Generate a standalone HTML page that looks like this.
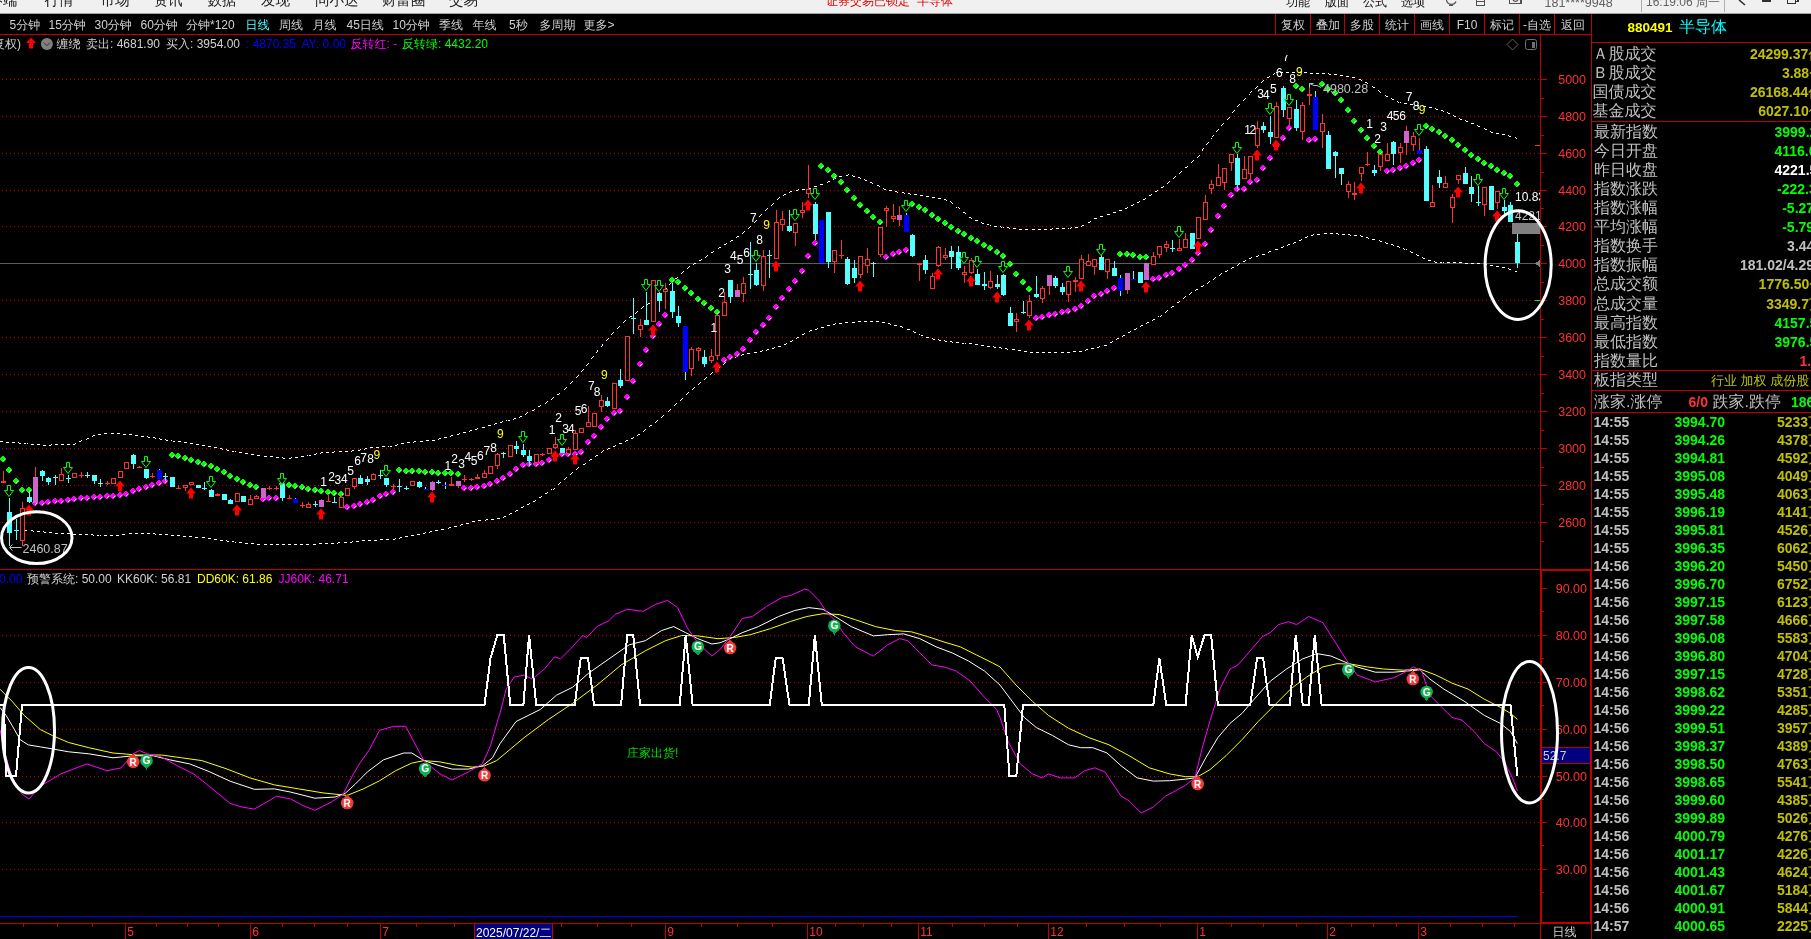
<!DOCTYPE html>
<html lang="zh"><head><meta charset="utf-8"><title>880491 半导体</title><style>
html,body{margin:0;padding:0;background:#000;}
#root{position:relative;width:1811px;height:939px;overflow:hidden;background:#000;font-family:"Liberation Sans","WenQuanYi Zen Hei","Noto Sans CJK SC",sans-serif;}
#topbar{position:absolute;left:0;top:0;width:1811px;height:13px;background:#f0f0f0;border-bottom:1px solid #a0a0a0;box-sizing:content-box}
#txt{position:absolute;left:0;top:0;width:1811px;height:939px;will-change:transform;transform:translateZ(0)}
.t{position:absolute;white-space:nowrap;line-height:1;color:#c0c0c0;}
.m14{font-size:14.5px;color:#202020;line-height:18px}
.m12{font-size:12px;color:#101010;line-height:14px}
.m12r{font-size:12px;color:#e00000;line-height:14px}
.p12{font-size:12px;line-height:14px;color:#d0d0d0;margin-top:1px}
.ax{font-size:12.5px;line-height:14px;color:#ff3232;text-align:right;margin-top:1px}
.ax2{font-size:12px;line-height:14px;color:#ff3232}
.num{font-size:12px;line-height:14px;color:#ffffff;text-align:center}
.lab{font-size:16px;line-height:18px;color:#c0c0c0;font-weight:300}
.hd{font-size:13.5px;line-height:14px;font-weight:bold;color:#ffff00}
.val{font-size:14px;line-height:14px;font-weight:bold}
.t13{font-size:13px;line-height:14px;color:#c0c000;font-weight:bold}
.y{color:#c0c000}.g{color:#00ff00}.w{color:#ffffff}.s{color:#c0c0c0}.r{color:#ff3232}
</style></head>
<body><div id="root">
<svg width="1811" height="939" viewBox="0 0 1811 939" shape-rendering="crispEdges" style="position:absolute;left:0;top:0"><rect x="0" y="0" width="1811" height="13" fill="#f0f0f0"/><rect x="0" y="13" width="1811" height="1" fill="#a0a0a0"/>
<rect x="1641" y="0" width="1" height="12" fill="#b0b0b0"/><rect x="1724" y="0" width="1" height="12" fill="#b0b0b0"/>
<path d="M1446.5,0 a5,5 0 0 0 9.5,1.5 M1449,5.5 h4" fill="none" stroke="#505050" stroke-width="1.2" shape-rendering="geometricPrecision"/>
<path d="M1476.5,0 V5.5 H1484.5 V0 M1476.5,1.5 H1484.5" fill="none" stroke="#505050" stroke-width="1.2"/>
<path d="M1509.5,0 V3.5 H1521 V0" fill="none" stroke="#505050" stroke-width="1.2"/><path d="M1513,0 a3,3 0 0 0 5,0" fill="none" stroke="#505050" stroke-width="1.2" shape-rendering="geometricPrecision"/>
<path d="M1739,0 L1745,5" fill="none" stroke="#303030" stroke-width="1.6" shape-rendering="geometricPrecision"/>
<rect x="1762" y="0" width="9" height="2" fill="#303030"/>
<path d="M1787.5,0 V3.5 H1795.5 V0 M1795.5,1.5 H1798 V0" fill="none" stroke="#303030" stroke-width="1.4"/>
<line x1="2" y1="79.5" x2="1540" y2="79.5" stroke="#c00000" stroke-width="1" stroke-dasharray="1 3"/>
<line x1="2" y1="116.5" x2="1540" y2="116.5" stroke="#c00000" stroke-width="1" stroke-dasharray="1 3"/>
<line x1="2" y1="153.5" x2="1540" y2="153.5" stroke="#c00000" stroke-width="1" stroke-dasharray="1 3"/>
<line x1="2" y1="190.5" x2="1540" y2="190.5" stroke="#c00000" stroke-width="1" stroke-dasharray="1 3"/>
<line x1="2" y1="226.5" x2="1540" y2="226.5" stroke="#c00000" stroke-width="1" stroke-dasharray="1 3"/>
<line x1="2" y1="300.5" x2="1540" y2="300.5" stroke="#c00000" stroke-width="1" stroke-dasharray="1 3"/>
<line x1="2" y1="337.5" x2="1540" y2="337.5" stroke="#c00000" stroke-width="1" stroke-dasharray="1 3"/>
<line x1="2" y1="374.5" x2="1540" y2="374.5" stroke="#c00000" stroke-width="1" stroke-dasharray="1 3"/>
<line x1="2" y1="411.5" x2="1540" y2="411.5" stroke="#c00000" stroke-width="1" stroke-dasharray="1 3"/>
<line x1="2" y1="448.5" x2="1540" y2="448.5" stroke="#c00000" stroke-width="1" stroke-dasharray="1 3"/>
<line x1="2" y1="485.5" x2="1540" y2="485.5" stroke="#c00000" stroke-width="1" stroke-dasharray="1 3"/>
<line x1="2" y1="522.5" x2="1540" y2="522.5" stroke="#c00000" stroke-width="1" stroke-dasharray="1 3"/>
<rect x="0" y="263" width="1540" height="1" fill="#5c5c5c"/>
<line x1="2" y1="635.5" x2="1540" y2="635.5" stroke="#c00000" stroke-width="1" stroke-dasharray="1 3"/>
<line x1="2" y1="682.5" x2="1540" y2="682.5" stroke="#c00000" stroke-width="1" stroke-dasharray="1 3"/>
<line x1="2" y1="729.5" x2="1540" y2="729.5" stroke="#c00000" stroke-width="1" stroke-dasharray="1 3"/>
<line x1="2" y1="776.5" x2="1540" y2="776.5" stroke="#c00000" stroke-width="1" stroke-dasharray="1 3"/>
<line x1="2" y1="822.5" x2="1540" y2="822.5" stroke="#c00000" stroke-width="1" stroke-dasharray="1 3"/>
<line x1="2" y1="869.5" x2="1540" y2="869.5" stroke="#c00000" stroke-width="1" stroke-dasharray="1 3"/>
<rect x="0" y="34" width="1592" height="1" fill="#c00000"/>
<rect x="1275" y="14" width="1" height="20" fill="#c00000"/>
<rect x="1310" y="14" width="1" height="20" fill="#c00000"/>
<rect x="1344" y="14" width="1" height="20" fill="#c00000"/>
<rect x="1379" y="14" width="1" height="20" fill="#c00000"/>
<rect x="1414" y="14" width="1" height="20" fill="#c00000"/>
<rect x="1449" y="14" width="1" height="20" fill="#c00000"/>
<rect x="1484" y="14" width="1" height="20" fill="#c00000"/>
<rect x="1519" y="14" width="1" height="20" fill="#c00000"/>
<rect x="1554" y="14" width="1" height="20" fill="#c00000"/>
<rect x="1591" y="14" width="1" height="925" fill="#c00000"/>
<rect x="1540" y="35" width="1" height="534" fill="#c00000"/>
<rect x="0" y="569" width="1592" height="1" fill="#c00000"/>
<rect x="0" y="923" width="1592" height="1" fill="#c00000"/>
<rect x="1540" y="569" width="1" height="370" fill="#c00000"/>
<rect x="1540" y="569" width="2" height="355" fill="#c00000"/>
<rect x="1590" y="569" width="2" height="355" fill="#c00000"/>
<rect x="1540" y="569" width="52" height="2" fill="#c00000"/>
<rect x="1540" y="922" width="52" height="2" fill="#c00000"/>
<rect x="1592" y="42" width="219" height="1" fill="#c00000"/>
<rect x="1592" y="121" width="219" height="1" fill="#c00000"/>
<rect x="1592" y="370" width="219" height="1" fill="#c00000"/>
<rect x="1592" y="390" width="219" height="1" fill="#c00000"/>
<rect x="1592" y="412" width="219" height="1" fill="#c00000"/>
<rect x="0" y="916" width="1518" height="1" fill="#0000ff"/>
<rect x="1541" y="79" width="6" height="1" fill="#c00000"/>
<rect x="1541" y="98" width="3" height="1" fill="#c00000"/>
<rect x="1541" y="116" width="6" height="1" fill="#c00000"/>
<rect x="1541" y="135" width="3" height="1" fill="#c00000"/>
<rect x="1541" y="153" width="6" height="1" fill="#c00000"/>
<rect x="1541" y="172" width="3" height="1" fill="#c00000"/>
<rect x="1541" y="190" width="6" height="1" fill="#c00000"/>
<rect x="1541" y="208" width="3" height="1" fill="#c00000"/>
<rect x="1541" y="226" width="6" height="1" fill="#c00000"/>
<rect x="1541" y="245" width="3" height="1" fill="#c00000"/>
<rect x="1541" y="263" width="6" height="1" fill="#c00000"/>
<rect x="1541" y="282" width="3" height="1" fill="#c00000"/>
<rect x="1541" y="300" width="6" height="1" fill="#c00000"/>
<rect x="1541" y="319" width="3" height="1" fill="#c00000"/>
<rect x="1541" y="337" width="6" height="1" fill="#c00000"/>
<rect x="1541" y="356" width="3" height="1" fill="#c00000"/>
<rect x="1541" y="374" width="6" height="1" fill="#c00000"/>
<rect x="1541" y="393" width="3" height="1" fill="#c00000"/>
<rect x="1541" y="411" width="6" height="1" fill="#c00000"/>
<rect x="1541" y="430" width="3" height="1" fill="#c00000"/>
<rect x="1541" y="448" width="6" height="1" fill="#c00000"/>
<rect x="1541" y="467" width="3" height="1" fill="#c00000"/>
<rect x="1541" y="485" width="6" height="1" fill="#c00000"/>
<rect x="1541" y="504" width="3" height="1" fill="#c00000"/>
<rect x="1541" y="522" width="6" height="1" fill="#c00000"/>
<rect x="1541" y="541" width="3" height="1" fill="#c00000"/>
<rect x="1535" y="145" width="5" height="1" fill="#ff3232"/>
<rect x="1535" y="300" width="5" height="1" fill="#00ff00"/>
<rect x="1542" y="588" width="5" height="1" fill="#c00000"/>
<rect x="1542" y="611" width="2" height="1" fill="#c00000"/>
<rect x="1542" y="635" width="5" height="1" fill="#c00000"/>
<rect x="1542" y="658" width="2" height="1" fill="#c00000"/>
<rect x="1542" y="682" width="5" height="1" fill="#c00000"/>
<rect x="1542" y="705" width="2" height="1" fill="#c00000"/>
<rect x="1542" y="729" width="5" height="1" fill="#c00000"/>
<rect x="1542" y="752" width="2" height="1" fill="#c00000"/>
<rect x="1542" y="776" width="5" height="1" fill="#c00000"/>
<rect x="1542" y="799" width="2" height="1" fill="#c00000"/>
<rect x="1542" y="822" width="5" height="1" fill="#c00000"/>
<rect x="1542" y="845" width="2" height="1" fill="#c00000"/>
<rect x="1542" y="869" width="5" height="1" fill="#c00000"/>
<rect x="1542" y="892" width="2" height="1" fill="#c00000"/>
<rect x="125" y="924" width="1" height="15" fill="#c00000"/>
<rect x="250" y="924" width="1" height="15" fill="#c00000"/>
<rect x="380" y="924" width="1" height="15" fill="#c00000"/>
<rect x="665" y="924" width="1" height="15" fill="#c00000"/>
<rect x="807" y="924" width="1" height="15" fill="#c00000"/>
<rect x="918" y="924" width="1" height="15" fill="#c00000"/>
<rect x="1048" y="924" width="1" height="15" fill="#c00000"/>
<rect x="1197" y="924" width="1" height="15" fill="#c00000"/>
<rect x="1327" y="924" width="1" height="15" fill="#c00000"/>
<rect x="1418" y="924" width="1" height="15" fill="#c00000"/>
<rect x="23" y="924" width="1" height="3" fill="#c00000"/>
<rect x="57" y="924" width="1" height="3" fill="#c00000"/>
<rect x="92" y="924" width="1" height="3" fill="#c00000"/>
<rect x="156" y="924" width="1" height="3" fill="#c00000"/>
<rect x="187" y="924" width="1" height="3" fill="#c00000"/>
<rect x="218" y="924" width="1" height="3" fill="#c00000"/>
<rect x="282" y="924" width="1" height="3" fill="#c00000"/>
<rect x="314" y="924" width="1" height="3" fill="#c00000"/>
<rect x="347" y="924" width="1" height="3" fill="#c00000"/>
<rect x="416" y="924" width="1" height="3" fill="#c00000"/>
<rect x="454" y="924" width="1" height="3" fill="#c00000"/>
<rect x="561" y="924" width="1" height="3" fill="#c00000"/>
<rect x="597" y="924" width="1" height="3" fill="#c00000"/>
<rect x="631" y="924" width="1" height="3" fill="#c00000"/>
<rect x="701" y="924" width="1" height="3" fill="#c00000"/>
<rect x="737" y="924" width="1" height="3" fill="#c00000"/>
<rect x="772" y="924" width="1" height="3" fill="#c00000"/>
<rect x="835" y="924" width="1" height="3" fill="#c00000"/>
<rect x="863" y="924" width="1" height="3" fill="#c00000"/>
<rect x="891" y="924" width="1" height="3" fill="#c00000"/>
<rect x="952" y="924" width="1" height="3" fill="#c00000"/>
<rect x="984" y="924" width="1" height="3" fill="#c00000"/>
<rect x="1017" y="924" width="1" height="3" fill="#c00000"/>
<rect x="1086" y="924" width="1" height="3" fill="#c00000"/>
<rect x="1124" y="924" width="1" height="3" fill="#c00000"/>
<rect x="1160" y="924" width="1" height="3" fill="#c00000"/>
<rect x="1231" y="924" width="1" height="3" fill="#c00000"/>
<rect x="1263" y="924" width="1" height="3" fill="#c00000"/>
<rect x="1296" y="924" width="1" height="3" fill="#c00000"/>
<rect x="1351" y="924" width="1" height="3" fill="#c00000"/>
<rect x="1373" y="924" width="1" height="3" fill="#c00000"/>
<rect x="1396" y="924" width="1" height="3" fill="#c00000"/>
<rect x="1450" y="924" width="1" height="3" fill="#c00000"/>
<rect x="1482" y="924" width="1" height="3" fill="#c00000"/>
<rect x="1514" y="924" width="1" height="3" fill="#c00000"/>
<path d="M1276,72h1v1h-1zM1280,72h3v1h-3zM1286,72h3v1h-3zM1292,72h3v1h-3zM1298,72h3v1h-3zM1304,72h3v1h-3zM1274,73h1v1h-1zM1310,73h3v1h-3zM1316,73h3v1h-3zM1322,73h3v1h-3zM1328,73h1v1h-1zM1273,74h1v1h-1zM1329,74h2v1h-2zM1334,74h3v1h-3zM1340,75h3v1h-3zM1269,76h1v1h-1zM1346,76h3v1h-3zM1267,77h2v1h-2zM1352,77h3v1h-3zM1359,79h2v1h-2zM1263,80h1v1h-1zM1361,80h1v1h-1zM1262,81h1v1h-1zM1261,82h1v1h-1zM1365,82h2v1h-2zM1367,83h1v1h-1zM1257,86h1v1h-1zM1372,86h1v1h-1zM1256,87h1v1h-1zM1373,87h2v1h-2zM1255,88h1v1h-1zM1378,90h1v1h-1zM1251,91h1v1h-1zM1379,91h1v1h-1zM1250,92h1v1h-1zM1380,92h1v1h-1zM1249,94h1v1h-1zM1385,95h1v1h-1zM1386,96h2v1h-2zM1245,98h1v1h-1zM1391,98h1v1h-1zM1244,99h1v1h-1zM1392,99h2v1h-2zM1243,100h1v1h-1zM1397,101h1v1h-1zM1398,102h1v1h-1zM1400,102h1v1h-1zM1404,103h3v1h-3zM1239,104h1v1h-1zM1410,104h3v1h-3zM1238,105h1v1h-1zM1416,105h3v1h-3zM1237,106h1v1h-1zM1423,106h3v1h-3zM1429,107h3v1h-3zM1435,108h1v1h-1zM1436,109h2v1h-2zM1234,110h1v1h-1zM1441,110h2v1h-2zM1233,111h1v1h-1zM1443,111h1v1h-1zM1232,112h1v1h-1zM1447,112h1v1h-1zM1448,113h2v1h-2zM1453,115h1v1h-1zM1454,116h2v1h-2zM1229,117h1v1h-1zM1228,118h1v1h-1zM1459,118h1v1h-1zM1227,119h1v1h-1zM1460,119h2v1h-2zM1465,120h1v1h-1zM1466,121h2v1h-2zM1223,123h1v1h-1zM1471,123h3v1h-3zM1222,124h1v1h-1zM1221,125h1v1h-1zM1477,125h1v1h-1zM1478,126h2v1h-2zM1484,128h1v1h-1zM1218,129h1v1h-1zM1485,129h2v1h-2zM1217,130h1v1h-1zM1216,131h1v1h-1zM1490,131h1v1h-1zM1491,132h2v1h-2zM1496,133h3v1h-3zM1502,134h3v1h-3zM1213,135h1v1h-1zM1508,135h1v1h-1zM1212,136h1v1h-1zM1509,136h2v1h-2zM1515,137h1v1h-1zM1211,138h1v1h-1zM1516,138h1v1h-1zM1208,142h1v1h-1zM1207,143h1v1h-1zM1206,144h1v1h-1zM1203,148h1v1h-1zM1202,149h1v1h-1zM1202,150h1v1h-1zM1199,155h1v1h-1zM1198,156h1v1h-1zM1197,157h1v1h-1zM1193,160h1v1h-1zM1192,161h1v1h-1zM1191,162h1v1h-1zM1187,166h1v1h-1zM1185,167h2v1h-2zM1181,171h1v1h-1zM1180,172h1v1h-1zM1179,173h1v1h-1zM848,174h1v1h-1zM846,175h2v1h-2zM852,175h1v1h-1zM839,176h3v1h-3zM853,176h2v1h-2zM1175,176h1v1h-1zM858,177h2v1h-2zM1174,177h1v1h-1zM834,178h2v1h-2zM860,178h1v1h-1zM1173,178h1v1h-1zM833,179h1v1h-1zM864,179h1v1h-1zM865,180h2v1h-2zM828,181h2v1h-2zM1169,181h1v1h-1zM827,182h1v1h-1zM870,182h2v1h-2zM1168,182h1v1h-1zM872,183h1v1h-1zM1167,183h1v1h-1zM820,184h3v1h-3zM877,185h2v1h-2zM814,186h3v1h-3zM879,186h1v1h-1zM1163,186h1v1h-1zM1161,187h2v1h-2zM808,188h3v1h-3zM883,188h1v1h-1zM798,189h1v1h-1zM802,189h3v1h-3zM884,189h2v1h-2zM796,190h2v1h-2zM889,190h3v1h-3zM1157,190h1v1h-1zM790,191h2v1h-2zM895,191h2v1h-2zM1155,191h2v1h-2zM789,192h1v1h-1zM897,192h1v1h-1zM902,192h2v1h-2zM904,193h1v1h-1zM908,193h2v1h-2zM784,194h2v1h-2zM910,194h1v1h-1zM914,194h3v1h-3zM1151,194h1v1h-1zM783,195h1v1h-1zM920,195h3v1h-3zM1149,195h2v1h-2zM926,196h3v1h-3zM779,197h1v1h-1zM932,197h3v1h-3zM778,198h1v1h-1zM938,198h3v1h-3zM1145,198h1v1h-1zM777,199h1v1h-1zM944,199h2v1h-2zM1143,199h2v1h-2zM946,200h1v1h-1zM950,201h1v1h-1zM1139,201h1v1h-1zM951,202h1v1h-1zM1137,202h2v1h-2zM773,203h1v1h-1zM952,203h1v1h-1zM772,204h1v1h-1zM1133,204h1v1h-1zM771,205h1v1h-1zM1131,205h2v1h-2zM956,207h1v1h-1zM958,207h1v1h-1zM1127,207h1v1h-1zM767,208h1v1h-1zM959,208h1v1h-1zM1125,208h2v1h-2zM766,209h1v1h-1zM765,210h1v1h-1zM1119,210h3v1h-3zM963,212h2v1h-2zM1113,212h3v1h-3zM965,213h1v1h-1zM761,214h1v1h-1zM1107,214h3v1h-3zM760,215h1v1h-1zM759,216h1v1h-1zM1100,216h3v1h-3zM969,217h2v1h-2zM971,218h1v1h-1zM1094,218h3v1h-3zM756,220h1v1h-1zM975,220h3v1h-3zM755,221h1v1h-1zM1090,221h1v1h-1zM754,222h1v1h-1zM981,222h1v1h-1zM1088,222h2v1h-2zM982,223h2v1h-2zM987,224h2v1h-2zM990,225h1v1h-1zM1082,225h2v1h-2zM750,226h1v1h-1zM994,226h3v1h-3zM1000,226h1v1h-1zM1081,226h1v1h-1zM749,227h1v1h-1zM1001,227h1v1h-1zM1003,227h1v1h-1zM1007,227h2v1h-2zM1071,227h1v1h-1zM1075,227h3v1h-3zM748,228h1v1h-1zM1009,228h1v1h-1zM1013,228h3v1h-3zM1052,228h1v1h-1zM1056,228h3v1h-3zM1062,228h3v1h-3zM1068,228h1v1h-1zM1070,228h1v1h-1zM1019,229h3v1h-3zM1025,229h3v1h-3zM1032,229h3v1h-3zM1038,229h3v1h-3zM1044,229h3v1h-3zM1050,229h2v1h-2zM744,231h1v1h-1zM743,232h1v1h-1zM742,233h1v1h-1zM737,236h2v1h-2zM736,237h1v1h-1zM731,240h2v1h-2zM730,241h1v1h-1zM726,243h1v1h-1zM724,244h2v1h-2zM719,247h2v1h-2zM718,248h1v1h-1zM713,251h1v1h-1zM711,252h2v1h-2zM707,255h1v1h-1zM706,256h1v1h-1zM705,257h1v1h-1zM701,259h1v1h-1zM699,260h2v1h-2zM694,263h2v1h-2zM693,264h1v1h-1zM689,266h1v1h-1zM688,267h1v1h-1zM687,268h1v1h-1zM683,271h1v1h-1zM682,272h1v1h-1zM681,273h1v1h-1zM677,277h1v1h-1zM675,278h2v1h-2zM671,282h1v1h-1zM670,283h1v1h-1zM669,284h1v1h-1zM666,288h1v1h-1zM665,289h1v1h-1zM664,290h1v1h-1zM661,295h1v1h-1zM659,296h2v1h-2zM655,299h1v1h-1zM653,300h2v1h-2zM648,303h2v1h-2zM647,304h1v1h-1zM643,306h1v1h-1zM642,307h1v1h-1zM641,308h1v1h-1zM637,311h1v1h-1zM636,312h1v1h-1zM635,313h1v1h-1zM630,316h2v1h-2zM629,317h1v1h-1zM625,320h1v1h-1zM624,321h1v1h-1zM623,322h1v1h-1zM619,326h1v1h-1zM618,327h1v1h-1zM617,328h1v1h-1zM613,332h1v1h-1zM612,333h1v1h-1zM611,334h1v1h-1zM608,338h1v1h-1zM607,339h1v1h-1zM606,340h1v1h-1zM602,344h1v1h-1zM602,345h1v1h-1zM601,346h1v1h-1zM597,350h1v1h-1zM597,351h1v1h-1zM596,352h1v1h-1zM593,356h1v1h-1zM592,357h1v1h-1zM591,358h1v1h-1zM588,363h1v1h-1zM587,364h1v1h-1zM586,365h1v1h-1zM583,369h1v1h-1zM582,370h1v1h-1zM581,371h1v1h-1zM578,375h1v1h-1zM577,376h1v1h-1zM576,377h1v1h-1zM572,381h1v1h-1zM571,382h1v1h-1zM570,383h1v1h-1zM566,387h1v1h-1zM565,388h1v1h-1zM564,389h1v1h-1zM559,393h1v1h-1zM557,394h2v1h-2zM553,397h1v1h-1zM552,398h1v1h-1zM551,399h1v1h-1zM547,401h1v1h-1zM546,402h1v1h-1zM545,403h1v1h-1zM540,405h1v1h-1zM538,406h2v1h-2zM534,409h1v1h-1zM532,410h2v1h-2zM527,412h1v1h-1zM526,413h1v1h-1zM525,414h1v1h-1zM520,416h2v1h-2zM519,417h1v1h-1zM514,418h2v1h-2zM513,419h1v1h-1zM506,420h1v1h-1zM508,420h2v1h-2zM502,421h1v1h-1zM500,422h2v1h-2zM495,423h2v1h-2zM494,424h1v1h-1zM488,425h3v1h-3zM482,427h3v1h-3zM477,428h1v1h-1zM475,429h2v1h-2zM470,430h2v1h-2zM469,431h1v1h-1zM463,432h3v1h-3zM104,433h3v1h-3zM111,433h3v1h-3zM117,433h3v1h-3zM459,433h1v1h-1zM98,434h3v1h-3zM123,434h3v1h-3zM129,434h3v1h-3zM457,434h2v1h-2zM93,435h2v1h-2zM135,435h3v1h-3zM451,435h2v1h-2zM92,436h1v1h-1zM141,436h3v1h-3zM147,436h1v1h-1zM450,436h1v1h-1zM148,437h2v1h-2zM153,437h2v1h-2zM444,437h3v1h-3zM87,438h2v1h-2zM155,438h1v1h-1zM159,438h1v1h-1zM439,438h2v1h-2zM86,439h1v1h-1zM160,439h2v1h-2zM165,439h1v1h-1zM438,439h1v1h-1zM81,440h1v1h-1zM166,440h2v1h-2zM171,440h1v1h-1zM426,440h3v1h-3zM432,440h3v1h-3zM0,441h3v1h-3zM79,441h2v1h-2zM173,441h2v1h-2zM178,441h3v1h-3zM414,441h2v1h-2zM420,441h3v1h-3zM6,442h3v1h-3zM12,442h3v1h-3zM18,442h1v1h-1zM184,442h3v1h-3zM407,442h3v1h-3zM413,442h1v1h-1zM19,443h2v1h-2zM24,443h2v1h-2zM27,443h1v1h-1zM75,443h1v1h-1zM190,443h3v1h-3zM401,443h3v1h-3zM31,444h3v1h-3zM37,444h3v1h-3zM51,444h1v1h-1zM55,444h3v1h-3zM61,444h3v1h-3zM67,444h3v1h-3zM73,444h2v1h-2zM196,444h3v1h-3zM397,444h1v1h-1zM43,445h3v1h-3zM49,445h2v1h-2zM202,445h3v1h-3zM395,445h2v1h-2zM208,446h3v1h-3zM382,446h3v1h-3zM388,446h1v1h-1zM390,446h2v1h-2zM214,447h3v1h-3zM370,447h3v1h-3zM376,447h3v1h-3zM220,448h2v1h-2zM365,448h2v1h-2zM222,449h1v1h-1zM226,449h1v1h-1zM360,449h1v1h-1zM364,449h1v1h-1zM227,450h2v1h-2zM352,450h2v1h-2zM358,450h2v1h-2zM232,451h2v1h-2zM235,451h1v1h-1zM334,451h1v1h-1zM339,451h3v1h-3zM345,451h3v1h-3zM351,451h1v1h-1zM239,452h3v1h-3zM321,452h2v1h-2zM326,452h3v1h-3zM332,452h2v1h-2zM245,453h3v1h-3zM316,453h1v1h-1zM320,453h1v1h-1zM251,454h3v1h-3zM314,454h2v1h-2zM257,455h3v1h-3zM307,455h1v1h-1zM309,455h2v1h-2zM264,456h3v1h-3zM270,456h3v1h-3zM301,456h3v1h-3zM276,457h3v1h-3zM282,457h1v1h-1zM291,457h1v1h-1zM295,457h3v1h-3zM283,458h2v1h-2zM289,458h2v1h-2z" fill="#fff"/>
<path d="M1324,233h3v1h-3zM1330,233h3v1h-3zM1336,233h2v1h-2zM1313,234h1v1h-1zM1317,234h3v1h-3zM1338,234h1v1h-1zM1342,234h3v1h-3zM1348,234h2v1h-2zM1311,235h2v1h-2zM1350,235h1v1h-1zM1354,235h3v1h-3zM1360,235h1v1h-1zM1307,236h1v1h-1zM1361,236h2v1h-2zM1305,237h2v1h-2zM1366,237h2v1h-2zM1368,238h1v1h-1zM1301,239h1v1h-1zM1372,239h3v1h-3zM1299,240h2v1h-2zM1379,240h1v1h-1zM1380,241h2v1h-2zM1294,242h2v1h-2zM1385,242h1v1h-1zM1293,243h1v1h-1zM1386,243h2v1h-2zM1288,244h2v1h-2zM1391,244h2v1h-2zM1287,245h1v1h-1zM1393,245h1v1h-1zM1283,246h1v1h-1zM1397,246h2v1h-2zM1281,247h2v1h-2zM1399,247h1v1h-1zM1403,248h1v1h-1zM1275,249h3v1h-3zM1404,249h1v1h-1zM1406,249h1v1h-1zM1269,251h2v1h-2zM1410,251h1v1h-1zM1268,252h1v1h-1zM1411,252h2v1h-2zM1262,254h3v1h-3zM1416,254h1v1h-1zM1258,255h1v1h-1zM1417,255h2v1h-2zM1256,256h2v1h-2zM1251,257h1v1h-1zM1422,257h1v1h-1zM1249,258h2v1h-2zM1423,258h2v1h-2zM1245,260h1v1h-1zM1428,260h3v1h-3zM1243,261h2v1h-2zM1434,261h1v1h-1zM1435,262h2v1h-2zM1440,262h2v1h-2zM1443,262h1v1h-1zM1447,262h3v1h-3zM1453,262h3v1h-3zM1459,262h3v1h-3zM1239,263h1v1h-1zM1465,263h3v1h-3zM1471,263h3v1h-3zM1477,263h3v1h-3zM1484,263h1v1h-1zM1238,264h1v1h-1zM1485,264h2v1h-2zM1237,265h1v1h-1zM1490,265h3v1h-3zM1496,266h3v1h-3zM1232,267h2v1h-2zM1502,267h3v1h-3zM1231,268h1v1h-1zM1508,268h1v1h-1zM1509,269h2v1h-2zM1227,270h1v1h-1zM1225,271h2v1h-2zM1515,271h2v1h-2zM1221,273h1v1h-1zM1220,274h1v1h-1zM1219,275h1v1h-1zM1215,277h1v1h-1zM1214,278h1v1h-1zM1213,279h1v1h-1zM1209,281h1v1h-1zM1208,282h1v1h-1zM1207,283h1v1h-1zM1203,285h1v1h-1zM1201,286h2v1h-2zM1196,289h2v1h-2zM1195,290h1v1h-1zM1191,292h1v1h-1zM1190,293h1v1h-1zM1189,294h1v1h-1zM1185,296h1v1h-1zM1184,297h1v1h-1zM1183,298h1v1h-1zM1179,301h1v1h-1zM1177,302h2v1h-2zM1172,306h2v1h-2zM1171,307h1v1h-1zM1167,310h1v1h-1zM1166,311h1v1h-1zM1165,312h1v1h-1zM1161,315h1v1h-1zM1158,316h1v1h-1zM1160,316h1v1h-1zM1153,319h2v1h-2zM1152,320h1v1h-1zM858,321h3v1h-3zM864,321h3v1h-3zM870,321h3v1h-3zM876,321h3v1h-3zM845,322h3v1h-3zM852,322h3v1h-3zM882,322h3v1h-3zM1147,322h2v1h-2zM835,323h1v1h-1zM839,323h3v1h-3zM888,323h2v1h-2zM1146,323h1v1h-1zM833,324h2v1h-2zM890,324h1v1h-1zM827,325h3v1h-3zM894,325h3v1h-3zM1141,325h2v1h-2zM900,326h2v1h-2zM1140,326h1v1h-1zM821,327h3v1h-3zM902,327h1v1h-1zM817,328h1v1h-1zM1136,328h1v1h-1zM815,329h2v1h-2zM907,329h3v1h-3zM1134,329h2v1h-2zM810,330h2v1h-2zM809,331h1v1h-1zM913,331h1v1h-1zM1130,331h1v1h-1zM914,332h2v1h-2zM1128,332h2v1h-2zM804,333h1v1h-1zM802,334h2v1h-2zM919,334h1v1h-1zM921,335h2v1h-2zM1123,335h2v1h-2zM1122,336h1v1h-1zM797,337h2v1h-2zM926,337h3v1h-3zM796,338h1v1h-1zM932,338h1v1h-1zM1117,338h2v1h-2zM933,339h2v1h-2zM938,339h1v1h-1zM1116,339h1v1h-1zM792,340h1v1h-1zM939,340h2v1h-2zM944,340h1v1h-1zM790,341h2v1h-2zM945,341h2v1h-2zM950,341h2v1h-2zM1112,341h1v1h-1zM952,342h1v1h-1zM956,342h3v1h-3zM1110,342h2v1h-2zM786,343h1v1h-1zM962,343h2v1h-2zM965,343h1v1h-1zM969,343h3v1h-3zM784,344h2v1h-2zM975,344h3v1h-3zM981,345h3v1h-3zM1104,345h3v1h-3zM778,346h3v1h-3zM987,346h3v1h-3zM993,346h1v1h-1zM1099,346h1v1h-1zM774,347h1v1h-1zM994,347h2v1h-2zM999,347h2v1h-2zM1097,347h2v1h-2zM772,348h2v1h-2zM1001,348h1v1h-1zM1005,348h2v1h-2zM1091,348h3v1h-3zM767,349h2v1h-2zM1007,349h1v1h-1zM1012,349h3v1h-3zM1086,349h2v1h-2zM762,350h1v1h-1zM766,350h1v1h-1zM1018,350h3v1h-3zM1085,350h1v1h-1zM760,351h2v1h-2zM1024,351h3v1h-3zM1073,351h3v1h-3zM1079,351h3v1h-3zM754,352h3v1h-3zM1030,352h3v1h-3zM1036,352h3v1h-3zM1042,352h3v1h-3zM1048,352h3v1h-3zM1054,352h3v1h-3zM1061,352h3v1h-3zM1067,352h3v1h-3zM747,353h3v1h-3zM742,354h2v1h-2zM741,355h1v1h-1zM736,356h2v1h-2zM735,357h1v1h-1zM731,358h1v1h-1zM729,359h2v1h-2zM725,362h1v1h-1zM724,363h1v1h-1zM723,364h1v1h-1zM719,367h1v1h-1zM717,368h1v1h-1zM716,369h1v1h-1zM712,372h1v1h-1zM711,373h1v1h-1zM710,374h1v1h-1zM706,377h1v1h-1zM705,378h1v1h-1zM704,379h1v1h-1zM700,382h1v1h-1zM699,383h1v1h-1zM698,384h1v1h-1zM694,387h1v1h-1zM693,388h1v1h-1zM692,389h1v1h-1zM688,392h1v1h-1zM687,393h1v1h-1zM686,394h1v1h-1zM682,398h1v1h-1zM681,399h1v1h-1zM680,400h1v1h-1zM676,403h1v1h-1zM675,404h1v1h-1zM674,405h1v1h-1zM670,409h1v1h-1zM669,410h1v1h-1zM668,411h1v1h-1zM663,415h1v1h-1zM662,416h1v1h-1zM661,417h1v1h-1zM657,420h1v1h-1zM656,421h1v1h-1zM655,422h1v1h-1zM650,425h2v1h-2zM649,426h1v1h-1zM645,429h1v1h-1zM644,430h1v1h-1zM643,431h1v1h-1zM638,434h2v1h-2zM637,435h1v1h-1zM633,437h1v1h-1zM631,438h2v1h-2zM626,440h2v1h-2zM625,441h1v1h-1zM619,443h3v1h-3zM615,445h1v1h-1zM613,446h2v1h-2zM608,448h2v1h-2zM607,449h1v1h-1zM603,450h1v1h-1zM602,451h1v1h-1zM601,452h1v1h-1zM596,455h2v1h-2zM595,456h1v1h-1zM590,459h2v1h-2zM589,460h1v1h-1zM585,463h1v1h-1zM583,464h2v1h-2zM578,467h1v1h-1zM577,468h1v1h-1zM576,469h1v1h-1zM572,472h1v1h-1zM571,473h1v1h-1zM570,474h1v1h-1zM566,477h1v1h-1zM565,478h1v1h-1zM564,479h1v1h-1zM560,482h1v1h-1zM559,483h1v1h-1zM558,484h1v1h-1zM554,488h1v1h-1zM551,489h1v1h-1zM553,489h1v1h-1zM547,492h1v1h-1zM545,493h2v1h-2zM541,496h1v1h-1zM539,497h2v1h-2zM535,500h1v1h-1zM533,501h2v1h-2zM529,503h1v1h-1zM527,504h2v1h-2zM523,506h1v1h-1zM521,507h2v1h-2zM516,510h2v1h-2zM515,511h1v1h-1zM510,513h2v1h-2zM509,514h1v1h-1zM504,516h2v1h-2zM503,517h1v1h-1zM497,518h3v1h-3zM486,519h2v1h-2zM491,519h3v1h-3zM478,520h3v1h-3zM485,520h1v1h-1zM472,521h3v1h-3zM466,523h3v1h-3zM461,524h2v1h-2zM460,525h1v1h-1zM454,526h3v1h-3zM449,527h2v1h-2zM448,528h1v1h-1zM441,529h3v1h-3zM24,530h3v1h-3zM31,530h2v1h-2zM435,530h3v1h-3zM33,531h1v1h-1zM37,531h3v1h-3zM43,531h1v1h-1zM430,531h2v1h-2zM44,532h2v1h-2zM49,532h3v1h-3zM425,532h1v1h-1zM429,532h1v1h-1zM55,533h3v1h-3zM61,533h3v1h-3zM67,533h3v1h-3zM129,533h3v1h-3zM135,533h3v1h-3zM141,533h3v1h-3zM147,533h3v1h-3zM153,533h2v1h-2zM423,533h2v1h-2zM73,534h3v1h-3zM79,534h3v1h-3zM85,534h3v1h-3zM91,534h2v1h-2zM122,534h3v1h-3zM155,534h1v1h-1zM159,534h3v1h-3zM165,534h3v1h-3zM417,534h3v1h-3zM93,535h1v1h-1zM97,535h2v1h-2zM100,535h1v1h-1zM104,535h3v1h-3zM110,535h3v1h-3zM116,535h3v1h-3zM171,535h3v1h-3zM177,535h3v1h-3zM411,535h3v1h-3zM183,536h3v1h-3zM189,536h3v1h-3zM405,536h3v1h-3zM195,537h3v1h-3zM202,537h3v1h-3zM400,537h2v1h-2zM208,538h3v1h-3zM395,538h1v1h-1zM399,538h1v1h-1zM214,539h3v1h-3zM380,539h3v1h-3zM386,539h3v1h-3zM393,539h2v1h-2zM220,540h3v1h-3zM226,540h1v1h-1zM362,540h3v1h-3zM368,540h3v1h-3zM374,540h3v1h-3zM227,541h2v1h-2zM232,541h2v1h-2zM352,541h1v1h-1zM356,541h3v1h-3zM235,542h1v1h-1zM239,542h3v1h-3zM338,542h2v1h-2zM344,542h3v1h-3zM350,542h2v1h-2zM245,543h3v1h-3zM251,543h3v1h-3zM319,543h3v1h-3zM325,543h3v1h-3zM331,543h3v1h-3zM337,543h1v1h-1zM257,544h3v1h-3zM264,544h3v1h-3zM270,544h3v1h-3zM276,544h3v1h-3zM282,544h3v1h-3zM288,544h3v1h-3zM294,544h3v1h-3zM300,544h3v1h-3zM306,544h3v1h-3zM313,544h3v1h-3z" fill="#fff"/>
<path d="M2.0,456 h2 v1 h1 v1 h1 v2 h-1 v1 h-1 v1 h-2 v-1 h-1 v-1 h-1 v-2 h1 v-1 h1z" fill="#00ff00"/>
<rect x="4.0" y="459" width="1" height="1" fill="#fff"/><rect x="3.0" y="460" width="1" height="1" fill="#fff"/>
<path d="M8.0,467 h2 v1 h1 v1 h1 v2 h-1 v1 h-1 v1 h-2 v-1 h-1 v-1 h-1 v-2 h1 v-1 h1z" fill="#00ff00"/>
<rect x="10.0" y="470" width="1" height="1" fill="#fff"/><rect x="9.0" y="471" width="1" height="1" fill="#fff"/>
<path d="M15.0,478 h2 v1 h1 v1 h1 v2 h-1 v1 h-1 v1 h-2 v-1 h-1 v-1 h-1 v-2 h1 v-1 h1z" fill="#00ff00"/>
<rect x="17.0" y="481" width="1" height="1" fill="#fff"/><rect x="16.0" y="482" width="1" height="1" fill="#fff"/>
<path d="M21.0,487 h2 v1 h1 v1 h1 v2 h-1 v1 h-1 v1 h-2 v-1 h-1 v-1 h-1 v-2 h1 v-1 h1z" fill="#00ff00"/>
<rect x="23.0" y="490" width="1" height="1" fill="#fff"/><rect x="22.0" y="491" width="1" height="1" fill="#fff"/>
<path d="M28.0,487 h2 v1 h1 v1 h1 v2 h-1 v1 h-1 v1 h-2 v-1 h-1 v-1 h-1 v-2 h1 v-1 h1z" fill="#00ff00"/>
<rect x="30.0" y="490" width="1" height="1" fill="#fff"/><rect x="29.0" y="491" width="1" height="1" fill="#fff"/>
<path d="M171.0,452 h2 v1 h1 v1 h1 v2 h-1 v1 h-1 v1 h-2 v-1 h-1 v-1 h-1 v-2 h1 v-1 h1z" fill="#00ff00"/>
<rect x="173.0" y="455" width="1" height="1" fill="#fff"/><rect x="172.0" y="456" width="1" height="1" fill="#fff"/>
<path d="M177.0,453 h2 v1 h1 v1 h1 v2 h-1 v1 h-1 v1 h-2 v-1 h-1 v-1 h-1 v-2 h1 v-1 h1z" fill="#00ff00"/>
<rect x="179.0" y="456" width="1" height="1" fill="#fff"/><rect x="178.0" y="457" width="1" height="1" fill="#fff"/>
<path d="M184.0,455 h2 v1 h1 v1 h1 v2 h-1 v1 h-1 v1 h-2 v-1 h-1 v-1 h-1 v-2 h1 v-1 h1z" fill="#00ff00"/>
<rect x="186.0" y="458" width="1" height="1" fill="#fff"/><rect x="185.0" y="459" width="1" height="1" fill="#fff"/>
<path d="M190.0,457 h2 v1 h1 v1 h1 v2 h-1 v1 h-1 v1 h-2 v-1 h-1 v-1 h-1 v-2 h1 v-1 h1z" fill="#00ff00"/>
<rect x="192.0" y="460" width="1" height="1" fill="#fff"/><rect x="191.0" y="461" width="1" height="1" fill="#fff"/>
<path d="M197.0,459 h2 v1 h1 v1 h1 v2 h-1 v1 h-1 v1 h-2 v-1 h-1 v-1 h-1 v-2 h1 v-1 h1z" fill="#00ff00"/>
<rect x="199.0" y="462" width="1" height="1" fill="#fff"/><rect x="198.0" y="463" width="1" height="1" fill="#fff"/>
<path d="M203.0,461 h2 v1 h1 v1 h1 v2 h-1 v1 h-1 v1 h-2 v-1 h-1 v-1 h-1 v-2 h1 v-1 h1z" fill="#00ff00"/>
<rect x="205.0" y="464" width="1" height="1" fill="#fff"/><rect x="204.0" y="465" width="1" height="1" fill="#fff"/>
<path d="M210.0,463 h2 v1 h1 v1 h1 v2 h-1 v1 h-1 v1 h-2 v-1 h-1 v-1 h-1 v-2 h1 v-1 h1z" fill="#00ff00"/>
<rect x="212.0" y="466" width="1" height="1" fill="#fff"/><rect x="211.0" y="467" width="1" height="1" fill="#fff"/>
<path d="M216.0,466 h2 v1 h1 v1 h1 v2 h-1 v1 h-1 v1 h-2 v-1 h-1 v-1 h-1 v-2 h1 v-1 h1z" fill="#00ff00"/>
<rect x="218.0" y="469" width="1" height="1" fill="#fff"/><rect x="217.0" y="470" width="1" height="1" fill="#fff"/>
<path d="M223.0,469 h2 v1 h1 v1 h1 v2 h-1 v1 h-1 v1 h-2 v-1 h-1 v-1 h-1 v-2 h1 v-1 h1z" fill="#00ff00"/>
<rect x="225.0" y="472" width="1" height="1" fill="#fff"/><rect x="224.0" y="473" width="1" height="1" fill="#fff"/>
<path d="M229.0,473 h2 v1 h1 v1 h1 v2 h-1 v1 h-1 v1 h-2 v-1 h-1 v-1 h-1 v-2 h1 v-1 h1z" fill="#00ff00"/>
<rect x="231.0" y="476" width="1" height="1" fill="#fff"/><rect x="230.0" y="477" width="1" height="1" fill="#fff"/>
<path d="M236.0,476 h2 v1 h1 v1 h1 v2 h-1 v1 h-1 v1 h-2 v-1 h-1 v-1 h-1 v-2 h1 v-1 h1z" fill="#00ff00"/>
<rect x="238.0" y="479" width="1" height="1" fill="#fff"/><rect x="237.0" y="480" width="1" height="1" fill="#fff"/>
<path d="M242.0,479 h2 v1 h1 v1 h1 v2 h-1 v1 h-1 v1 h-2 v-1 h-1 v-1 h-1 v-2 h1 v-1 h1z" fill="#00ff00"/>
<rect x="244.0" y="482" width="1" height="1" fill="#fff"/><rect x="243.0" y="483" width="1" height="1" fill="#fff"/>
<path d="M249.0,482 h2 v1 h1 v1 h1 v2 h-1 v1 h-1 v1 h-2 v-1 h-1 v-1 h-1 v-2 h1 v-1 h1z" fill="#00ff00"/>
<rect x="251.0" y="485" width="1" height="1" fill="#fff"/><rect x="250.0" y="486" width="1" height="1" fill="#fff"/>
<path d="M255.0,484 h2 v1 h1 v1 h1 v2 h-1 v1 h-1 v1 h-2 v-1 h-1 v-1 h-1 v-2 h1 v-1 h1z" fill="#00ff00"/>
<rect x="257.0" y="487" width="1" height="1" fill="#fff"/><rect x="256.0" y="488" width="1" height="1" fill="#fff"/>
<path d="M281.0,481 h2 v1 h1 v1 h1 v2 h-1 v1 h-1 v1 h-2 v-1 h-1 v-1 h-1 v-2 h1 v-1 h1z" fill="#00ff00"/>
<rect x="283.0" y="484" width="1" height="1" fill="#fff"/><rect x="282.0" y="485" width="1" height="1" fill="#fff"/>
<path d="M288.0,482 h2 v1 h1 v1 h1 v2 h-1 v1 h-1 v1 h-2 v-1 h-1 v-1 h-1 v-2 h1 v-1 h1z" fill="#00ff00"/>
<rect x="290.0" y="485" width="1" height="1" fill="#fff"/><rect x="289.0" y="486" width="1" height="1" fill="#fff"/>
<path d="M294.0,483 h2 v1 h1 v1 h1 v2 h-1 v1 h-1 v1 h-2 v-1 h-1 v-1 h-1 v-2 h1 v-1 h1z" fill="#00ff00"/>
<rect x="296.0" y="486" width="1" height="1" fill="#fff"/><rect x="295.0" y="487" width="1" height="1" fill="#fff"/>
<path d="M301.0,484 h2 v1 h1 v1 h1 v2 h-1 v1 h-1 v1 h-2 v-1 h-1 v-1 h-1 v-2 h1 v-1 h1z" fill="#00ff00"/>
<rect x="303.0" y="487" width="1" height="1" fill="#fff"/><rect x="302.0" y="488" width="1" height="1" fill="#fff"/>
<path d="M307.0,486 h2 v1 h1 v1 h1 v2 h-1 v1 h-1 v1 h-2 v-1 h-1 v-1 h-1 v-2 h1 v-1 h1z" fill="#00ff00"/>
<rect x="309.0" y="489" width="1" height="1" fill="#fff"/><rect x="308.0" y="490" width="1" height="1" fill="#fff"/>
<path d="M314.0,487 h2 v1 h1 v1 h1 v2 h-1 v1 h-1 v1 h-2 v-1 h-1 v-1 h-1 v-2 h1 v-1 h1z" fill="#00ff00"/>
<rect x="316.0" y="490" width="1" height="1" fill="#fff"/><rect x="315.0" y="491" width="1" height="1" fill="#fff"/>
<path d="M320.0,488 h2 v1 h1 v1 h1 v2 h-1 v1 h-1 v1 h-2 v-1 h-1 v-1 h-1 v-2 h1 v-1 h1z" fill="#00ff00"/>
<rect x="322.0" y="491" width="1" height="1" fill="#fff"/><rect x="321.0" y="492" width="1" height="1" fill="#fff"/>
<path d="M327.0,489 h2 v1 h1 v1 h1 v2 h-1 v1 h-1 v1 h-2 v-1 h-1 v-1 h-1 v-2 h1 v-1 h1z" fill="#00ff00"/>
<rect x="329.0" y="492" width="1" height="1" fill="#fff"/><rect x="328.0" y="493" width="1" height="1" fill="#fff"/>
<path d="M333.0,490 h2 v1 h1 v1 h1 v2 h-1 v1 h-1 v1 h-2 v-1 h-1 v-1 h-1 v-2 h1 v-1 h1z" fill="#00ff00"/>
<rect x="335.0" y="493" width="1" height="1" fill="#fff"/><rect x="334.0" y="494" width="1" height="1" fill="#fff"/>
<path d="M340.0,491 h2 v1 h1 v1 h1 v2 h-1 v1 h-1 v1 h-2 v-1 h-1 v-1 h-1 v-2 h1 v-1 h1z" fill="#00ff00"/>
<rect x="342.0" y="494" width="1" height="1" fill="#fff"/><rect x="341.0" y="495" width="1" height="1" fill="#fff"/>
<path d="M398.0,467 h2 v1 h1 v1 h1 v2 h-1 v1 h-1 v1 h-2 v-1 h-1 v-1 h-1 v-2 h1 v-1 h1z" fill="#00ff00"/>
<rect x="400.0" y="470" width="1" height="1" fill="#fff"/><rect x="399.0" y="471" width="1" height="1" fill="#fff"/>
<path d="M405.0,468 h2 v1 h1 v1 h1 v2 h-1 v1 h-1 v1 h-2 v-1 h-1 v-1 h-1 v-2 h1 v-1 h1z" fill="#00ff00"/>
<rect x="407.0" y="471" width="1" height="1" fill="#fff"/><rect x="406.0" y="472" width="1" height="1" fill="#fff"/>
<path d="M411.0,468 h2 v1 h1 v1 h1 v2 h-1 v1 h-1 v1 h-2 v-1 h-1 v-1 h-1 v-2 h1 v-1 h1z" fill="#00ff00"/>
<rect x="413.0" y="471" width="1" height="1" fill="#fff"/><rect x="412.0" y="472" width="1" height="1" fill="#fff"/>
<path d="M418.0,468 h2 v1 h1 v1 h1 v2 h-1 v1 h-1 v1 h-2 v-1 h-1 v-1 h-1 v-2 h1 v-1 h1z" fill="#00ff00"/>
<rect x="420.0" y="471" width="1" height="1" fill="#fff"/><rect x="419.0" y="472" width="1" height="1" fill="#fff"/>
<path d="M424.0,469 h2 v1 h1 v1 h1 v2 h-1 v1 h-1 v1 h-2 v-1 h-1 v-1 h-1 v-2 h1 v-1 h1z" fill="#00ff00"/>
<rect x="426.0" y="472" width="1" height="1" fill="#fff"/><rect x="425.0" y="473" width="1" height="1" fill="#fff"/>
<path d="M431.0,469 h2 v1 h1 v1 h1 v2 h-1 v1 h-1 v1 h-2 v-1 h-1 v-1 h-1 v-2 h1 v-1 h1z" fill="#00ff00"/>
<rect x="433.0" y="472" width="1" height="1" fill="#fff"/><rect x="432.0" y="473" width="1" height="1" fill="#fff"/>
<path d="M437.0,470 h2 v1 h1 v1 h1 v2 h-1 v1 h-1 v1 h-2 v-1 h-1 v-1 h-1 v-2 h1 v-1 h1z" fill="#00ff00"/>
<rect x="439.0" y="473" width="1" height="1" fill="#fff"/><rect x="438.0" y="474" width="1" height="1" fill="#fff"/>
<path d="M444.0,470 h2 v1 h1 v1 h1 v2 h-1 v1 h-1 v1 h-2 v-1 h-1 v-1 h-1 v-2 h1 v-1 h1z" fill="#00ff00"/>
<rect x="446.0" y="473" width="1" height="1" fill="#fff"/><rect x="445.0" y="474" width="1" height="1" fill="#fff"/>
<path d="M450.0,470 h2 v1 h1 v1 h1 v2 h-1 v1 h-1 v1 h-2 v-1 h-1 v-1 h-1 v-2 h1 v-1 h1z" fill="#00ff00"/>
<rect x="452.0" y="473" width="1" height="1" fill="#fff"/><rect x="451.0" y="474" width="1" height="1" fill="#fff"/>
<path d="M457.0,471 h2 v1 h1 v1 h1 v2 h-1 v1 h-1 v1 h-2 v-1 h-1 v-1 h-1 v-2 h1 v-1 h1z" fill="#00ff00"/>
<rect x="459.0" y="474" width="1" height="1" fill="#fff"/><rect x="458.0" y="475" width="1" height="1" fill="#fff"/>
<path d="M671.0,277 h2 v1 h1 v1 h1 v2 h-1 v1 h-1 v1 h-2 v-1 h-1 v-1 h-1 v-2 h1 v-1 h1z" fill="#00ff00"/>
<rect x="673.0" y="280" width="1" height="1" fill="#fff"/><rect x="672.0" y="281" width="1" height="1" fill="#fff"/>
<path d="M677.0,279 h2 v1 h1 v1 h1 v2 h-1 v1 h-1 v1 h-2 v-1 h-1 v-1 h-1 v-2 h1 v-1 h1z" fill="#00ff00"/>
<rect x="679.0" y="282" width="1" height="1" fill="#fff"/><rect x="678.0" y="283" width="1" height="1" fill="#fff"/>
<path d="M684.0,285 h2 v1 h1 v1 h1 v2 h-1 v1 h-1 v1 h-2 v-1 h-1 v-1 h-1 v-2 h1 v-1 h1z" fill="#00ff00"/>
<rect x="686.0" y="288" width="1" height="1" fill="#fff"/><rect x="685.0" y="289" width="1" height="1" fill="#fff"/>
<path d="M690.0,290 h2 v1 h1 v1 h1 v2 h-1 v1 h-1 v1 h-2 v-1 h-1 v-1 h-1 v-2 h1 v-1 h1z" fill="#00ff00"/>
<rect x="692.0" y="293" width="1" height="1" fill="#fff"/><rect x="691.0" y="294" width="1" height="1" fill="#fff"/>
<path d="M697.0,296 h2 v1 h1 v1 h1 v2 h-1 v1 h-1 v1 h-2 v-1 h-1 v-1 h-1 v-2 h1 v-1 h1z" fill="#00ff00"/>
<rect x="699.0" y="299" width="1" height="1" fill="#fff"/><rect x="698.0" y="300" width="1" height="1" fill="#fff"/>
<path d="M703.0,300 h2 v1 h1 v1 h1 v2 h-1 v1 h-1 v1 h-2 v-1 h-1 v-1 h-1 v-2 h1 v-1 h1z" fill="#00ff00"/>
<rect x="705.0" y="303" width="1" height="1" fill="#fff"/><rect x="704.0" y="304" width="1" height="1" fill="#fff"/>
<path d="M710.0,305 h2 v1 h1 v1 h1 v2 h-1 v1 h-1 v1 h-2 v-1 h-1 v-1 h-1 v-2 h1 v-1 h1z" fill="#00ff00"/>
<rect x="712.0" y="308" width="1" height="1" fill="#fff"/><rect x="711.0" y="309" width="1" height="1" fill="#fff"/>
<path d="M716.0,309 h2 v1 h1 v1 h1 v2 h-1 v1 h-1 v1 h-2 v-1 h-1 v-1 h-1 v-2 h1 v-1 h1z" fill="#00ff00"/>
<rect x="718.0" y="312" width="1" height="1" fill="#fff"/><rect x="717.0" y="313" width="1" height="1" fill="#fff"/>
<path d="M820.0,163 h2 v1 h1 v1 h1 v2 h-1 v1 h-1 v1 h-2 v-1 h-1 v-1 h-1 v-2 h1 v-1 h1z" fill="#00ff00"/>
<rect x="822.0" y="166" width="1" height="1" fill="#fff"/><rect x="821.0" y="167" width="1" height="1" fill="#fff"/>
<path d="M827.0,167 h2 v1 h1 v1 h1 v2 h-1 v1 h-1 v1 h-2 v-1 h-1 v-1 h-1 v-2 h1 v-1 h1z" fill="#00ff00"/>
<rect x="829.0" y="170" width="1" height="1" fill="#fff"/><rect x="828.0" y="171" width="1" height="1" fill="#fff"/>
<path d="M833.0,173 h2 v1 h1 v1 h1 v2 h-1 v1 h-1 v1 h-2 v-1 h-1 v-1 h-1 v-2 h1 v-1 h1z" fill="#00ff00"/>
<rect x="835.0" y="176" width="1" height="1" fill="#fff"/><rect x="834.0" y="177" width="1" height="1" fill="#fff"/>
<path d="M840.0,179 h2 v1 h1 v1 h1 v2 h-1 v1 h-1 v1 h-2 v-1 h-1 v-1 h-1 v-2 h1 v-1 h1z" fill="#00ff00"/>
<rect x="842.0" y="182" width="1" height="1" fill="#fff"/><rect x="841.0" y="183" width="1" height="1" fill="#fff"/>
<path d="M846.0,187 h2 v1 h1 v1 h1 v2 h-1 v1 h-1 v1 h-2 v-1 h-1 v-1 h-1 v-2 h1 v-1 h1z" fill="#00ff00"/>
<rect x="848.0" y="190" width="1" height="1" fill="#fff"/><rect x="847.0" y="191" width="1" height="1" fill="#fff"/>
<path d="M853.0,195 h2 v1 h1 v1 h1 v2 h-1 v1 h-1 v1 h-2 v-1 h-1 v-1 h-1 v-2 h1 v-1 h1z" fill="#00ff00"/>
<rect x="855.0" y="198" width="1" height="1" fill="#fff"/><rect x="854.0" y="199" width="1" height="1" fill="#fff"/>
<path d="M859.0,202 h2 v1 h1 v1 h1 v2 h-1 v1 h-1 v1 h-2 v-1 h-1 v-1 h-1 v-2 h1 v-1 h1z" fill="#00ff00"/>
<rect x="861.0" y="205" width="1" height="1" fill="#fff"/><rect x="860.0" y="206" width="1" height="1" fill="#fff"/>
<path d="M866.0,208 h2 v1 h1 v1 h1 v2 h-1 v1 h-1 v1 h-2 v-1 h-1 v-1 h-1 v-2 h1 v-1 h1z" fill="#00ff00"/>
<rect x="868.0" y="211" width="1" height="1" fill="#fff"/><rect x="867.0" y="212" width="1" height="1" fill="#fff"/>
<path d="M872.0,214 h2 v1 h1 v1 h1 v2 h-1 v1 h-1 v1 h-2 v-1 h-1 v-1 h-1 v-2 h1 v-1 h1z" fill="#00ff00"/>
<rect x="874.0" y="217" width="1" height="1" fill="#fff"/><rect x="873.0" y="218" width="1" height="1" fill="#fff"/>
<path d="M879.0,219 h2 v1 h1 v1 h1 v2 h-1 v1 h-1 v1 h-2 v-1 h-1 v-1 h-1 v-2 h1 v-1 h1z" fill="#00ff00"/>
<rect x="881.0" y="222" width="1" height="1" fill="#fff"/><rect x="880.0" y="223" width="1" height="1" fill="#fff"/>
<path d="M911.0,201 h2 v1 h1 v1 h1 v2 h-1 v1 h-1 v1 h-2 v-1 h-1 v-1 h-1 v-2 h1 v-1 h1z" fill="#00ff00"/>
<rect x="913.0" y="204" width="1" height="1" fill="#fff"/><rect x="912.0" y="205" width="1" height="1" fill="#fff"/>
<path d="M918.0,204 h2 v1 h1 v1 h1 v2 h-1 v1 h-1 v1 h-2 v-1 h-1 v-1 h-1 v-2 h1 v-1 h1z" fill="#00ff00"/>
<rect x="920.0" y="207" width="1" height="1" fill="#fff"/><rect x="919.0" y="208" width="1" height="1" fill="#fff"/>
<path d="M924.0,207 h2 v1 h1 v1 h1 v2 h-1 v1 h-1 v1 h-2 v-1 h-1 v-1 h-1 v-2 h1 v-1 h1z" fill="#00ff00"/>
<rect x="926.0" y="210" width="1" height="1" fill="#fff"/><rect x="925.0" y="211" width="1" height="1" fill="#fff"/>
<path d="M931.0,212 h2 v1 h1 v1 h1 v2 h-1 v1 h-1 v1 h-2 v-1 h-1 v-1 h-1 v-2 h1 v-1 h1z" fill="#00ff00"/>
<rect x="933.0" y="215" width="1" height="1" fill="#fff"/><rect x="932.0" y="216" width="1" height="1" fill="#fff"/>
<path d="M937.0,216 h2 v1 h1 v1 h1 v2 h-1 v1 h-1 v1 h-2 v-1 h-1 v-1 h-1 v-2 h1 v-1 h1z" fill="#00ff00"/>
<rect x="939.0" y="219" width="1" height="1" fill="#fff"/><rect x="938.0" y="220" width="1" height="1" fill="#fff"/>
<path d="M944.0,220 h2 v1 h1 v1 h1 v2 h-1 v1 h-1 v1 h-2 v-1 h-1 v-1 h-1 v-2 h1 v-1 h1z" fill="#00ff00"/>
<rect x="946.0" y="223" width="1" height="1" fill="#fff"/><rect x="945.0" y="224" width="1" height="1" fill="#fff"/>
<path d="M950.0,224 h2 v1 h1 v1 h1 v2 h-1 v1 h-1 v1 h-2 v-1 h-1 v-1 h-1 v-2 h1 v-1 h1z" fill="#00ff00"/>
<rect x="952.0" y="227" width="1" height="1" fill="#fff"/><rect x="951.0" y="228" width="1" height="1" fill="#fff"/>
<path d="M957.0,228 h2 v1 h1 v1 h1 v2 h-1 v1 h-1 v1 h-2 v-1 h-1 v-1 h-1 v-2 h1 v-1 h1z" fill="#00ff00"/>
<rect x="959.0" y="231" width="1" height="1" fill="#fff"/><rect x="958.0" y="232" width="1" height="1" fill="#fff"/>
<path d="M963.0,231 h2 v1 h1 v1 h1 v2 h-1 v1 h-1 v1 h-2 v-1 h-1 v-1 h-1 v-2 h1 v-1 h1z" fill="#00ff00"/>
<rect x="965.0" y="234" width="1" height="1" fill="#fff"/><rect x="964.0" y="235" width="1" height="1" fill="#fff"/>
<path d="M970.0,235 h2 v1 h1 v1 h1 v2 h-1 v1 h-1 v1 h-2 v-1 h-1 v-1 h-1 v-2 h1 v-1 h1z" fill="#00ff00"/>
<rect x="972.0" y="238" width="1" height="1" fill="#fff"/><rect x="971.0" y="239" width="1" height="1" fill="#fff"/>
<path d="M976.0,238 h2 v1 h1 v1 h1 v2 h-1 v1 h-1 v1 h-2 v-1 h-1 v-1 h-1 v-2 h1 v-1 h1z" fill="#00ff00"/>
<rect x="978.0" y="241" width="1" height="1" fill="#fff"/><rect x="977.0" y="242" width="1" height="1" fill="#fff"/>
<path d="M983.0,242 h2 v1 h1 v1 h1 v2 h-1 v1 h-1 v1 h-2 v-1 h-1 v-1 h-1 v-2 h1 v-1 h1z" fill="#00ff00"/>
<rect x="985.0" y="245" width="1" height="1" fill="#fff"/><rect x="984.0" y="246" width="1" height="1" fill="#fff"/>
<path d="M989.0,245 h2 v1 h1 v1 h1 v2 h-1 v1 h-1 v1 h-2 v-1 h-1 v-1 h-1 v-2 h1 v-1 h1z" fill="#00ff00"/>
<rect x="991.0" y="248" width="1" height="1" fill="#fff"/><rect x="990.0" y="249" width="1" height="1" fill="#fff"/>
<path d="M996.0,249 h2 v1 h1 v1 h1 v2 h-1 v1 h-1 v1 h-2 v-1 h-1 v-1 h-1 v-2 h1 v-1 h1z" fill="#00ff00"/>
<rect x="998.0" y="252" width="1" height="1" fill="#fff"/><rect x="997.0" y="253" width="1" height="1" fill="#fff"/>
<path d="M1002.0,253 h2 v1 h1 v1 h1 v2 h-1 v1 h-1 v1 h-2 v-1 h-1 v-1 h-1 v-2 h1 v-1 h1z" fill="#00ff00"/>
<rect x="1004.0" y="256" width="1" height="1" fill="#fff"/><rect x="1003.0" y="257" width="1" height="1" fill="#fff"/>
<path d="M1009.0,261 h2 v1 h1 v1 h1 v2 h-1 v1 h-1 v1 h-2 v-1 h-1 v-1 h-1 v-2 h1 v-1 h1z" fill="#00ff00"/>
<rect x="1011.0" y="264" width="1" height="1" fill="#fff"/><rect x="1010.0" y="265" width="1" height="1" fill="#fff"/>
<path d="M1015.0,271 h2 v1 h1 v1 h1 v2 h-1 v1 h-1 v1 h-2 v-1 h-1 v-1 h-1 v-2 h1 v-1 h1z" fill="#00ff00"/>
<rect x="1017.0" y="274" width="1" height="1" fill="#fff"/><rect x="1016.0" y="275" width="1" height="1" fill="#fff"/>
<path d="M1022.0,279 h2 v1 h1 v1 h1 v2 h-1 v1 h-1 v1 h-2 v-1 h-1 v-1 h-1 v-2 h1 v-1 h1z" fill="#00ff00"/>
<rect x="1024.0" y="282" width="1" height="1" fill="#fff"/><rect x="1023.0" y="283" width="1" height="1" fill="#fff"/>
<path d="M1028.0,286 h2 v1 h1 v1 h1 v2 h-1 v1 h-1 v1 h-2 v-1 h-1 v-1 h-1 v-2 h1 v-1 h1z" fill="#00ff00"/>
<rect x="1030.0" y="289" width="1" height="1" fill="#fff"/><rect x="1029.0" y="290" width="1" height="1" fill="#fff"/>
<path d="M1119.0,251 h2 v1 h1 v1 h1 v2 h-1 v1 h-1 v1 h-2 v-1 h-1 v-1 h-1 v-2 h1 v-1 h1z" fill="#00ff00"/>
<rect x="1121.0" y="254" width="1" height="1" fill="#fff"/><rect x="1120.0" y="255" width="1" height="1" fill="#fff"/>
<path d="M1126.0,251 h2 v1 h1 v1 h1 v2 h-1 v1 h-1 v1 h-2 v-1 h-1 v-1 h-1 v-2 h1 v-1 h1z" fill="#00ff00"/>
<rect x="1128.0" y="254" width="1" height="1" fill="#fff"/><rect x="1127.0" y="255" width="1" height="1" fill="#fff"/>
<path d="M1132.0,252 h2 v1 h1 v1 h1 v2 h-1 v1 h-1 v1 h-2 v-1 h-1 v-1 h-1 v-2 h1 v-1 h1z" fill="#00ff00"/>
<rect x="1134.0" y="255" width="1" height="1" fill="#fff"/><rect x="1133.0" y="256" width="1" height="1" fill="#fff"/>
<path d="M1139.0,254 h2 v1 h1 v1 h1 v2 h-1 v1 h-1 v1 h-2 v-1 h-1 v-1 h-1 v-2 h1 v-1 h1z" fill="#00ff00"/>
<rect x="1141.0" y="257" width="1" height="1" fill="#fff"/><rect x="1140.0" y="258" width="1" height="1" fill="#fff"/>
<path d="M1145.0,254 h2 v1 h1 v1 h1 v2 h-1 v1 h-1 v1 h-2 v-1 h-1 v-1 h-1 v-2 h1 v-1 h1z" fill="#00ff00"/>
<rect x="1147.0" y="257" width="1" height="1" fill="#fff"/><rect x="1146.0" y="258" width="1" height="1" fill="#fff"/>
<path d="M1295.0,83 h2 v1 h1 v1 h1 v2 h-1 v1 h-1 v1 h-2 v-1 h-1 v-1 h-1 v-2 h1 v-1 h1z" fill="#00ff00"/>
<rect x="1297.0" y="86" width="1" height="1" fill="#fff"/><rect x="1296.0" y="87" width="1" height="1" fill="#fff"/>
<path d="M1301.0,86 h2 v1 h1 v1 h1 v2 h-1 v1 h-1 v1 h-2 v-1 h-1 v-1 h-1 v-2 h1 v-1 h1z" fill="#00ff00"/>
<rect x="1303.0" y="89" width="1" height="1" fill="#fff"/><rect x="1302.0" y="90" width="1" height="1" fill="#fff"/>
<path d="M1321.0,81 h2 v1 h1 v1 h1 v2 h-1 v1 h-1 v1 h-2 v-1 h-1 v-1 h-1 v-2 h1 v-1 h1z" fill="#00ff00"/>
<rect x="1323.0" y="84" width="1" height="1" fill="#fff"/><rect x="1322.0" y="85" width="1" height="1" fill="#fff"/>
<path d="M1327.0,86 h2 v1 h1 v1 h1 v2 h-1 v1 h-1 v1 h-2 v-1 h-1 v-1 h-1 v-2 h1 v-1 h1z" fill="#00ff00"/>
<rect x="1329.0" y="89" width="1" height="1" fill="#fff"/><rect x="1328.0" y="90" width="1" height="1" fill="#fff"/>
<path d="M1334.0,90 h2 v1 h1 v1 h1 v2 h-1 v1 h-1 v1 h-2 v-1 h-1 v-1 h-1 v-2 h1 v-1 h1z" fill="#00ff00"/>
<rect x="1336.0" y="93" width="1" height="1" fill="#fff"/><rect x="1335.0" y="94" width="1" height="1" fill="#fff"/>
<path d="M1340.0,97 h2 v1 h1 v1 h1 v2 h-1 v1 h-1 v1 h-2 v-1 h-1 v-1 h-1 v-2 h1 v-1 h1z" fill="#00ff00"/>
<rect x="1342.0" y="100" width="1" height="1" fill="#fff"/><rect x="1341.0" y="101" width="1" height="1" fill="#fff"/>
<path d="M1347.0,107 h2 v1 h1 v1 h1 v2 h-1 v1 h-1 v1 h-2 v-1 h-1 v-1 h-1 v-2 h1 v-1 h1z" fill="#00ff00"/>
<rect x="1349.0" y="110" width="1" height="1" fill="#fff"/><rect x="1348.0" y="111" width="1" height="1" fill="#fff"/>
<path d="M1353.0,118 h2 v1 h1 v1 h1 v2 h-1 v1 h-1 v1 h-2 v-1 h-1 v-1 h-1 v-2 h1 v-1 h1z" fill="#00ff00"/>
<rect x="1355.0" y="121" width="1" height="1" fill="#fff"/><rect x="1354.0" y="122" width="1" height="1" fill="#fff"/>
<path d="M1360.0,127 h2 v1 h1 v1 h1 v2 h-1 v1 h-1 v1 h-2 v-1 h-1 v-1 h-1 v-2 h1 v-1 h1z" fill="#00ff00"/>
<rect x="1362.0" y="130" width="1" height="1" fill="#fff"/><rect x="1361.0" y="131" width="1" height="1" fill="#fff"/>
<path d="M1366.0,135 h2 v1 h1 v1 h1 v2 h-1 v1 h-1 v1 h-2 v-1 h-1 v-1 h-1 v-2 h1 v-1 h1z" fill="#00ff00"/>
<rect x="1368.0" y="138" width="1" height="1" fill="#fff"/><rect x="1367.0" y="139" width="1" height="1" fill="#fff"/>
<path d="M1373.0,143 h2 v1 h1 v1 h1 v2 h-1 v1 h-1 v1 h-2 v-1 h-1 v-1 h-1 v-2 h1 v-1 h1z" fill="#00ff00"/>
<rect x="1375.0" y="146" width="1" height="1" fill="#fff"/><rect x="1374.0" y="147" width="1" height="1" fill="#fff"/>
<path d="M1379.0,149 h2 v1 h1 v1 h1 v2 h-1 v1 h-1 v1 h-2 v-1 h-1 v-1 h-1 v-2 h1 v-1 h1z" fill="#00ff00"/>
<rect x="1381.0" y="152" width="1" height="1" fill="#fff"/><rect x="1380.0" y="153" width="1" height="1" fill="#fff"/>
<path d="M1425.0,123 h2 v1 h1 v1 h1 v2 h-1 v1 h-1 v1 h-2 v-1 h-1 v-1 h-1 v-2 h1 v-1 h1z" fill="#00ff00"/>
<rect x="1427.0" y="126" width="1" height="1" fill="#fff"/><rect x="1426.0" y="127" width="1" height="1" fill="#fff"/>
<path d="M1431.0,126 h2 v1 h1 v1 h1 v2 h-1 v1 h-1 v1 h-2 v-1 h-1 v-1 h-1 v-2 h1 v-1 h1z" fill="#00ff00"/>
<rect x="1433.0" y="129" width="1" height="1" fill="#fff"/><rect x="1432.0" y="130" width="1" height="1" fill="#fff"/>
<path d="M1438.0,129 h2 v1 h1 v1 h1 v2 h-1 v1 h-1 v1 h-2 v-1 h-1 v-1 h-1 v-2 h1 v-1 h1z" fill="#00ff00"/>
<rect x="1440.0" y="132" width="1" height="1" fill="#fff"/><rect x="1439.0" y="133" width="1" height="1" fill="#fff"/>
<path d="M1444.0,133 h2 v1 h1 v1 h1 v2 h-1 v1 h-1 v1 h-2 v-1 h-1 v-1 h-1 v-2 h1 v-1 h1z" fill="#00ff00"/>
<rect x="1446.0" y="136" width="1" height="1" fill="#fff"/><rect x="1445.0" y="137" width="1" height="1" fill="#fff"/>
<path d="M1451.0,137 h2 v1 h1 v1 h1 v2 h-1 v1 h-1 v1 h-2 v-1 h-1 v-1 h-1 v-2 h1 v-1 h1z" fill="#00ff00"/>
<rect x="1453.0" y="140" width="1" height="1" fill="#fff"/><rect x="1452.0" y="141" width="1" height="1" fill="#fff"/>
<path d="M1457.0,142 h2 v1 h1 v1 h1 v2 h-1 v1 h-1 v1 h-2 v-1 h-1 v-1 h-1 v-2 h1 v-1 h1z" fill="#00ff00"/>
<rect x="1459.0" y="145" width="1" height="1" fill="#fff"/><rect x="1458.0" y="146" width="1" height="1" fill="#fff"/>
<path d="M1464.0,147 h2 v1 h1 v1 h1 v2 h-1 v1 h-1 v1 h-2 v-1 h-1 v-1 h-1 v-2 h1 v-1 h1z" fill="#00ff00"/>
<rect x="1466.0" y="150" width="1" height="1" fill="#fff"/><rect x="1465.0" y="151" width="1" height="1" fill="#fff"/>
<path d="M1470.0,152 h2 v1 h1 v1 h1 v2 h-1 v1 h-1 v1 h-2 v-1 h-1 v-1 h-1 v-2 h1 v-1 h1z" fill="#00ff00"/>
<rect x="1472.0" y="155" width="1" height="1" fill="#fff"/><rect x="1471.0" y="156" width="1" height="1" fill="#fff"/>
<path d="M1477.0,156 h2 v1 h1 v1 h1 v2 h-1 v1 h-1 v1 h-2 v-1 h-1 v-1 h-1 v-2 h1 v-1 h1z" fill="#00ff00"/>
<rect x="1479.0" y="159" width="1" height="1" fill="#fff"/><rect x="1478.0" y="160" width="1" height="1" fill="#fff"/>
<path d="M1483.0,160 h2 v1 h1 v1 h1 v2 h-1 v1 h-1 v1 h-2 v-1 h-1 v-1 h-1 v-2 h1 v-1 h1z" fill="#00ff00"/>
<rect x="1485.0" y="163" width="1" height="1" fill="#fff"/><rect x="1484.0" y="164" width="1" height="1" fill="#fff"/>
<path d="M1490.0,163 h2 v1 h1 v1 h1 v2 h-1 v1 h-1 v1 h-2 v-1 h-1 v-1 h-1 v-2 h1 v-1 h1z" fill="#00ff00"/>
<rect x="1492.0" y="166" width="1" height="1" fill="#fff"/><rect x="1491.0" y="167" width="1" height="1" fill="#fff"/>
<path d="M1496.0,167 h2 v1 h1 v1 h1 v2 h-1 v1 h-1 v1 h-2 v-1 h-1 v-1 h-1 v-2 h1 v-1 h1z" fill="#00ff00"/>
<rect x="1498.0" y="170" width="1" height="1" fill="#fff"/><rect x="1497.0" y="171" width="1" height="1" fill="#fff"/>
<path d="M1503.0,170 h2 v1 h1 v1 h1 v2 h-1 v1 h-1 v1 h-2 v-1 h-1 v-1 h-1 v-2 h1 v-1 h1z" fill="#00ff00"/>
<rect x="1505.0" y="173" width="1" height="1" fill="#fff"/><rect x="1504.0" y="174" width="1" height="1" fill="#fff"/>
<path d="M1509.0,173 h2 v1 h1 v1 h1 v2 h-1 v1 h-1 v1 h-2 v-1 h-1 v-1 h-1 v-2 h1 v-1 h1z" fill="#00ff00"/>
<rect x="1511.0" y="176" width="1" height="1" fill="#fff"/><rect x="1510.0" y="177" width="1" height="1" fill="#fff"/>
<path d="M1516.0,181 h2 v1 h1 v1 h1 v2 h-1 v1 h-1 v1 h-2 v-1 h-1 v-1 h-1 v-2 h1 v-1 h1z" fill="#00ff00"/>
<rect x="1518.0" y="184" width="1" height="1" fill="#fff"/><rect x="1517.0" y="185" width="1" height="1" fill="#fff"/>
<path d="M34.0,500 h2 v1 h1 v1 h1 v2 h-1 v1 h-1 v1 h-2 v-1 h-1 v-1 h-1 v-2 h1 v-1 h1z" fill="#ff00ff"/>
<rect x="36.0" y="503" width="1" height="1" fill="#fff"/><rect x="35.0" y="504" width="1" height="1" fill="#fff"/>
<path d="M41.0,500 h2 v1 h1 v1 h1 v2 h-1 v1 h-1 v1 h-2 v-1 h-1 v-1 h-1 v-2 h1 v-1 h1z" fill="#ff00ff"/>
<rect x="43.0" y="503" width="1" height="1" fill="#fff"/><rect x="42.0" y="504" width="1" height="1" fill="#fff"/>
<path d="M47.0,499 h2 v1 h1 v1 h1 v2 h-1 v1 h-1 v1 h-2 v-1 h-1 v-1 h-1 v-2 h1 v-1 h1z" fill="#ff00ff"/>
<rect x="49.0" y="502" width="1" height="1" fill="#fff"/><rect x="48.0" y="503" width="1" height="1" fill="#fff"/>
<path d="M54.0,498 h2 v1 h1 v1 h1 v2 h-1 v1 h-1 v1 h-2 v-1 h-1 v-1 h-1 v-2 h1 v-1 h1z" fill="#ff00ff"/>
<rect x="56.0" y="501" width="1" height="1" fill="#fff"/><rect x="55.0" y="502" width="1" height="1" fill="#fff"/>
<path d="M60.0,498 h2 v1 h1 v1 h1 v2 h-1 v1 h-1 v1 h-2 v-1 h-1 v-1 h-1 v-2 h1 v-1 h1z" fill="#ff00ff"/>
<rect x="62.0" y="501" width="1" height="1" fill="#fff"/><rect x="61.0" y="502" width="1" height="1" fill="#fff"/>
<path d="M67.0,497 h2 v1 h1 v1 h1 v2 h-1 v1 h-1 v1 h-2 v-1 h-1 v-1 h-1 v-2 h1 v-1 h1z" fill="#ff00ff"/>
<rect x="69.0" y="500" width="1" height="1" fill="#fff"/><rect x="68.0" y="501" width="1" height="1" fill="#fff"/>
<path d="M73.0,496 h2 v1 h1 v1 h1 v2 h-1 v1 h-1 v1 h-2 v-1 h-1 v-1 h-1 v-2 h1 v-1 h1z" fill="#ff00ff"/>
<rect x="75.0" y="499" width="1" height="1" fill="#fff"/><rect x="74.0" y="500" width="1" height="1" fill="#fff"/>
<path d="M80.0,495 h2 v1 h1 v1 h1 v2 h-1 v1 h-1 v1 h-2 v-1 h-1 v-1 h-1 v-2 h1 v-1 h1z" fill="#ff00ff"/>
<rect x="82.0" y="498" width="1" height="1" fill="#fff"/><rect x="81.0" y="499" width="1" height="1" fill="#fff"/>
<path d="M86.0,495 h2 v1 h1 v1 h1 v2 h-1 v1 h-1 v1 h-2 v-1 h-1 v-1 h-1 v-2 h1 v-1 h1z" fill="#ff00ff"/>
<rect x="88.0" y="498" width="1" height="1" fill="#fff"/><rect x="87.0" y="499" width="1" height="1" fill="#fff"/>
<path d="M93.0,494 h2 v1 h1 v1 h1 v2 h-1 v1 h-1 v1 h-2 v-1 h-1 v-1 h-1 v-2 h1 v-1 h1z" fill="#ff00ff"/>
<rect x="95.0" y="497" width="1" height="1" fill="#fff"/><rect x="94.0" y="498" width="1" height="1" fill="#fff"/>
<path d="M99.0,494 h2 v1 h1 v1 h1 v2 h-1 v1 h-1 v1 h-2 v-1 h-1 v-1 h-1 v-2 h1 v-1 h1z" fill="#ff00ff"/>
<rect x="101.0" y="497" width="1" height="1" fill="#fff"/><rect x="100.0" y="498" width="1" height="1" fill="#fff"/>
<path d="M106.0,493 h2 v1 h1 v1 h1 v2 h-1 v1 h-1 v1 h-2 v-1 h-1 v-1 h-1 v-2 h1 v-1 h1z" fill="#ff00ff"/>
<rect x="108.0" y="496" width="1" height="1" fill="#fff"/><rect x="107.0" y="497" width="1" height="1" fill="#fff"/>
<path d="M112.0,493 h2 v1 h1 v1 h1 v2 h-1 v1 h-1 v1 h-2 v-1 h-1 v-1 h-1 v-2 h1 v-1 h1z" fill="#ff00ff"/>
<rect x="114.0" y="496" width="1" height="1" fill="#fff"/><rect x="113.0" y="497" width="1" height="1" fill="#fff"/>
<path d="M119.0,492 h2 v1 h1 v1 h1 v2 h-1 v1 h-1 v1 h-2 v-1 h-1 v-1 h-1 v-2 h1 v-1 h1z" fill="#ff00ff"/>
<rect x="121.0" y="495" width="1" height="1" fill="#fff"/><rect x="120.0" y="496" width="1" height="1" fill="#fff"/>
<path d="M125.0,491 h2 v1 h1 v1 h1 v2 h-1 v1 h-1 v1 h-2 v-1 h-1 v-1 h-1 v-2 h1 v-1 h1z" fill="#ff00ff"/>
<rect x="127.0" y="494" width="1" height="1" fill="#fff"/><rect x="126.0" y="495" width="1" height="1" fill="#fff"/>
<path d="M132.0,488 h2 v1 h1 v1 h1 v2 h-1 v1 h-1 v1 h-2 v-1 h-1 v-1 h-1 v-2 h1 v-1 h1z" fill="#ff00ff"/>
<rect x="134.0" y="491" width="1" height="1" fill="#fff"/><rect x="133.0" y="492" width="1" height="1" fill="#fff"/>
<path d="M138.0,486 h2 v1 h1 v1 h1 v2 h-1 v1 h-1 v1 h-2 v-1 h-1 v-1 h-1 v-2 h1 v-1 h1z" fill="#ff00ff"/>
<rect x="140.0" y="489" width="1" height="1" fill="#fff"/><rect x="139.0" y="490" width="1" height="1" fill="#fff"/>
<path d="M145.0,484 h2 v1 h1 v1 h1 v2 h-1 v1 h-1 v1 h-2 v-1 h-1 v-1 h-1 v-2 h1 v-1 h1z" fill="#ff00ff"/>
<rect x="147.0" y="487" width="1" height="1" fill="#fff"/><rect x="146.0" y="488" width="1" height="1" fill="#fff"/>
<path d="M151.0,482 h2 v1 h1 v1 h1 v2 h-1 v1 h-1 v1 h-2 v-1 h-1 v-1 h-1 v-2 h1 v-1 h1z" fill="#ff00ff"/>
<rect x="153.0" y="485" width="1" height="1" fill="#fff"/><rect x="152.0" y="486" width="1" height="1" fill="#fff"/>
<path d="M158.0,480 h2 v1 h1 v1 h1 v2 h-1 v1 h-1 v1 h-2 v-1 h-1 v-1 h-1 v-2 h1 v-1 h1z" fill="#ff00ff"/>
<rect x="160.0" y="483" width="1" height="1" fill="#fff"/><rect x="159.0" y="484" width="1" height="1" fill="#fff"/>
<path d="M164.0,478 h2 v1 h1 v1 h1 v2 h-1 v1 h-1 v1 h-2 v-1 h-1 v-1 h-1 v-2 h1 v-1 h1z" fill="#ff00ff"/>
<rect x="166.0" y="481" width="1" height="1" fill="#fff"/><rect x="165.0" y="482" width="1" height="1" fill="#fff"/>
<path d="M262.0,496 h2 v1 h1 v1 h1 v2 h-1 v1 h-1 v1 h-2 v-1 h-1 v-1 h-1 v-2 h1 v-1 h1z" fill="#ff00ff"/>
<rect x="264.0" y="499" width="1" height="1" fill="#fff"/><rect x="263.0" y="500" width="1" height="1" fill="#fff"/>
<path d="M268.0,495 h2 v1 h1 v1 h1 v2 h-1 v1 h-1 v1 h-2 v-1 h-1 v-1 h-1 v-2 h1 v-1 h1z" fill="#ff00ff"/>
<rect x="270.0" y="498" width="1" height="1" fill="#fff"/><rect x="269.0" y="499" width="1" height="1" fill="#fff"/>
<path d="M275.0,495 h2 v1 h1 v1 h1 v2 h-1 v1 h-1 v1 h-2 v-1 h-1 v-1 h-1 v-2 h1 v-1 h1z" fill="#ff00ff"/>
<rect x="277.0" y="498" width="1" height="1" fill="#fff"/><rect x="276.0" y="499" width="1" height="1" fill="#fff"/>
<path d="M346.0,504 h2 v1 h1 v1 h1 v2 h-1 v1 h-1 v1 h-2 v-1 h-1 v-1 h-1 v-2 h1 v-1 h1z" fill="#ff00ff"/>
<rect x="348.0" y="507" width="1" height="1" fill="#fff"/><rect x="347.0" y="508" width="1" height="1" fill="#fff"/>
<path d="M353.0,503 h2 v1 h1 v1 h1 v2 h-1 v1 h-1 v1 h-2 v-1 h-1 v-1 h-1 v-2 h1 v-1 h1z" fill="#ff00ff"/>
<rect x="355.0" y="506" width="1" height="1" fill="#fff"/><rect x="354.0" y="507" width="1" height="1" fill="#fff"/>
<path d="M359.0,501 h2 v1 h1 v1 h1 v2 h-1 v1 h-1 v1 h-2 v-1 h-1 v-1 h-1 v-2 h1 v-1 h1z" fill="#ff00ff"/>
<rect x="361.0" y="504" width="1" height="1" fill="#fff"/><rect x="360.0" y="505" width="1" height="1" fill="#fff"/>
<path d="M366.0,499 h2 v1 h1 v1 h1 v2 h-1 v1 h-1 v1 h-2 v-1 h-1 v-1 h-1 v-2 h1 v-1 h1z" fill="#ff00ff"/>
<rect x="368.0" y="502" width="1" height="1" fill="#fff"/><rect x="367.0" y="503" width="1" height="1" fill="#fff"/>
<path d="M372.0,497 h2 v1 h1 v1 h1 v2 h-1 v1 h-1 v1 h-2 v-1 h-1 v-1 h-1 v-2 h1 v-1 h1z" fill="#ff00ff"/>
<rect x="374.0" y="500" width="1" height="1" fill="#fff"/><rect x="373.0" y="501" width="1" height="1" fill="#fff"/>
<path d="M379.0,493 h2 v1 h1 v1 h1 v2 h-1 v1 h-1 v1 h-2 v-1 h-1 v-1 h-1 v-2 h1 v-1 h1z" fill="#ff00ff"/>
<rect x="381.0" y="496" width="1" height="1" fill="#fff"/><rect x="380.0" y="497" width="1" height="1" fill="#fff"/>
<path d="M385.0,491 h2 v1 h1 v1 h1 v2 h-1 v1 h-1 v1 h-2 v-1 h-1 v-1 h-1 v-2 h1 v-1 h1z" fill="#ff00ff"/>
<rect x="387.0" y="494" width="1" height="1" fill="#fff"/><rect x="386.0" y="495" width="1" height="1" fill="#fff"/>
<path d="M392.0,489 h2 v1 h1 v1 h1 v2 h-1 v1 h-1 v1 h-2 v-1 h-1 v-1 h-1 v-2 h1 v-1 h1z" fill="#ff00ff"/>
<rect x="394.0" y="492" width="1" height="1" fill="#fff"/><rect x="393.0" y="493" width="1" height="1" fill="#fff"/>
<path d="M463.0,485 h2 v1 h1 v1 h1 v2 h-1 v1 h-1 v1 h-2 v-1 h-1 v-1 h-1 v-2 h1 v-1 h1z" fill="#ff00ff"/>
<rect x="465.0" y="488" width="1" height="1" fill="#fff"/><rect x="464.0" y="489" width="1" height="1" fill="#fff"/>
<path d="M470.0,485 h2 v1 h1 v1 h1 v2 h-1 v1 h-1 v1 h-2 v-1 h-1 v-1 h-1 v-2 h1 v-1 h1z" fill="#ff00ff"/>
<rect x="472.0" y="488" width="1" height="1" fill="#fff"/><rect x="471.0" y="489" width="1" height="1" fill="#fff"/>
<path d="M476.0,484 h2 v1 h1 v1 h1 v2 h-1 v1 h-1 v1 h-2 v-1 h-1 v-1 h-1 v-2 h1 v-1 h1z" fill="#ff00ff"/>
<rect x="478.0" y="487" width="1" height="1" fill="#fff"/><rect x="477.0" y="488" width="1" height="1" fill="#fff"/>
<path d="M483.0,483 h2 v1 h1 v1 h1 v2 h-1 v1 h-1 v1 h-2 v-1 h-1 v-1 h-1 v-2 h1 v-1 h1z" fill="#ff00ff"/>
<rect x="485.0" y="486" width="1" height="1" fill="#fff"/><rect x="484.0" y="487" width="1" height="1" fill="#fff"/>
<path d="M489.0,481 h2 v1 h1 v1 h1 v2 h-1 v1 h-1 v1 h-2 v-1 h-1 v-1 h-1 v-2 h1 v-1 h1z" fill="#ff00ff"/>
<rect x="491.0" y="484" width="1" height="1" fill="#fff"/><rect x="490.0" y="485" width="1" height="1" fill="#fff"/>
<path d="M496.0,478 h2 v1 h1 v1 h1 v2 h-1 v1 h-1 v1 h-2 v-1 h-1 v-1 h-1 v-2 h1 v-1 h1z" fill="#ff00ff"/>
<rect x="498.0" y="481" width="1" height="1" fill="#fff"/><rect x="497.0" y="482" width="1" height="1" fill="#fff"/>
<path d="M502.0,475 h2 v1 h1 v1 h1 v2 h-1 v1 h-1 v1 h-2 v-1 h-1 v-1 h-1 v-2 h1 v-1 h1z" fill="#ff00ff"/>
<rect x="504.0" y="478" width="1" height="1" fill="#fff"/><rect x="503.0" y="479" width="1" height="1" fill="#fff"/>
<path d="M509.0,471 h2 v1 h1 v1 h1 v2 h-1 v1 h-1 v1 h-2 v-1 h-1 v-1 h-1 v-2 h1 v-1 h1z" fill="#ff00ff"/>
<rect x="511.0" y="474" width="1" height="1" fill="#fff"/><rect x="510.0" y="475" width="1" height="1" fill="#fff"/>
<path d="M515.0,466 h2 v1 h1 v1 h1 v2 h-1 v1 h-1 v1 h-2 v-1 h-1 v-1 h-1 v-2 h1 v-1 h1z" fill="#ff00ff"/>
<rect x="517.0" y="469" width="1" height="1" fill="#fff"/><rect x="516.0" y="470" width="1" height="1" fill="#fff"/>
<path d="M522.0,462 h2 v1 h1 v1 h1 v2 h-1 v1 h-1 v1 h-2 v-1 h-1 v-1 h-1 v-2 h1 v-1 h1z" fill="#ff00ff"/>
<rect x="524.0" y="465" width="1" height="1" fill="#fff"/><rect x="523.0" y="466" width="1" height="1" fill="#fff"/>
<path d="M528.0,461 h2 v1 h1 v1 h1 v2 h-1 v1 h-1 v1 h-2 v-1 h-1 v-1 h-1 v-2 h1 v-1 h1z" fill="#ff00ff"/>
<rect x="530.0" y="464" width="1" height="1" fill="#fff"/><rect x="529.0" y="465" width="1" height="1" fill="#fff"/>
<path d="M535.0,461 h2 v1 h1 v1 h1 v2 h-1 v1 h-1 v1 h-2 v-1 h-1 v-1 h-1 v-2 h1 v-1 h1z" fill="#ff00ff"/>
<rect x="537.0" y="464" width="1" height="1" fill="#fff"/><rect x="536.0" y="465" width="1" height="1" fill="#fff"/>
<path d="M541.0,460 h2 v1 h1 v1 h1 v2 h-1 v1 h-1 v1 h-2 v-1 h-1 v-1 h-1 v-2 h1 v-1 h1z" fill="#ff00ff"/>
<rect x="543.0" y="463" width="1" height="1" fill="#fff"/><rect x="542.0" y="464" width="1" height="1" fill="#fff"/>
<path d="M548.0,457 h2 v1 h1 v1 h1 v2 h-1 v1 h-1 v1 h-2 v-1 h-1 v-1 h-1 v-2 h1 v-1 h1z" fill="#ff00ff"/>
<rect x="550.0" y="460" width="1" height="1" fill="#fff"/><rect x="549.0" y="461" width="1" height="1" fill="#fff"/>
<path d="M554.0,453 h2 v1 h1 v1 h1 v2 h-1 v1 h-1 v1 h-2 v-1 h-1 v-1 h-1 v-2 h1 v-1 h1z" fill="#ff00ff"/>
<rect x="556.0" y="456" width="1" height="1" fill="#fff"/><rect x="555.0" y="457" width="1" height="1" fill="#fff"/>
<path d="M561.0,451 h2 v1 h1 v1 h1 v2 h-1 v1 h-1 v1 h-2 v-1 h-1 v-1 h-1 v-2 h1 v-1 h1z" fill="#ff00ff"/>
<rect x="563.0" y="454" width="1" height="1" fill="#fff"/><rect x="562.0" y="455" width="1" height="1" fill="#fff"/>
<path d="M567.0,451 h2 v1 h1 v1 h1 v2 h-1 v1 h-1 v1 h-2 v-1 h-1 v-1 h-1 v-2 h1 v-1 h1z" fill="#ff00ff"/>
<rect x="569.0" y="454" width="1" height="1" fill="#fff"/><rect x="568.0" y="455" width="1" height="1" fill="#fff"/>
<path d="M574.0,451 h2 v1 h1 v1 h1 v2 h-1 v1 h-1 v1 h-2 v-1 h-1 v-1 h-1 v-2 h1 v-1 h1z" fill="#ff00ff"/>
<rect x="576.0" y="454" width="1" height="1" fill="#fff"/><rect x="575.0" y="455" width="1" height="1" fill="#fff"/>
<path d="M580.0,449 h2 v1 h1 v1 h1 v2 h-1 v1 h-1 v1 h-2 v-1 h-1 v-1 h-1 v-2 h1 v-1 h1z" fill="#ff00ff"/>
<rect x="582.0" y="452" width="1" height="1" fill="#fff"/><rect x="581.0" y="453" width="1" height="1" fill="#fff"/>
<path d="M587.0,439 h2 v1 h1 v1 h1 v2 h-1 v1 h-1 v1 h-2 v-1 h-1 v-1 h-1 v-2 h1 v-1 h1z" fill="#ff00ff"/>
<rect x="589.0" y="442" width="1" height="1" fill="#fff"/><rect x="588.0" y="443" width="1" height="1" fill="#fff"/>
<path d="M593.0,433 h2 v1 h1 v1 h1 v2 h-1 v1 h-1 v1 h-2 v-1 h-1 v-1 h-1 v-2 h1 v-1 h1z" fill="#ff00ff"/>
<rect x="595.0" y="436" width="1" height="1" fill="#fff"/><rect x="594.0" y="437" width="1" height="1" fill="#fff"/>
<path d="M600.0,424 h2 v1 h1 v1 h1 v2 h-1 v1 h-1 v1 h-2 v-1 h-1 v-1 h-1 v-2 h1 v-1 h1z" fill="#ff00ff"/>
<rect x="602.0" y="427" width="1" height="1" fill="#fff"/><rect x="601.0" y="428" width="1" height="1" fill="#fff"/>
<path d="M606.0,416 h2 v1 h1 v1 h1 v2 h-1 v1 h-1 v1 h-2 v-1 h-1 v-1 h-1 v-2 h1 v-1 h1z" fill="#ff00ff"/>
<rect x="608.0" y="419" width="1" height="1" fill="#fff"/><rect x="607.0" y="420" width="1" height="1" fill="#fff"/>
<path d="M613.0,410 h2 v1 h1 v1 h1 v2 h-1 v1 h-1 v1 h-2 v-1 h-1 v-1 h-1 v-2 h1 v-1 h1z" fill="#ff00ff"/>
<rect x="615.0" y="413" width="1" height="1" fill="#fff"/><rect x="614.0" y="414" width="1" height="1" fill="#fff"/>
<path d="M619.0,408 h2 v1 h1 v1 h1 v2 h-1 v1 h-1 v1 h-2 v-1 h-1 v-1 h-1 v-2 h1 v-1 h1z" fill="#ff00ff"/>
<rect x="621.0" y="411" width="1" height="1" fill="#fff"/><rect x="620.0" y="412" width="1" height="1" fill="#fff"/>
<path d="M626.0,394 h2 v1 h1 v1 h1 v2 h-1 v1 h-1 v1 h-2 v-1 h-1 v-1 h-1 v-2 h1 v-1 h1z" fill="#ff00ff"/>
<rect x="628.0" y="397" width="1" height="1" fill="#fff"/><rect x="627.0" y="398" width="1" height="1" fill="#fff"/>
<path d="M632.0,378 h2 v1 h1 v1 h1 v2 h-1 v1 h-1 v1 h-2 v-1 h-1 v-1 h-1 v-2 h1 v-1 h1z" fill="#ff00ff"/>
<rect x="634.0" y="381" width="1" height="1" fill="#fff"/><rect x="633.0" y="382" width="1" height="1" fill="#fff"/>
<path d="M639.0,361 h2 v1 h1 v1 h1 v2 h-1 v1 h-1 v1 h-2 v-1 h-1 v-1 h-1 v-2 h1 v-1 h1z" fill="#ff00ff"/>
<rect x="641.0" y="364" width="1" height="1" fill="#fff"/><rect x="640.0" y="365" width="1" height="1" fill="#fff"/>
<path d="M645.0,347 h2 v1 h1 v1 h1 v2 h-1 v1 h-1 v1 h-2 v-1 h-1 v-1 h-1 v-2 h1 v-1 h1z" fill="#ff00ff"/>
<rect x="647.0" y="350" width="1" height="1" fill="#fff"/><rect x="646.0" y="351" width="1" height="1" fill="#fff"/>
<path d="M652.0,333 h2 v1 h1 v1 h1 v2 h-1 v1 h-1 v1 h-2 v-1 h-1 v-1 h-1 v-2 h1 v-1 h1z" fill="#ff00ff"/>
<rect x="654.0" y="336" width="1" height="1" fill="#fff"/><rect x="653.0" y="337" width="1" height="1" fill="#fff"/>
<path d="M658.0,321 h2 v1 h1 v1 h1 v2 h-1 v1 h-1 v1 h-2 v-1 h-1 v-1 h-1 v-2 h1 v-1 h1z" fill="#ff00ff"/>
<rect x="660.0" y="324" width="1" height="1" fill="#fff"/><rect x="659.0" y="325" width="1" height="1" fill="#fff"/>
<path d="M664.0,312 h2 v1 h1 v1 h1 v2 h-1 v1 h-1 v1 h-2 v-1 h-1 v-1 h-1 v-2 h1 v-1 h1z" fill="#ff00ff"/>
<rect x="666.0" y="315" width="1" height="1" fill="#fff"/><rect x="665.0" y="316" width="1" height="1" fill="#fff"/>
<path d="M723.0,357 h2 v1 h1 v1 h1 v2 h-1 v1 h-1 v1 h-2 v-1 h-1 v-1 h-1 v-2 h1 v-1 h1z" fill="#ff00ff"/>
<rect x="725.0" y="360" width="1" height="1" fill="#fff"/><rect x="724.0" y="361" width="1" height="1" fill="#fff"/>
<path d="M729.0,354 h2 v1 h1 v1 h1 v2 h-1 v1 h-1 v1 h-2 v-1 h-1 v-1 h-1 v-2 h1 v-1 h1z" fill="#ff00ff"/>
<rect x="731.0" y="357" width="1" height="1" fill="#fff"/><rect x="730.0" y="358" width="1" height="1" fill="#fff"/>
<path d="M736.0,351 h2 v1 h1 v1 h1 v2 h-1 v1 h-1 v1 h-2 v-1 h-1 v-1 h-1 v-2 h1 v-1 h1z" fill="#ff00ff"/>
<rect x="738.0" y="354" width="1" height="1" fill="#fff"/><rect x="737.0" y="355" width="1" height="1" fill="#fff"/>
<path d="M742.0,346 h2 v1 h1 v1 h1 v2 h-1 v1 h-1 v1 h-2 v-1 h-1 v-1 h-1 v-2 h1 v-1 h1z" fill="#ff00ff"/>
<rect x="744.0" y="349" width="1" height="1" fill="#fff"/><rect x="743.0" y="350" width="1" height="1" fill="#fff"/>
<path d="M749.0,337 h2 v1 h1 v1 h1 v2 h-1 v1 h-1 v1 h-2 v-1 h-1 v-1 h-1 v-2 h1 v-1 h1z" fill="#ff00ff"/>
<rect x="751.0" y="340" width="1" height="1" fill="#fff"/><rect x="750.0" y="341" width="1" height="1" fill="#fff"/>
<path d="M755.0,329 h2 v1 h1 v1 h1 v2 h-1 v1 h-1 v1 h-2 v-1 h-1 v-1 h-1 v-2 h1 v-1 h1z" fill="#ff00ff"/>
<rect x="757.0" y="332" width="1" height="1" fill="#fff"/><rect x="756.0" y="333" width="1" height="1" fill="#fff"/>
<path d="M762.0,322 h2 v1 h1 v1 h1 v2 h-1 v1 h-1 v1 h-2 v-1 h-1 v-1 h-1 v-2 h1 v-1 h1z" fill="#ff00ff"/>
<rect x="764.0" y="325" width="1" height="1" fill="#fff"/><rect x="763.0" y="326" width="1" height="1" fill="#fff"/>
<path d="M768.0,315 h2 v1 h1 v1 h1 v2 h-1 v1 h-1 v1 h-2 v-1 h-1 v-1 h-1 v-2 h1 v-1 h1z" fill="#ff00ff"/>
<rect x="770.0" y="318" width="1" height="1" fill="#fff"/><rect x="769.0" y="319" width="1" height="1" fill="#fff"/>
<path d="M775.0,304 h2 v1 h1 v1 h1 v2 h-1 v1 h-1 v1 h-2 v-1 h-1 v-1 h-1 v-2 h1 v-1 h1z" fill="#ff00ff"/>
<rect x="777.0" y="307" width="1" height="1" fill="#fff"/><rect x="776.0" y="308" width="1" height="1" fill="#fff"/>
<path d="M781.0,295 h2 v1 h1 v1 h1 v2 h-1 v1 h-1 v1 h-2 v-1 h-1 v-1 h-1 v-2 h1 v-1 h1z" fill="#ff00ff"/>
<rect x="783.0" y="298" width="1" height="1" fill="#fff"/><rect x="782.0" y="299" width="1" height="1" fill="#fff"/>
<path d="M788.0,286 h2 v1 h1 v1 h1 v2 h-1 v1 h-1 v1 h-2 v-1 h-1 v-1 h-1 v-2 h1 v-1 h1z" fill="#ff00ff"/>
<rect x="790.0" y="289" width="1" height="1" fill="#fff"/><rect x="789.0" y="290" width="1" height="1" fill="#fff"/>
<path d="M794.0,278 h2 v1 h1 v1 h1 v2 h-1 v1 h-1 v1 h-2 v-1 h-1 v-1 h-1 v-2 h1 v-1 h1z" fill="#ff00ff"/>
<rect x="796.0" y="281" width="1" height="1" fill="#fff"/><rect x="795.0" y="282" width="1" height="1" fill="#fff"/>
<path d="M801.0,268 h2 v1 h1 v1 h1 v2 h-1 v1 h-1 v1 h-2 v-1 h-1 v-1 h-1 v-2 h1 v-1 h1z" fill="#ff00ff"/>
<rect x="803.0" y="271" width="1" height="1" fill="#fff"/><rect x="802.0" y="272" width="1" height="1" fill="#fff"/>
<path d="M807.0,253 h2 v1 h1 v1 h1 v2 h-1 v1 h-1 v1 h-2 v-1 h-1 v-1 h-1 v-2 h1 v-1 h1z" fill="#ff00ff"/>
<rect x="809.0" y="256" width="1" height="1" fill="#fff"/><rect x="808.0" y="257" width="1" height="1" fill="#fff"/>
<path d="M814.0,240 h2 v1 h1 v1 h1 v2 h-1 v1 h-1 v1 h-2 v-1 h-1 v-1 h-1 v-2 h1 v-1 h1z" fill="#ff00ff"/>
<rect x="816.0" y="243" width="1" height="1" fill="#fff"/><rect x="815.0" y="244" width="1" height="1" fill="#fff"/>
<path d="M885.0,254 h2 v1 h1 v1 h1 v2 h-1 v1 h-1 v1 h-2 v-1 h-1 v-1 h-1 v-2 h1 v-1 h1z" fill="#ff00ff"/>
<rect x="887.0" y="257" width="1" height="1" fill="#fff"/><rect x="886.0" y="258" width="1" height="1" fill="#fff"/>
<path d="M892.0,251 h2 v1 h1 v1 h1 v2 h-1 v1 h-1 v1 h-2 v-1 h-1 v-1 h-1 v-2 h1 v-1 h1z" fill="#ff00ff"/>
<rect x="894.0" y="254" width="1" height="1" fill="#fff"/><rect x="893.0" y="255" width="1" height="1" fill="#fff"/>
<path d="M898.0,249 h2 v1 h1 v1 h1 v2 h-1 v1 h-1 v1 h-2 v-1 h-1 v-1 h-1 v-2 h1 v-1 h1z" fill="#ff00ff"/>
<rect x="900.0" y="252" width="1" height="1" fill="#fff"/><rect x="899.0" y="253" width="1" height="1" fill="#fff"/>
<path d="M905.0,247 h2 v1 h1 v1 h1 v2 h-1 v1 h-1 v1 h-2 v-1 h-1 v-1 h-1 v-2 h1 v-1 h1z" fill="#ff00ff"/>
<rect x="907.0" y="250" width="1" height="1" fill="#fff"/><rect x="906.0" y="251" width="1" height="1" fill="#fff"/>
<path d="M1035.0,315 h2 v1 h1 v1 h1 v2 h-1 v1 h-1 v1 h-2 v-1 h-1 v-1 h-1 v-2 h1 v-1 h1z" fill="#ff00ff"/>
<rect x="1037.0" y="318" width="1" height="1" fill="#fff"/><rect x="1036.0" y="319" width="1" height="1" fill="#fff"/>
<path d="M1041.0,314 h2 v1 h1 v1 h1 v2 h-1 v1 h-1 v1 h-2 v-1 h-1 v-1 h-1 v-2 h1 v-1 h1z" fill="#ff00ff"/>
<rect x="1043.0" y="317" width="1" height="1" fill="#fff"/><rect x="1042.0" y="318" width="1" height="1" fill="#fff"/>
<path d="M1048.0,312 h2 v1 h1 v1 h1 v2 h-1 v1 h-1 v1 h-2 v-1 h-1 v-1 h-1 v-2 h1 v-1 h1z" fill="#ff00ff"/>
<rect x="1050.0" y="315" width="1" height="1" fill="#fff"/><rect x="1049.0" y="316" width="1" height="1" fill="#fff"/>
<path d="M1054.0,311 h2 v1 h1 v1 h1 v2 h-1 v1 h-1 v1 h-2 v-1 h-1 v-1 h-1 v-2 h1 v-1 h1z" fill="#ff00ff"/>
<rect x="1056.0" y="314" width="1" height="1" fill="#fff"/><rect x="1055.0" y="315" width="1" height="1" fill="#fff"/>
<path d="M1061.0,309 h2 v1 h1 v1 h1 v2 h-1 v1 h-1 v1 h-2 v-1 h-1 v-1 h-1 v-2 h1 v-1 h1z" fill="#ff00ff"/>
<rect x="1063.0" y="312" width="1" height="1" fill="#fff"/><rect x="1062.0" y="313" width="1" height="1" fill="#fff"/>
<path d="M1067.0,308 h2 v1 h1 v1 h1 v2 h-1 v1 h-1 v1 h-2 v-1 h-1 v-1 h-1 v-2 h1 v-1 h1z" fill="#ff00ff"/>
<rect x="1069.0" y="311" width="1" height="1" fill="#fff"/><rect x="1068.0" y="312" width="1" height="1" fill="#fff"/>
<path d="M1074.0,306 h2 v1 h1 v1 h1 v2 h-1 v1 h-1 v1 h-2 v-1 h-1 v-1 h-1 v-2 h1 v-1 h1z" fill="#ff00ff"/>
<rect x="1076.0" y="309" width="1" height="1" fill="#fff"/><rect x="1075.0" y="310" width="1" height="1" fill="#fff"/>
<path d="M1080.0,303 h2 v1 h1 v1 h1 v2 h-1 v1 h-1 v1 h-2 v-1 h-1 v-1 h-1 v-2 h1 v-1 h1z" fill="#ff00ff"/>
<rect x="1082.0" y="306" width="1" height="1" fill="#fff"/><rect x="1081.0" y="307" width="1" height="1" fill="#fff"/>
<path d="M1087.0,298 h2 v1 h1 v1 h1 v2 h-1 v1 h-1 v1 h-2 v-1 h-1 v-1 h-1 v-2 h1 v-1 h1z" fill="#ff00ff"/>
<rect x="1089.0" y="301" width="1" height="1" fill="#fff"/><rect x="1088.0" y="302" width="1" height="1" fill="#fff"/>
<path d="M1093.0,293 h2 v1 h1 v1 h1 v2 h-1 v1 h-1 v1 h-2 v-1 h-1 v-1 h-1 v-2 h1 v-1 h1z" fill="#ff00ff"/>
<rect x="1095.0" y="296" width="1" height="1" fill="#fff"/><rect x="1094.0" y="297" width="1" height="1" fill="#fff"/>
<path d="M1100.0,291 h2 v1 h1 v1 h1 v2 h-1 v1 h-1 v1 h-2 v-1 h-1 v-1 h-1 v-2 h1 v-1 h1z" fill="#ff00ff"/>
<rect x="1102.0" y="294" width="1" height="1" fill="#fff"/><rect x="1101.0" y="295" width="1" height="1" fill="#fff"/>
<path d="M1106.0,288 h2 v1 h1 v1 h1 v2 h-1 v1 h-1 v1 h-2 v-1 h-1 v-1 h-1 v-2 h1 v-1 h1z" fill="#ff00ff"/>
<rect x="1108.0" y="291" width="1" height="1" fill="#fff"/><rect x="1107.0" y="292" width="1" height="1" fill="#fff"/>
<path d="M1113.0,285 h2 v1 h1 v1 h1 v2 h-1 v1 h-1 v1 h-2 v-1 h-1 v-1 h-1 v-2 h1 v-1 h1z" fill="#ff00ff"/>
<rect x="1115.0" y="288" width="1" height="1" fill="#fff"/><rect x="1114.0" y="289" width="1" height="1" fill="#fff"/>
<path d="M1152.0,276 h2 v1 h1 v1 h1 v2 h-1 v1 h-1 v1 h-2 v-1 h-1 v-1 h-1 v-2 h1 v-1 h1z" fill="#ff00ff"/>
<rect x="1154.0" y="279" width="1" height="1" fill="#fff"/><rect x="1153.0" y="280" width="1" height="1" fill="#fff"/>
<path d="M1158.0,275 h2 v1 h1 v1 h1 v2 h-1 v1 h-1 v1 h-2 v-1 h-1 v-1 h-1 v-2 h1 v-1 h1z" fill="#ff00ff"/>
<rect x="1160.0" y="278" width="1" height="1" fill="#fff"/><rect x="1159.0" y="279" width="1" height="1" fill="#fff"/>
<path d="M1165.0,272 h2 v1 h1 v1 h1 v2 h-1 v1 h-1 v1 h-2 v-1 h-1 v-1 h-1 v-2 h1 v-1 h1z" fill="#ff00ff"/>
<rect x="1167.0" y="275" width="1" height="1" fill="#fff"/><rect x="1166.0" y="276" width="1" height="1" fill="#fff"/>
<path d="M1171.0,270 h2 v1 h1 v1 h1 v2 h-1 v1 h-1 v1 h-2 v-1 h-1 v-1 h-1 v-2 h1 v-1 h1z" fill="#ff00ff"/>
<rect x="1173.0" y="273" width="1" height="1" fill="#fff"/><rect x="1172.0" y="274" width="1" height="1" fill="#fff"/>
<path d="M1178.0,266 h2 v1 h1 v1 h1 v2 h-1 v1 h-1 v1 h-2 v-1 h-1 v-1 h-1 v-2 h1 v-1 h1z" fill="#ff00ff"/>
<rect x="1180.0" y="269" width="1" height="1" fill="#fff"/><rect x="1179.0" y="270" width="1" height="1" fill="#fff"/>
<path d="M1184.0,262 h2 v1 h1 v1 h1 v2 h-1 v1 h-1 v1 h-2 v-1 h-1 v-1 h-1 v-2 h1 v-1 h1z" fill="#ff00ff"/>
<rect x="1186.0" y="265" width="1" height="1" fill="#fff"/><rect x="1185.0" y="266" width="1" height="1" fill="#fff"/>
<path d="M1191.0,257 h2 v1 h1 v1 h1 v2 h-1 v1 h-1 v1 h-2 v-1 h-1 v-1 h-1 v-2 h1 v-1 h1z" fill="#ff00ff"/>
<rect x="1193.0" y="260" width="1" height="1" fill="#fff"/><rect x="1192.0" y="261" width="1" height="1" fill="#fff"/>
<path d="M1197.0,250 h2 v1 h1 v1 h1 v2 h-1 v1 h-1 v1 h-2 v-1 h-1 v-1 h-1 v-2 h1 v-1 h1z" fill="#ff00ff"/>
<rect x="1199.0" y="253" width="1" height="1" fill="#fff"/><rect x="1198.0" y="254" width="1" height="1" fill="#fff"/>
<path d="M1204.0,241 h2 v1 h1 v1 h1 v2 h-1 v1 h-1 v1 h-2 v-1 h-1 v-1 h-1 v-2 h1 v-1 h1z" fill="#ff00ff"/>
<rect x="1206.0" y="244" width="1" height="1" fill="#fff"/><rect x="1205.0" y="245" width="1" height="1" fill="#fff"/>
<path d="M1210.0,227 h2 v1 h1 v1 h1 v2 h-1 v1 h-1 v1 h-2 v-1 h-1 v-1 h-1 v-2 h1 v-1 h1z" fill="#ff00ff"/>
<rect x="1212.0" y="230" width="1" height="1" fill="#fff"/><rect x="1211.0" y="231" width="1" height="1" fill="#fff"/>
<path d="M1217.0,213 h2 v1 h1 v1 h1 v2 h-1 v1 h-1 v1 h-2 v-1 h-1 v-1 h-1 v-2 h1 v-1 h1z" fill="#ff00ff"/>
<rect x="1219.0" y="216" width="1" height="1" fill="#fff"/><rect x="1218.0" y="217" width="1" height="1" fill="#fff"/>
<path d="M1223.0,203 h2 v1 h1 v1 h1 v2 h-1 v1 h-1 v1 h-2 v-1 h-1 v-1 h-1 v-2 h1 v-1 h1z" fill="#ff00ff"/>
<rect x="1225.0" y="206" width="1" height="1" fill="#fff"/><rect x="1224.0" y="207" width="1" height="1" fill="#fff"/>
<path d="M1230.0,192 h2 v1 h1 v1 h1 v2 h-1 v1 h-1 v1 h-2 v-1 h-1 v-1 h-1 v-2 h1 v-1 h1z" fill="#ff00ff"/>
<rect x="1232.0" y="195" width="1" height="1" fill="#fff"/><rect x="1231.0" y="196" width="1" height="1" fill="#fff"/>
<path d="M1236.0,186 h2 v1 h1 v1 h1 v2 h-1 v1 h-1 v1 h-2 v-1 h-1 v-1 h-1 v-2 h1 v-1 h1z" fill="#ff00ff"/>
<rect x="1238.0" y="189" width="1" height="1" fill="#fff"/><rect x="1237.0" y="190" width="1" height="1" fill="#fff"/>
<path d="M1243.0,186 h2 v1 h1 v1 h1 v2 h-1 v1 h-1 v1 h-2 v-1 h-1 v-1 h-1 v-2 h1 v-1 h1z" fill="#ff00ff"/>
<rect x="1245.0" y="189" width="1" height="1" fill="#fff"/><rect x="1244.0" y="190" width="1" height="1" fill="#fff"/>
<path d="M1249.0,179 h2 v1 h1 v1 h1 v2 h-1 v1 h-1 v1 h-2 v-1 h-1 v-1 h-1 v-2 h1 v-1 h1z" fill="#ff00ff"/>
<rect x="1251.0" y="182" width="1" height="1" fill="#fff"/><rect x="1250.0" y="183" width="1" height="1" fill="#fff"/>
<path d="M1256.0,177 h2 v1 h1 v1 h1 v2 h-1 v1 h-1 v1 h-2 v-1 h-1 v-1 h-1 v-2 h1 v-1 h1z" fill="#ff00ff"/>
<rect x="1258.0" y="180" width="1" height="1" fill="#fff"/><rect x="1257.0" y="181" width="1" height="1" fill="#fff"/>
<path d="M1262.0,165 h2 v1 h1 v1 h1 v2 h-1 v1 h-1 v1 h-2 v-1 h-1 v-1 h-1 v-2 h1 v-1 h1z" fill="#ff00ff"/>
<rect x="1264.0" y="168" width="1" height="1" fill="#fff"/><rect x="1263.0" y="169" width="1" height="1" fill="#fff"/>
<path d="M1269.0,155 h2 v1 h1 v1 h1 v2 h-1 v1 h-1 v1 h-2 v-1 h-1 v-1 h-1 v-2 h1 v-1 h1z" fill="#ff00ff"/>
<rect x="1271.0" y="158" width="1" height="1" fill="#fff"/><rect x="1270.0" y="159" width="1" height="1" fill="#fff"/>
<path d="M1275.0,143 h2 v1 h1 v1 h1 v2 h-1 v1 h-1 v1 h-2 v-1 h-1 v-1 h-1 v-2 h1 v-1 h1z" fill="#ff00ff"/>
<rect x="1277.0" y="146" width="1" height="1" fill="#fff"/><rect x="1276.0" y="147" width="1" height="1" fill="#fff"/>
<path d="M1282.0,135 h2 v1 h1 v1 h1 v2 h-1 v1 h-1 v1 h-2 v-1 h-1 v-1 h-1 v-2 h1 v-1 h1z" fill="#ff00ff"/>
<rect x="1284.0" y="138" width="1" height="1" fill="#fff"/><rect x="1283.0" y="139" width="1" height="1" fill="#fff"/>
<path d="M1288.0,125 h2 v1 h1 v1 h1 v2 h-1 v1 h-1 v1 h-2 v-1 h-1 v-1 h-1 v-2 h1 v-1 h1z" fill="#ff00ff"/>
<rect x="1290.0" y="128" width="1" height="1" fill="#fff"/><rect x="1289.0" y="129" width="1" height="1" fill="#fff"/>
<path d="M1308.0,137 h2 v1 h1 v1 h1 v2 h-1 v1 h-1 v1 h-2 v-1 h-1 v-1 h-1 v-2 h1 v-1 h1z" fill="#ff00ff"/>
<rect x="1310.0" y="140" width="1" height="1" fill="#fff"/><rect x="1309.0" y="141" width="1" height="1" fill="#fff"/>
<path d="M1314.0,136 h2 v1 h1 v1 h1 v2 h-1 v1 h-1 v1 h-2 v-1 h-1 v-1 h-1 v-2 h1 v-1 h1z" fill="#ff00ff"/>
<rect x="1316.0" y="139" width="1" height="1" fill="#fff"/><rect x="1315.0" y="140" width="1" height="1" fill="#fff"/>
<path d="M1386.0,168 h2 v1 h1 v1 h1 v2 h-1 v1 h-1 v1 h-2 v-1 h-1 v-1 h-1 v-2 h1 v-1 h1z" fill="#ff00ff"/>
<rect x="1388.0" y="171" width="1" height="1" fill="#fff"/><rect x="1387.0" y="172" width="1" height="1" fill="#fff"/>
<path d="M1392.0,167 h2 v1 h1 v1 h1 v2 h-1 v1 h-1 v1 h-2 v-1 h-1 v-1 h-1 v-2 h1 v-1 h1z" fill="#ff00ff"/>
<rect x="1394.0" y="170" width="1" height="1" fill="#fff"/><rect x="1393.0" y="171" width="1" height="1" fill="#fff"/>
<path d="M1399.0,165 h2 v1 h1 v1 h1 v2 h-1 v1 h-1 v1 h-2 v-1 h-1 v-1 h-1 v-2 h1 v-1 h1z" fill="#ff00ff"/>
<rect x="1401.0" y="168" width="1" height="1" fill="#fff"/><rect x="1400.0" y="169" width="1" height="1" fill="#fff"/>
<path d="M1405.0,163 h2 v1 h1 v1 h1 v2 h-1 v1 h-1 v1 h-2 v-1 h-1 v-1 h-1 v-2 h1 v-1 h1z" fill="#ff00ff"/>
<rect x="1407.0" y="166" width="1" height="1" fill="#fff"/><rect x="1406.0" y="167" width="1" height="1" fill="#fff"/>
<path d="M1412.0,160 h2 v1 h1 v1 h1 v2 h-1 v1 h-1 v1 h-2 v-1 h-1 v-1 h-1 v-2 h1 v-1 h1z" fill="#ff00ff"/>
<rect x="1414.0" y="163" width="1" height="1" fill="#fff"/><rect x="1413.0" y="164" width="1" height="1" fill="#fff"/>
<path d="M1418.0,157 h2 v1 h1 v1 h1 v2 h-1 v1 h-1 v1 h-2 v-1 h-1 v-1 h-1 v-2 h1 v-1 h1z" fill="#ff00ff"/>
<rect x="1420.0" y="160" width="1" height="1" fill="#fff"/><rect x="1419.0" y="161" width="1" height="1" fill="#fff"/>
<rect x="3.0" y="471" width="1" height="10" fill="#ff3232"/>
<rect x="1.5" y="481.5" width="4" height="1" fill="#000" stroke="#ff3232" stroke-width="1"/>
<rect x="9.0" y="498" width="1" height="14" fill="#54ffff"/>
<rect x="9.0" y="533" width="1" height="13" fill="#54ffff"/>
<rect x="7.0" y="512" width="5" height="21" fill="#54ffff"/>
<rect x="16.0" y="519" width="1" height="21" fill="#54ffff"/>
<rect x="14.0" y="530" width="5" height="1" fill="#54ffff"/>
<rect x="22.0" y="502" width="1" height="6" fill="#ff3232"/>
<rect x="22.0" y="541" width="1" height="5" fill="#ff3232"/>
<rect x="20.5" y="508.5" width="4" height="32" fill="#000" stroke="#ff3232" stroke-width="1"/>
<rect x="29.0" y="491" width="1" height="6" fill="#54ffff"/>
<rect x="29.0" y="502" width="1" height="1" fill="#54ffff"/>
<rect x="27.0" y="497" width="5" height="5" fill="#54ffff"/>
<rect x="35.0" y="467" width="1" height="10" fill="#ff3232"/>
<rect x="33.0" y="477" width="5" height="26" fill="#cc66cc"/>
<rect x="42.0" y="470" width="1" height="1" fill="#54ffff"/>
<rect x="42.0" y="476" width="1" height="5" fill="#54ffff"/>
<rect x="40.0" y="471" width="5" height="5" fill="#54ffff"/>
<rect x="48.0" y="477" width="1" height="1" fill="#54ffff"/>
<rect x="48.0" y="482" width="1" height="3" fill="#54ffff"/>
<rect x="46.0" y="478" width="5" height="4" fill="#54ffff"/>
<rect x="55.0" y="475" width="1" height="10" fill="#54ffff"/>
<rect x="53.0" y="477" width="5" height="1" fill="#54ffff"/>
<rect x="61.0" y="468" width="1" height="6" fill="#ff3232"/>
<rect x="59.5" y="474.5" width="4" height="6" fill="#000" stroke="#ff3232" stroke-width="1"/>
<rect x="68.0" y="475" width="1" height="8" fill="#54ffff"/>
<rect x="66.0" y="478" width="5" height="1" fill="#54ffff"/>
<rect x="72.5" y="473.5" width="4" height="4" fill="#000" stroke="#ff3232" stroke-width="1"/>
<rect x="81.0" y="472" width="1" height="6" fill="#ff3232"/>
<rect x="79.0" y="475" width="5" height="1" fill="#ff3232"/>
<rect x="87.0" y="472" width="1" height="6" fill="#54ffff"/>
<rect x="85.0" y="475" width="5" height="1" fill="#54ffff"/>
<rect x="94.0" y="481" width="1" height="3" fill="#54ffff"/>
<rect x="92.0" y="475" width="5" height="6" fill="#54ffff"/>
<rect x="100.0" y="479" width="1" height="8" fill="#54ffff"/>
<rect x="98.0" y="483" width="5" height="1" fill="#54ffff"/>
<rect x="107.0" y="481" width="1" height="4" fill="#ff3232"/>
<rect x="105.0" y="483" width="5" height="1" fill="#ff3232"/>
<rect x="111.5" y="478.5" width="4" height="5" fill="#000" stroke="#ff3232" stroke-width="1"/>
<rect x="118.5" y="471.5" width="4" height="6" fill="#000" stroke="#ff3232" stroke-width="1"/>
<rect x="124.5" y="462.5" width="4" height="6" fill="#000" stroke="#ff3232" stroke-width="1"/>
<rect x="133.0" y="454" width="1" height="1" fill="#54ffff"/>
<rect x="133.0" y="464" width="1" height="5" fill="#54ffff"/>
<rect x="131.0" y="455" width="5" height="9" fill="#54ffff"/>
<rect x="139.0" y="466" width="1" height="2" fill="#ff3232"/>
<rect x="137.0" y="467" width="5" height="1" fill="#ff3232"/>
<rect x="146.0" y="478" width="1" height="1" fill="#54ffff"/>
<rect x="144.0" y="469" width="5" height="9" fill="#54ffff"/>
<rect x="152.0" y="473" width="1" height="5" fill="#ff3232"/>
<rect x="150.0" y="476" width="5" height="1" fill="#ff3232"/>
<rect x="159.0" y="469" width="1" height="1" fill="#54ffff"/>
<rect x="157.0" y="470" width="5" height="9" fill="#0000ff"/>
<rect x="165.0" y="473" width="1" height="8" fill="#54ffff"/>
<rect x="163.0" y="476" width="5" height="1" fill="#54ffff"/>
<rect x="170.0" y="477" width="5" height="10" fill="#54ffff"/>
<rect x="178.0" y="485" width="1" height="4" fill="#ff3232"/>
<rect x="176.0" y="488" width="5" height="1" fill="#ff3232"/>
<rect x="185.0" y="488" width="1" height="3" fill="#ff3232"/>
<rect x="183.5" y="485.5" width="4" height="2" fill="#000" stroke="#ff3232" stroke-width="1"/>
<rect x="189.5" y="482.5" width="4" height="2" fill="#000" stroke="#ff3232" stroke-width="1"/>
<rect x="196.0" y="485" width="5" height="3" fill="#54ffff"/>
<rect x="204.0" y="482" width="1" height="8" fill="#54ffff"/>
<rect x="202.0" y="488" width="5" height="1" fill="#54ffff"/>
<rect x="211.0" y="489" width="1" height="1" fill="#54ffff"/>
<rect x="209.0" y="490" width="5" height="7" fill="#54ffff"/>
<rect x="217.0" y="493" width="1" height="1" fill="#ff3232"/>
<rect x="215.5" y="494.5" width="4" height="1" fill="#000" stroke="#ff3232" stroke-width="1"/>
<rect x="222.0" y="494" width="5" height="6" fill="#54ffff"/>
<rect x="230.0" y="499" width="1" height="1" fill="#54ffff"/>
<rect x="228.0" y="500" width="5" height="4" fill="#54ffff"/>
<rect x="235.5" y="493.5" width="4" height="8" fill="#000" stroke="#ff3232" stroke-width="1"/>
<rect x="241.0" y="496" width="5" height="6" fill="#54ffff"/>
<rect x="250.0" y="495" width="1" height="4" fill="#ff3232"/>
<rect x="248.5" y="499.5" width="4" height="5" fill="#000" stroke="#ff3232" stroke-width="1"/>
<rect x="256.0" y="495" width="1" height="1" fill="#ff3232"/>
<rect x="254.5" y="496.5" width="4" height="2" fill="#000" stroke="#ff3232" stroke-width="1"/>
<rect x="261.0" y="488" width="5" height="10" fill="#cc66cc"/>
<rect x="269.0" y="486" width="1" height="4" fill="#ff3232"/>
<rect x="267.0" y="488" width="5" height="1" fill="#ff3232"/>
<rect x="276.0" y="486" width="1" height="4" fill="#ff3232"/>
<rect x="274.0" y="488" width="5" height="1" fill="#ff3232"/>
<rect x="282.0" y="483" width="1" height="2" fill="#54ffff"/>
<rect x="282.0" y="498" width="1" height="3" fill="#54ffff"/>
<rect x="280.0" y="485" width="5" height="13" fill="#54ffff"/>
<rect x="289.0" y="495" width="1" height="4" fill="#ff3232"/>
<rect x="287.0" y="498" width="5" height="1" fill="#ff3232"/>
<rect x="295.0" y="498" width="1" height="1" fill="#54ffff"/>
<rect x="293.0" y="499" width="5" height="4" fill="#0000ff"/>
<rect x="302.0" y="502" width="1" height="6" fill="#ff3232"/>
<rect x="300.0" y="505" width="5" height="1" fill="#ff3232"/>
<rect x="308.0" y="502" width="1" height="2" fill="#ff3232"/>
<rect x="306.5" y="504.5" width="4" height="3" fill="#000" stroke="#ff3232" stroke-width="1"/>
<rect x="315.0" y="501" width="1" height="6" fill="#54ffff"/>
<rect x="313.0" y="504" width="5" height="1" fill="#54ffff"/>
<rect x="321.0" y="499" width="1" height="1" fill="#ff3232"/>
<rect x="319.0" y="500" width="5" height="7" fill="#cc66cc"/>
<rect x="328.0" y="494" width="1" height="8" fill="#ff3232"/>
<rect x="326.0" y="501" width="5" height="1" fill="#ff3232"/>
<rect x="334.0" y="497" width="1" height="6" fill="#54ffff"/>
<rect x="332.0" y="502" width="5" height="1" fill="#54ffff"/>
<rect x="341.0" y="495" width="1" height="2" fill="#ff3232"/>
<rect x="339.5" y="497.5" width="4" height="10" fill="#000" stroke="#ff3232" stroke-width="1"/>
<rect x="345.5" y="488.5" width="4" height="7" fill="#000" stroke="#ff3232" stroke-width="1"/>
<rect x="354.0" y="487" width="1" height="2" fill="#ff3232"/>
<rect x="352.5" y="478.5" width="4" height="8" fill="#000" stroke="#ff3232" stroke-width="1"/>
<rect x="360.0" y="475" width="1" height="3" fill="#54ffff"/>
<rect x="358.0" y="478" width="5" height="6" fill="#54ffff"/>
<rect x="367.0" y="476" width="1" height="3" fill="#54ffff"/>
<rect x="367.0" y="482" width="1" height="3" fill="#54ffff"/>
<rect x="365.0" y="479" width="5" height="3" fill="#54ffff"/>
<rect x="373.0" y="473" width="1" height="1" fill="#ff3232"/>
<rect x="371.5" y="474.5" width="4" height="5" fill="#000" stroke="#ff3232" stroke-width="1"/>
<rect x="380.0" y="470" width="1" height="9" fill="#54ffff"/>
<rect x="378.0" y="475" width="5" height="1" fill="#54ffff"/>
<rect x="386.0" y="485" width="1" height="2" fill="#54ffff"/>
<rect x="384.0" y="478" width="5" height="7" fill="#54ffff"/>
<rect x="393.0" y="484" width="1" height="5" fill="#ff3232"/>
<rect x="391.0" y="486" width="5" height="1" fill="#ff3232"/>
<rect x="399.0" y="479" width="1" height="13" fill="#54ffff"/>
<rect x="397.0" y="486" width="5" height="1" fill="#54ffff"/>
<rect x="406.0" y="486" width="1" height="4" fill="#54ffff"/>
<rect x="404.0" y="488" width="5" height="1" fill="#54ffff"/>
<rect x="410.5" y="481.5" width="4" height="4" fill="#000" stroke="#ff3232" stroke-width="1"/>
<rect x="419.0" y="481" width="1" height="1" fill="#54ffff"/>
<rect x="419.0" y="487" width="1" height="1" fill="#54ffff"/>
<rect x="417.0" y="482" width="5" height="5" fill="#54ffff"/>
<rect x="425.0" y="487" width="1" height="3" fill="#54ffff"/>
<rect x="423.0" y="489" width="5" height="1" fill="#0000ff"/>
<rect x="432.0" y="481" width="1" height="1" fill="#ff3232"/>
<rect x="432.0" y="490" width="1" height="1" fill="#ff3232"/>
<rect x="430.0" y="482" width="5" height="8" fill="#cc66cc"/>
<rect x="438.0" y="480" width="1" height="2" fill="#54ffff"/>
<rect x="438.0" y="483" width="1" height="1" fill="#54ffff"/>
<rect x="436.0" y="482" width="5" height="1" fill="#54ffff"/>
<rect x="445.0" y="482" width="1" height="7" fill="#54ffff"/>
<rect x="443.0" y="485" width="5" height="1" fill="#0000ff"/>
<rect x="451.0" y="477" width="1" height="7" fill="#ff3232"/>
<rect x="449.5" y="484.5" width="4" height="1" fill="#000" stroke="#ff3232" stroke-width="1"/>
<rect x="458.0" y="486" width="1" height="2" fill="#ff3232"/>
<rect x="456.0" y="481" width="5" height="5" fill="#cc66cc"/>
<rect x="464.0" y="475" width="1" height="7" fill="#ff3232"/>
<rect x="462.0" y="479" width="5" height="1" fill="#ff3232"/>
<rect x="471.0" y="478" width="1" height="3" fill="#ff3232"/>
<rect x="469.0" y="479" width="5" height="1" fill="#ff3232"/>
<rect x="477.0" y="474" width="1" height="3" fill="#ff3232"/>
<rect x="475.5" y="477.5" width="4" height="1" fill="#000" stroke="#ff3232" stroke-width="1"/>
<rect x="484.0" y="470" width="1" height="3" fill="#ff3232"/>
<rect x="482.5" y="473.5" width="4" height="4" fill="#000" stroke="#ff3232" stroke-width="1"/>
<rect x="488.5" y="466.5" width="4" height="7" fill="#000" stroke="#ff3232" stroke-width="1"/>
<rect x="497.0" y="453" width="1" height="1" fill="#ff3232"/>
<rect x="497.0" y="466" width="1" height="3" fill="#ff3232"/>
<rect x="495.5" y="454.5" width="4" height="11" fill="#000" stroke="#ff3232" stroke-width="1"/>
<rect x="503.0" y="452" width="1" height="6" fill="#54ffff"/>
<rect x="501.0" y="453" width="5" height="1" fill="#54ffff"/>
<rect x="508.5" y="445.5" width="4" height="11" fill="#000" stroke="#ff3232" stroke-width="1"/>
<rect x="516.0" y="441" width="1" height="5" fill="#54ffff"/>
<rect x="516.0" y="449" width="1" height="5" fill="#54ffff"/>
<rect x="514.0" y="446" width="5" height="3" fill="#54ffff"/>
<rect x="523.0" y="444" width="1" height="6" fill="#54ffff"/>
<rect x="523.0" y="455" width="1" height="2" fill="#54ffff"/>
<rect x="521.0" y="450" width="5" height="5" fill="#54ffff"/>
<rect x="529.0" y="450" width="1" height="6" fill="#54ffff"/>
<rect x="529.0" y="461" width="1" height="5" fill="#54ffff"/>
<rect x="527.0" y="456" width="5" height="5" fill="#54ffff"/>
<rect x="534.5" y="454.5" width="4" height="8" fill="#000" stroke="#ff3232" stroke-width="1"/>
<rect x="542.0" y="453" width="1" height="3" fill="#ff3232"/>
<rect x="540.0" y="454" width="5" height="1" fill="#ff3232"/>
<rect x="547.5" y="448.5" width="4" height="5" fill="#000" stroke="#ff3232" stroke-width="1"/>
<rect x="555.0" y="437" width="1" height="7" fill="#ff3232"/>
<rect x="555.0" y="448" width="1" height="1" fill="#ff3232"/>
<rect x="553.5" y="444.5" width="4" height="3" fill="#000" stroke="#ff3232" stroke-width="1"/>
<rect x="560.0" y="448" width="5" height="5" fill="#54ffff"/>
<rect x="568.0" y="447" width="1" height="2" fill="#ff3232"/>
<rect x="566.5" y="449.5" width="4" height="4" fill="#000" stroke="#ff3232" stroke-width="1"/>
<rect x="575.0" y="430" width="1" height="3" fill="#ff3232"/>
<rect x="573.5" y="433.5" width="4" height="16" fill="#000" stroke="#ff3232" stroke-width="1"/>
<rect x="579.5" y="428.5" width="4" height="4" fill="#000" stroke="#ff3232" stroke-width="1"/>
<rect x="588.0" y="406" width="1" height="16" fill="#ff3232"/>
<rect x="586.5" y="422.5" width="4" height="4" fill="#000" stroke="#ff3232" stroke-width="1"/>
<rect x="592.5" y="413.5" width="4" height="13" fill="#000" stroke="#ff3232" stroke-width="1"/>
<rect x="601.0" y="395" width="1" height="5" fill="#ff3232"/>
<rect x="601.0" y="407" width="1" height="5" fill="#ff3232"/>
<rect x="599.5" y="400.5" width="4" height="6" fill="#000" stroke="#ff3232" stroke-width="1"/>
<rect x="607.0" y="397" width="1" height="4" fill="#54ffff"/>
<rect x="607.0" y="406" width="1" height="1" fill="#54ffff"/>
<rect x="605.0" y="401" width="5" height="5" fill="#54ffff"/>
<rect x="612.5" y="383.5" width="4" height="25" fill="#000" stroke="#ff3232" stroke-width="1"/>
<rect x="620.0" y="369" width="1" height="11" fill="#54ffff"/>
<rect x="620.0" y="386" width="1" height="2" fill="#54ffff"/>
<rect x="618.0" y="380" width="5" height="6" fill="#54ffff"/>
<rect x="625.5" y="336.5" width="4" height="44" fill="#000" stroke="#ff3232" stroke-width="1"/>
<rect x="633.0" y="298" width="1" height="36" fill="#54ffff"/>
<rect x="631.0" y="318" width="5" height="1" fill="#54ffff"/>
<rect x="640.0" y="319" width="1" height="6" fill="#ff3232"/>
<rect x="640.0" y="330" width="1" height="7" fill="#ff3232"/>
<rect x="638.5" y="325.5" width="4" height="4" fill="#000" stroke="#ff3232" stroke-width="1"/>
<rect x="646.0" y="292" width="1" height="28" fill="#54ffff"/>
<rect x="644.0" y="320" width="5" height="5" fill="#54ffff"/>
<rect x="651.5" y="280.5" width="4" height="41" fill="#000" stroke="#ff3232" stroke-width="1"/>
<rect x="659.0" y="292" width="1" height="1" fill="#54ffff"/>
<rect x="659.0" y="301" width="1" height="11" fill="#54ffff"/>
<rect x="657.0" y="293" width="5" height="8" fill="#54ffff"/>
<rect x="665.0" y="283" width="1" height="6" fill="#ff3232"/>
<rect x="665.0" y="292" width="1" height="17" fill="#ff3232"/>
<rect x="663.5" y="289.5" width="4" height="2" fill="#000" stroke="#ff3232" stroke-width="1"/>
<rect x="672.0" y="283" width="1" height="8" fill="#54ffff"/>
<rect x="672.0" y="312" width="1" height="6" fill="#54ffff"/>
<rect x="670.0" y="291" width="5" height="21" fill="#54ffff"/>
<rect x="678.0" y="306" width="1" height="10" fill="#54ffff"/>
<rect x="678.0" y="323" width="1" height="4" fill="#54ffff"/>
<rect x="676.0" y="316" width="5" height="7" fill="#54ffff"/>
<rect x="685.0" y="372" width="1" height="8" fill="#54ffff"/>
<rect x="683.0" y="326" width="5" height="46" fill="#0000ff"/>
<rect x="691.0" y="347" width="1" height="2" fill="#ff3232"/>
<rect x="691.0" y="369" width="1" height="7" fill="#ff3232"/>
<rect x="689.5" y="349.5" width="4" height="19" fill="#000" stroke="#ff3232" stroke-width="1"/>
<rect x="698.0" y="347" width="1" height="1" fill="#ff3232"/>
<rect x="698.0" y="351" width="1" height="10" fill="#ff3232"/>
<rect x="696.5" y="348.5" width="4" height="2" fill="#000" stroke="#ff3232" stroke-width="1"/>
<rect x="704.0" y="350" width="1" height="7" fill="#54ffff"/>
<rect x="704.0" y="364" width="1" height="3" fill="#54ffff"/>
<rect x="702.0" y="357" width="5" height="7" fill="#54ffff"/>
<rect x="711.0" y="349" width="1" height="7" fill="#ff3232"/>
<rect x="711.0" y="361" width="1" height="2" fill="#ff3232"/>
<rect x="709.5" y="356.5" width="4" height="4" fill="#000" stroke="#ff3232" stroke-width="1"/>
<rect x="717.0" y="356" width="1" height="4" fill="#ff3232"/>
<rect x="715.5" y="315.5" width="4" height="40" fill="#000" stroke="#ff3232" stroke-width="1"/>
<rect x="724.0" y="292" width="1" height="10" fill="#ff3232"/>
<rect x="722.5" y="302.5" width="4" height="13" fill="#000" stroke="#ff3232" stroke-width="1"/>
<rect x="730.0" y="297" width="1" height="6" fill="#54ffff"/>
<rect x="728.0" y="280" width="5" height="17" fill="#54ffff"/>
<rect x="737.0" y="284" width="1" height="6" fill="#ff3232"/>
<rect x="735.0" y="290" width="5" height="7" fill="#cc66cc"/>
<rect x="743.0" y="277" width="1" height="6" fill="#ff3232"/>
<rect x="743.0" y="294" width="1" height="8" fill="#ff3232"/>
<rect x="741.5" y="283.5" width="4" height="10" fill="#000" stroke="#ff3232" stroke-width="1"/>
<rect x="750.0" y="242" width="1" height="47" fill="#54ffff"/>
<rect x="748.0" y="274" width="5" height="1" fill="#54ffff"/>
<rect x="756.0" y="263" width="1" height="7" fill="#54ffff"/>
<rect x="756.0" y="285" width="1" height="1" fill="#54ffff"/>
<rect x="754.0" y="270" width="5" height="15" fill="#54ffff"/>
<rect x="763.0" y="250" width="1" height="6" fill="#ff3232"/>
<rect x="763.0" y="286" width="1" height="5" fill="#ff3232"/>
<rect x="761.5" y="256.5" width="4" height="29" fill="#000" stroke="#ff3232" stroke-width="1"/>
<rect x="769.0" y="250" width="1" height="28" fill="#54ffff"/>
<rect x="767.0" y="255" width="5" height="1" fill="#54ffff"/>
<rect x="776.0" y="210" width="1" height="12" fill="#ff3232"/>
<rect x="774.5" y="222.5" width="4" height="36" fill="#000" stroke="#ff3232" stroke-width="1"/>
<rect x="782.0" y="211" width="1" height="8" fill="#ff3232"/>
<rect x="782.0" y="225" width="1" height="6" fill="#ff3232"/>
<rect x="780.5" y="219.5" width="4" height="5" fill="#000" stroke="#ff3232" stroke-width="1"/>
<rect x="789.0" y="210" width="1" height="16" fill="#54ffff"/>
<rect x="789.0" y="231" width="1" height="1" fill="#54ffff"/>
<rect x="787.0" y="226" width="5" height="5" fill="#54ffff"/>
<rect x="795.0" y="233" width="1" height="13" fill="#ff3232"/>
<rect x="793.5" y="223.5" width="4" height="9" fill="#000" stroke="#ff3232" stroke-width="1"/>
<rect x="802.0" y="202" width="1" height="8" fill="#ff3232"/>
<rect x="802.0" y="213" width="1" height="5" fill="#ff3232"/>
<rect x="800.5" y="210.5" width="4" height="2" fill="#000" stroke="#ff3232" stroke-width="1"/>
<rect x="808.0" y="165" width="1" height="24" fill="#ff3232"/>
<rect x="808.0" y="194" width="1" height="4" fill="#ff3232"/>
<rect x="806.5" y="189.5" width="4" height="4" fill="#000" stroke="#ff3232" stroke-width="1"/>
<rect x="815.0" y="202" width="1" height="2" fill="#54ffff"/>
<rect x="815.0" y="234" width="1" height="6" fill="#54ffff"/>
<rect x="813.0" y="204" width="5" height="30" fill="#54ffff"/>
<rect x="819.0" y="220" width="5" height="43" fill="#0000ff"/>
<rect x="828.0" y="262" width="1" height="6" fill="#54ffff"/>
<rect x="826.0" y="212" width="5" height="50" fill="#54ffff"/>
<rect x="834.0" y="262" width="1" height="11" fill="#ff3232"/>
<rect x="832.5" y="250.5" width="4" height="11" fill="#000" stroke="#ff3232" stroke-width="1"/>
<rect x="841.0" y="240" width="1" height="19" fill="#ff3232"/>
<rect x="839.0" y="255" width="5" height="1" fill="#ff3232"/>
<rect x="847.0" y="257" width="1" height="2" fill="#54ffff"/>
<rect x="847.0" y="284" width="1" height="1" fill="#54ffff"/>
<rect x="845.0" y="259" width="5" height="25" fill="#54ffff"/>
<rect x="854.0" y="260" width="1" height="8" fill="#54ffff"/>
<rect x="854.0" y="278" width="1" height="5" fill="#54ffff"/>
<rect x="852.0" y="268" width="5" height="10" fill="#54ffff"/>
<rect x="860.0" y="275" width="1" height="3" fill="#ff3232"/>
<rect x="858.5" y="256.5" width="4" height="18" fill="#000" stroke="#ff3232" stroke-width="1"/>
<rect x="867.0" y="248" width="1" height="11" fill="#ff3232"/>
<rect x="867.0" y="266" width="1" height="7" fill="#ff3232"/>
<rect x="865.5" y="259.5" width="4" height="6" fill="#000" stroke="#ff3232" stroke-width="1"/>
<rect x="873.0" y="262" width="1" height="15" fill="#54ffff"/>
<rect x="871.0" y="263" width="5" height="1" fill="#54ffff"/>
<rect x="880.0" y="255" width="1" height="2" fill="#ff3232"/>
<rect x="878.5" y="227.5" width="4" height="27" fill="#000" stroke="#ff3232" stroke-width="1"/>
<rect x="886.0" y="206" width="1" height="2" fill="#ff3232"/>
<rect x="886.0" y="211" width="1" height="16" fill="#ff3232"/>
<rect x="884.5" y="208.5" width="4" height="2" fill="#000" stroke="#ff3232" stroke-width="1"/>
<rect x="893.0" y="204" width="1" height="12" fill="#ff3232"/>
<rect x="893.0" y="219" width="1" height="3" fill="#ff3232"/>
<rect x="891.5" y="216.5" width="4" height="2" fill="#000" stroke="#ff3232" stroke-width="1"/>
<rect x="899.0" y="206" width="1" height="9" fill="#ff3232"/>
<rect x="899.0" y="220" width="1" height="6" fill="#ff3232"/>
<rect x="897.0" y="215" width="5" height="5" fill="#cc66cc"/>
<rect x="906.0" y="213" width="1" height="2" fill="#54ffff"/>
<rect x="904.0" y="215" width="5" height="17" fill="#0000ff"/>
<rect x="912.0" y="234" width="1" height="1" fill="#54ffff"/>
<rect x="912.0" y="256" width="1" height="1" fill="#54ffff"/>
<rect x="910.0" y="235" width="5" height="21" fill="#54ffff"/>
<rect x="919.0" y="265" width="1" height="16" fill="#ff3232"/>
<rect x="917.5" y="263.5" width="4" height="1" fill="#000" stroke="#ff3232" stroke-width="1"/>
<rect x="925.0" y="255" width="1" height="5" fill="#54ffff"/>
<rect x="925.0" y="270" width="1" height="4" fill="#54ffff"/>
<rect x="923.0" y="260" width="5" height="10" fill="#54ffff"/>
<rect x="932.0" y="273" width="1" height="3" fill="#ff3232"/>
<rect x="930.5" y="276.5" width="4" height="12" fill="#000" stroke="#ff3232" stroke-width="1"/>
<rect x="938.0" y="246" width="1" height="1" fill="#ff3232"/>
<rect x="938.0" y="266" width="1" height="1" fill="#ff3232"/>
<rect x="936.5" y="247.5" width="4" height="18" fill="#000" stroke="#ff3232" stroke-width="1"/>
<rect x="945.0" y="248" width="1" height="7" fill="#ff3232"/>
<rect x="945.0" y="258" width="1" height="2" fill="#ff3232"/>
<rect x="943.5" y="255.5" width="4" height="2" fill="#000" stroke="#ff3232" stroke-width="1"/>
<rect x="951.0" y="246" width="1" height="5" fill="#54ffff"/>
<rect x="951.0" y="257" width="1" height="12" fill="#54ffff"/>
<rect x="949.0" y="251" width="5" height="6" fill="#54ffff"/>
<rect x="958.0" y="246" width="1" height="6" fill="#54ffff"/>
<rect x="958.0" y="268" width="1" height="2" fill="#54ffff"/>
<rect x="956.0" y="252" width="5" height="16" fill="#54ffff"/>
<rect x="964.0" y="266" width="1" height="6" fill="#ff3232"/>
<rect x="964.0" y="275" width="1" height="8" fill="#ff3232"/>
<rect x="962.5" y="272.5" width="4" height="2" fill="#000" stroke="#ff3232" stroke-width="1"/>
<rect x="971.0" y="258" width="1" height="2" fill="#ff3232"/>
<rect x="971.0" y="273" width="1" height="1" fill="#ff3232"/>
<rect x="969.5" y="260.5" width="4" height="12" fill="#000" stroke="#ff3232" stroke-width="1"/>
<rect x="977.0" y="269" width="1" height="5" fill="#54ffff"/>
<rect x="975.0" y="274" width="5" height="11" fill="#54ffff"/>
<rect x="984.0" y="272" width="1" height="12" fill="#54ffff"/>
<rect x="984.0" y="286" width="1" height="4" fill="#54ffff"/>
<rect x="982.0" y="284" width="5" height="2" fill="#54ffff"/>
<rect x="990.0" y="271" width="1" height="10" fill="#ff3232"/>
<rect x="990.0" y="288" width="1" height="1" fill="#ff3232"/>
<rect x="988.5" y="281.5" width="4" height="6" fill="#000" stroke="#ff3232" stroke-width="1"/>
<rect x="997.0" y="275" width="1" height="9" fill="#54ffff"/>
<rect x="997.0" y="287" width="1" height="2" fill="#54ffff"/>
<rect x="995.0" y="284" width="5" height="3" fill="#54ffff"/>
<rect x="1003.0" y="274" width="1" height="1" fill="#54ffff"/>
<rect x="1003.0" y="295" width="1" height="1" fill="#54ffff"/>
<rect x="1001.0" y="275" width="5" height="20" fill="#54ffff"/>
<rect x="1010.0" y="307" width="1" height="6" fill="#54ffff"/>
<rect x="1008.0" y="313" width="5" height="13" fill="#54ffff"/>
<rect x="1016.0" y="313" width="1" height="6" fill="#ff3232"/>
<rect x="1016.0" y="322" width="1" height="10" fill="#ff3232"/>
<rect x="1014.5" y="319.5" width="4" height="2" fill="#000" stroke="#ff3232" stroke-width="1"/>
<rect x="1023.0" y="301" width="1" height="13" fill="#54ffff"/>
<rect x="1021.0" y="312" width="5" height="1" fill="#54ffff"/>
<rect x="1029.0" y="295" width="1" height="6" fill="#ff3232"/>
<rect x="1029.0" y="316" width="1" height="2" fill="#ff3232"/>
<rect x="1027.5" y="301.5" width="4" height="14" fill="#000" stroke="#ff3232" stroke-width="1"/>
<rect x="1036.0" y="276" width="1" height="18" fill="#54ffff"/>
<rect x="1036.0" y="297" width="1" height="1" fill="#54ffff"/>
<rect x="1034.0" y="294" width="5" height="3" fill="#54ffff"/>
<rect x="1042.0" y="286" width="1" height="2" fill="#ff3232"/>
<rect x="1042.0" y="299" width="1" height="4" fill="#ff3232"/>
<rect x="1040.5" y="288.5" width="4" height="10" fill="#000" stroke="#ff3232" stroke-width="1"/>
<rect x="1049.0" y="286" width="1" height="9" fill="#ff3232"/>
<rect x="1047.0" y="275" width="5" height="11" fill="#cc66cc"/>
<rect x="1055.0" y="276" width="1" height="2" fill="#54ffff"/>
<rect x="1055.0" y="286" width="1" height="2" fill="#54ffff"/>
<rect x="1053.0" y="278" width="5" height="8" fill="#54ffff"/>
<rect x="1062.0" y="283" width="1" height="4" fill="#54ffff"/>
<rect x="1062.0" y="292" width="1" height="3" fill="#54ffff"/>
<rect x="1060.0" y="287" width="5" height="5" fill="#54ffff"/>
<rect x="1068.0" y="295" width="1" height="7" fill="#ff3232"/>
<rect x="1066.5" y="281.5" width="4" height="13" fill="#000" stroke="#ff3232" stroke-width="1"/>
<rect x="1075.0" y="277" width="1" height="3" fill="#ff3232"/>
<rect x="1075.0" y="282" width="1" height="10" fill="#ff3232"/>
<rect x="1073.5" y="280.5" width="4" height="1" fill="#000" stroke="#ff3232" stroke-width="1"/>
<rect x="1081.0" y="255" width="1" height="4" fill="#ff3232"/>
<rect x="1079.5" y="259.5" width="4" height="19" fill="#000" stroke="#ff3232" stroke-width="1"/>
<rect x="1088.0" y="254" width="1" height="7" fill="#ff3232"/>
<rect x="1086.5" y="261.5" width="4" height="4" fill="#000" stroke="#ff3232" stroke-width="1"/>
<rect x="1094.0" y="267" width="1" height="8" fill="#ff3232"/>
<rect x="1092.5" y="259.5" width="4" height="7" fill="#000" stroke="#ff3232" stroke-width="1"/>
<rect x="1101.0" y="255" width="1" height="2" fill="#54ffff"/>
<rect x="1099.0" y="257" width="5" height="13" fill="#54ffff"/>
<rect x="1107.0" y="272" width="1" height="7" fill="#ff3232"/>
<rect x="1105.5" y="259.5" width="4" height="12" fill="#000" stroke="#ff3232" stroke-width="1"/>
<rect x="1114.0" y="261" width="1" height="7" fill="#54ffff"/>
<rect x="1112.0" y="268" width="5" height="8" fill="#54ffff"/>
<rect x="1120.0" y="275" width="1" height="3" fill="#54ffff"/>
<rect x="1120.0" y="291" width="1" height="5" fill="#54ffff"/>
<rect x="1118.0" y="278" width="5" height="13" fill="#0000ff"/>
<rect x="1127.0" y="290" width="1" height="4" fill="#ff3232"/>
<rect x="1125.0" y="273" width="5" height="17" fill="#cc66cc"/>
<rect x="1133.0" y="271" width="1" height="9" fill="#54ffff"/>
<rect x="1131.0" y="279" width="5" height="1" fill="#0000ff"/>
<rect x="1138.0" y="272" width="5" height="11" fill="#54ffff"/>
<rect x="1144.0" y="263" width="5" height="17" fill="#cc66cc"/>
<rect x="1153.0" y="252" width="1" height="4" fill="#ff3232"/>
<rect x="1151.5" y="256.5" width="4" height="8" fill="#000" stroke="#ff3232" stroke-width="1"/>
<rect x="1159.0" y="255" width="1" height="3" fill="#ff3232"/>
<rect x="1157.5" y="246.5" width="4" height="8" fill="#000" stroke="#ff3232" stroke-width="1"/>
<rect x="1166.0" y="241" width="1" height="3" fill="#ff3232"/>
<rect x="1166.0" y="248" width="1" height="4" fill="#ff3232"/>
<rect x="1164.5" y="244.5" width="4" height="3" fill="#000" stroke="#ff3232" stroke-width="1"/>
<rect x="1172.0" y="240" width="1" height="12" fill="#54ffff"/>
<rect x="1170.0" y="248" width="5" height="1" fill="#54ffff"/>
<rect x="1179.0" y="239" width="1" height="9" fill="#ff3232"/>
<rect x="1177.5" y="248.5" width="4" height="2" fill="#000" stroke="#ff3232" stroke-width="1"/>
<rect x="1185.0" y="233" width="1" height="6" fill="#ff3232"/>
<rect x="1183.5" y="239.5" width="4" height="8" fill="#000" stroke="#ff3232" stroke-width="1"/>
<rect x="1190.0" y="233" width="5" height="16" fill="#54ffff"/>
<rect x="1196.5" y="217.5" width="4" height="21" fill="#000" stroke="#ff3232" stroke-width="1"/>
<rect x="1205.0" y="195" width="1" height="7" fill="#ff3232"/>
<rect x="1203.5" y="202.5" width="4" height="17" fill="#000" stroke="#ff3232" stroke-width="1"/>
<rect x="1211.0" y="180" width="1" height="4" fill="#ff3232"/>
<rect x="1211.0" y="189" width="1" height="5" fill="#ff3232"/>
<rect x="1209.5" y="184.5" width="4" height="4" fill="#000" stroke="#ff3232" stroke-width="1"/>
<rect x="1218.0" y="164" width="1" height="13" fill="#ff3232"/>
<rect x="1216.5" y="177.5" width="4" height="8" fill="#000" stroke="#ff3232" stroke-width="1"/>
<rect x="1224.0" y="183" width="1" height="7" fill="#ff3232"/>
<rect x="1222.5" y="168.5" width="4" height="14" fill="#000" stroke="#ff3232" stroke-width="1"/>
<rect x="1231.0" y="163" width="1" height="8" fill="#ff3232"/>
<rect x="1229.5" y="154.5" width="4" height="8" fill="#000" stroke="#ff3232" stroke-width="1"/>
<rect x="1237.0" y="154" width="1" height="4" fill="#54ffff"/>
<rect x="1237.0" y="185" width="1" height="4" fill="#54ffff"/>
<rect x="1235.0" y="158" width="5" height="27" fill="#54ffff"/>
<rect x="1244.0" y="156" width="1" height="13" fill="#ff3232"/>
<rect x="1242.5" y="169.5" width="4" height="9" fill="#000" stroke="#ff3232" stroke-width="1"/>
<rect x="1250.0" y="174" width="1" height="6" fill="#ff3232"/>
<rect x="1248.5" y="156.5" width="4" height="17" fill="#000" stroke="#ff3232" stroke-width="1"/>
<rect x="1257.0" y="121" width="1" height="7" fill="#ff3232"/>
<rect x="1257.0" y="146" width="1" height="2" fill="#ff3232"/>
<rect x="1255.5" y="128.5" width="4" height="17" fill="#000" stroke="#ff3232" stroke-width="1"/>
<rect x="1263.0" y="122" width="1" height="4" fill="#54ffff"/>
<rect x="1263.0" y="130" width="1" height="3" fill="#54ffff"/>
<rect x="1261.0" y="126" width="5" height="4" fill="#54ffff"/>
<rect x="1270.0" y="116" width="1" height="16" fill="#54ffff"/>
<rect x="1270.0" y="137" width="1" height="7" fill="#54ffff"/>
<rect x="1268.0" y="132" width="5" height="5" fill="#54ffff"/>
<rect x="1276.0" y="102" width="1" height="4" fill="#ff3232"/>
<rect x="1274.5" y="106.5" width="4" height="31" fill="#000" stroke="#ff3232" stroke-width="1"/>
<rect x="1283.0" y="86" width="1" height="2" fill="#54ffff"/>
<rect x="1283.0" y="110" width="1" height="7" fill="#54ffff"/>
<rect x="1281.0" y="88" width="5" height="22" fill="#54ffff"/>
<rect x="1289.0" y="119" width="1" height="6" fill="#ff3232"/>
<rect x="1287.5" y="107.5" width="4" height="11" fill="#000" stroke="#ff3232" stroke-width="1"/>
<rect x="1296.0" y="100" width="1" height="9" fill="#54ffff"/>
<rect x="1296.0" y="128" width="1" height="3" fill="#54ffff"/>
<rect x="1294.0" y="109" width="5" height="19" fill="#54ffff"/>
<rect x="1302.0" y="102" width="1" height="3" fill="#ff3232"/>
<rect x="1302.0" y="132" width="1" height="8" fill="#ff3232"/>
<rect x="1300.5" y="105.5" width="4" height="26" fill="#000" stroke="#ff3232" stroke-width="1"/>
<rect x="1309.0" y="86" width="1" height="8" fill="#ff3232"/>
<rect x="1309.0" y="96" width="1" height="9" fill="#ff3232"/>
<rect x="1307.5" y="94.5" width="4" height="1" fill="#000" stroke="#ff3232" stroke-width="1"/>
<rect x="1315.0" y="91" width="1" height="6" fill="#54ffff"/>
<rect x="1313.0" y="97" width="5" height="33" fill="#0000ff"/>
<rect x="1322.0" y="114" width="1" height="9" fill="#ff3232"/>
<rect x="1322.0" y="132" width="1" height="16" fill="#ff3232"/>
<rect x="1320.5" y="123.5" width="4" height="8" fill="#000" stroke="#ff3232" stroke-width="1"/>
<rect x="1328.0" y="131" width="1" height="4" fill="#54ffff"/>
<rect x="1326.0" y="135" width="5" height="34" fill="#54ffff"/>
<rect x="1335.0" y="151" width="1" height="1" fill="#54ffff"/>
<rect x="1335.0" y="156" width="1" height="22" fill="#54ffff"/>
<rect x="1333.0" y="152" width="5" height="4" fill="#54ffff"/>
<rect x="1341.0" y="174" width="1" height="11" fill="#54ffff"/>
<rect x="1339.0" y="168" width="5" height="6" fill="#54ffff"/>
<rect x="1348.0" y="181" width="1" height="3" fill="#ff3232"/>
<rect x="1348.0" y="192" width="1" height="6" fill="#ff3232"/>
<rect x="1346.5" y="184.5" width="4" height="7" fill="#000" stroke="#ff3232" stroke-width="1"/>
<rect x="1354.0" y="182" width="1" height="11" fill="#ff3232"/>
<rect x="1354.0" y="195" width="1" height="5" fill="#ff3232"/>
<rect x="1352.5" y="193.5" width="4" height="1" fill="#000" stroke="#ff3232" stroke-width="1"/>
<rect x="1361.0" y="174" width="1" height="7" fill="#ff3232"/>
<rect x="1359.5" y="167.5" width="4" height="6" fill="#000" stroke="#ff3232" stroke-width="1"/>
<rect x="1367.0" y="152" width="1" height="14" fill="#ff3232"/>
<rect x="1365.0" y="164" width="5" height="1" fill="#ff3232"/>
<rect x="1374.0" y="165" width="1" height="5" fill="#54ffff"/>
<rect x="1374.0" y="173" width="1" height="3" fill="#54ffff"/>
<rect x="1372.0" y="170" width="5" height="3" fill="#54ffff"/>
<rect x="1380.0" y="167" width="1" height="4" fill="#ff3232"/>
<rect x="1378.5" y="154.5" width="4" height="12" fill="#000" stroke="#ff3232" stroke-width="1"/>
<rect x="1387.0" y="143" width="1" height="11" fill="#ff3232"/>
<rect x="1385.5" y="154.5" width="4" height="6" fill="#000" stroke="#ff3232" stroke-width="1"/>
<rect x="1393.0" y="141" width="1" height="1" fill="#54ffff"/>
<rect x="1393.0" y="154" width="1" height="11" fill="#54ffff"/>
<rect x="1391.0" y="142" width="5" height="12" fill="#54ffff"/>
<rect x="1400.0" y="143" width="1" height="4" fill="#ff3232"/>
<rect x="1400.0" y="153" width="1" height="10" fill="#ff3232"/>
<rect x="1398.5" y="147.5" width="4" height="5" fill="#000" stroke="#ff3232" stroke-width="1"/>
<rect x="1406.0" y="126" width="1" height="5" fill="#ff3232"/>
<rect x="1406.0" y="143" width="1" height="12" fill="#ff3232"/>
<rect x="1404.0" y="131" width="5" height="12" fill="#cc66cc"/>
<rect x="1413.0" y="132" width="1" height="4" fill="#ff3232"/>
<rect x="1413.0" y="145" width="1" height="6" fill="#ff3232"/>
<rect x="1411.5" y="136.5" width="4" height="8" fill="#000" stroke="#ff3232" stroke-width="1"/>
<rect x="1419.0" y="138" width="1" height="12" fill="#ff3232"/>
<rect x="1417.0" y="150" width="5" height="4" fill="#0000ff"/>
<rect x="1426.0" y="146" width="1" height="3" fill="#54ffff"/>
<rect x="1424.0" y="149" width="5" height="52" fill="#54ffff"/>
<rect x="1432.0" y="185" width="1" height="17" fill="#ff3232"/>
<rect x="1430.5" y="202.5" width="4" height="4" fill="#000" stroke="#ff3232" stroke-width="1"/>
<rect x="1439.0" y="170" width="1" height="7" fill="#54ffff"/>
<rect x="1439.0" y="183" width="1" height="5" fill="#54ffff"/>
<rect x="1437.0" y="177" width="5" height="6" fill="#54ffff"/>
<rect x="1445.0" y="176" width="1" height="7" fill="#ff3232"/>
<rect x="1443.5" y="183.5" width="4" height="4" fill="#000" stroke="#ff3232" stroke-width="1"/>
<rect x="1452.0" y="194" width="1" height="3" fill="#ff3232"/>
<rect x="1452.0" y="208" width="1" height="15" fill="#ff3232"/>
<rect x="1450.5" y="197.5" width="4" height="10" fill="#000" stroke="#ff3232" stroke-width="1"/>
<rect x="1458.0" y="180" width="1" height="4" fill="#ff3232"/>
<rect x="1456.5" y="175.5" width="4" height="4" fill="#000" stroke="#ff3232" stroke-width="1"/>
<rect x="1465.0" y="167" width="1" height="6" fill="#54ffff"/>
<rect x="1463.0" y="173" width="5" height="11" fill="#54ffff"/>
<rect x="1471.0" y="176" width="1" height="11" fill="#54ffff"/>
<rect x="1471.0" y="194" width="1" height="8" fill="#54ffff"/>
<rect x="1469.0" y="187" width="5" height="7" fill="#54ffff"/>
<rect x="1478.0" y="186" width="1" height="20" fill="#54ffff"/>
<rect x="1476.0" y="202" width="5" height="1" fill="#54ffff"/>
<rect x="1484.0" y="205" width="1" height="11" fill="#ff3232"/>
<rect x="1482.5" y="187.5" width="4" height="17" fill="#000" stroke="#ff3232" stroke-width="1"/>
<rect x="1489.0" y="186" width="5" height="24" fill="#54ffff"/>
<rect x="1497.0" y="203" width="1" height="6" fill="#ff3232"/>
<rect x="1495.5" y="191.5" width="4" height="11" fill="#000" stroke="#ff3232" stroke-width="1"/>
<rect x="1504.0" y="200" width="1" height="7" fill="#54ffff"/>
<rect x="1504.0" y="211" width="1" height="3" fill="#54ffff"/>
<rect x="1502.0" y="207" width="5" height="4" fill="#54ffff"/>
<rect x="1510.0" y="202" width="1" height="3" fill="#54ffff"/>
<rect x="1508.0" y="205" width="5" height="17" fill="#54ffff"/>
<rect x="1517.0" y="233" width="1" height="9" fill="#54ffff"/>
<rect x="1517.0" y="263" width="1" height="5" fill="#54ffff"/>
<rect x="1515.0" y="242" width="5" height="21" fill="#54ffff"/>
<path d="M7.5,485.5 h3 v5 h3 l-4.5,6 l-4.5,-6 h3z" fill="#000" stroke="#00ff00" stroke-width="1" shape-rendering="geometricPrecision"/>
<path d="M66.5,462.5 h3 v5 h3 l-4.5,6 l-4.5,-6 h3z" fill="#000" stroke="#00ff00" stroke-width="1" shape-rendering="geometricPrecision"/>
<path d="M144.5,456.5 h3 v5 h3 l-4.5,6 l-4.5,-6 h3z" fill="#000" stroke="#00ff00" stroke-width="1" shape-rendering="geometricPrecision"/>
<path d="M209.5,476.5 h3 v5 h3 l-4.5,6 l-4.5,-6 h3z" fill="#000" stroke="#00ff00" stroke-width="1" shape-rendering="geometricPrecision"/>
<path d="M280.5,473.5 h3 v5 h3 l-4.5,6 l-4.5,-6 h3z" fill="#000" stroke="#00ff00" stroke-width="1" shape-rendering="geometricPrecision"/>
<path d="M384.5,465.5 h3 v5 h3 l-4.5,6 l-4.5,-6 h3z" fill="#000" stroke="#00ff00" stroke-width="1" shape-rendering="geometricPrecision"/>
<path d="M521.5,431.5 h3 v5 h3 l-4.5,6 l-4.5,-6 h3z" fill="#000" stroke="#00ff00" stroke-width="1" shape-rendering="geometricPrecision"/>
<path d="M560.5,434.5 h3 v5 h3 l-4.5,6 l-4.5,-6 h3z" fill="#000" stroke="#00ff00" stroke-width="1" shape-rendering="geometricPrecision"/>
<path d="M644.5,279.5 h3 v5 h3 l-4.5,6 l-4.5,-6 h3z" fill="#000" stroke="#00ff00" stroke-width="1" shape-rendering="geometricPrecision"/>
<path d="M657.5,280.5 h3 v5 h3 l-4.5,6 l-4.5,-6 h3z" fill="#000" stroke="#00ff00" stroke-width="1" shape-rendering="geometricPrecision"/>
<path d="M754.5,250.5 h3 v5 h3 l-4.5,6 l-4.5,-6 h3z" fill="#000" stroke="#00ff00" stroke-width="1" shape-rendering="geometricPrecision"/>
<path d="M793.5,209.5 h3 v5 h3 l-4.5,6 l-4.5,-6 h3z" fill="#000" stroke="#00ff00" stroke-width="1" shape-rendering="geometricPrecision"/>
<path d="M813.5,188.5 h3 v5 h3 l-4.5,6 l-4.5,-6 h3z" fill="#000" stroke="#00ff00" stroke-width="1" shape-rendering="geometricPrecision"/>
<path d="M904.5,200.5 h3 v5 h3 l-4.5,6 l-4.5,-6 h3z" fill="#000" stroke="#00ff00" stroke-width="1" shape-rendering="geometricPrecision"/>
<path d="M962.5,252.5 h3 v5 h3 l-4.5,6 l-4.5,-6 h3z" fill="#000" stroke="#00ff00" stroke-width="1" shape-rendering="geometricPrecision"/>
<path d="M975.5,256.5 h3 v5 h3 l-4.5,6 l-4.5,-6 h3z" fill="#000" stroke="#00ff00" stroke-width="1" shape-rendering="geometricPrecision"/>
<path d="M1001.5,261.5 h3 v5 h3 l-4.5,6 l-4.5,-6 h3z" fill="#000" stroke="#00ff00" stroke-width="1" shape-rendering="geometricPrecision"/>
<path d="M1066.5,266.5 h3 v5 h3 l-4.5,6 l-4.5,-6 h3z" fill="#000" stroke="#00ff00" stroke-width="1" shape-rendering="geometricPrecision"/>
<path d="M1099.5,244.5 h3 v5 h3 l-4.5,6 l-4.5,-6 h3z" fill="#000" stroke="#00ff00" stroke-width="1" shape-rendering="geometricPrecision"/>
<path d="M1177.5,226.5 h3 v5 h3 l-4.5,6 l-4.5,-6 h3z" fill="#000" stroke="#00ff00" stroke-width="1" shape-rendering="geometricPrecision"/>
<path d="M1235.5,142.5 h3 v5 h3 l-4.5,6 l-4.5,-6 h3z" fill="#000" stroke="#00ff00" stroke-width="1" shape-rendering="geometricPrecision"/>
<path d="M1268.5,103.5 h3 v5 h3 l-4.5,6 l-4.5,-6 h3z" fill="#000" stroke="#00ff00" stroke-width="1" shape-rendering="geometricPrecision"/>
<path d="M1287.5,94.5 h3 v5 h3 l-4.5,6 l-4.5,-6 h3z" fill="#000" stroke="#00ff00" stroke-width="1" shape-rendering="geometricPrecision"/>
<path d="M1417.5,124.5 h3 v5 h3 l-4.5,6 l-4.5,-6 h3z" fill="#000" stroke="#00ff00" stroke-width="1" shape-rendering="geometricPrecision"/>
<path d="M1476.5,174.5 h3 v5 h3 l-4.5,6 l-4.5,-6 h3z" fill="#000" stroke="#00ff00" stroke-width="1" shape-rendering="geometricPrecision"/>
<path d="M1502.5,188.5 h3 v5 h3 l-4.5,6 l-4.5,-6 h3z" fill="#000" stroke="#00ff00" stroke-width="1" shape-rendering="geometricPrecision"/>
<path d="M29.0,504.5 l5,6 h-3 v5 h-4 v-5 h-3z" fill="#ff0000" shape-rendering="geometricPrecision"/>
<path d="M120.0,480.5 l5,6 h-3 v5 h-4 v-5 h-3z" fill="#ff0000" shape-rendering="geometricPrecision"/>
<path d="M191.0,487.5 l5,6 h-3 v5 h-4 v-5 h-3z" fill="#ff0000" shape-rendering="geometricPrecision"/>
<path d="M237.0,504.5 l5,6 h-3 v5 h-4 v-5 h-3z" fill="#ff0000" shape-rendering="geometricPrecision"/>
<path d="M321.0,508.5 l5,6 h-3 v5 h-4 v-5 h-3z" fill="#ff0000" shape-rendering="geometricPrecision"/>
<path d="M432.0,491.5 l5,6 h-3 v5 h-4 v-5 h-3z" fill="#ff0000" shape-rendering="geometricPrecision"/>
<path d="M555.0,450.5 l5,6 h-3 v5 h-4 v-5 h-3z" fill="#ff0000" shape-rendering="geometricPrecision"/>
<path d="M575.0,453.5 l5,6 h-3 v5 h-4 v-5 h-3z" fill="#ff0000" shape-rendering="geometricPrecision"/>
<path d="M653.0,324.5 l5,6 h-3 v5 h-4 v-5 h-3z" fill="#ff0000" shape-rendering="geometricPrecision"/>
<path d="M717.0,361.5 l5,6 h-3 v5 h-4 v-5 h-3z" fill="#ff0000" shape-rendering="geometricPrecision"/>
<path d="M776.0,260.5 l5,6 h-3 v5 h-4 v-5 h-3z" fill="#ff0000" shape-rendering="geometricPrecision"/>
<path d="M808.0,199.5 l5,6 h-3 v5 h-4 v-5 h-3z" fill="#ff0000" shape-rendering="geometricPrecision"/>
<path d="M860.0,280.5 l5,6 h-3 v5 h-4 v-5 h-3z" fill="#ff0000" shape-rendering="geometricPrecision"/>
<path d="M938.0,268.5 l5,6 h-3 v5 h-4 v-5 h-3z" fill="#ff0000" shape-rendering="geometricPrecision"/>
<path d="M971.0,275.5 l5,6 h-3 v5 h-4 v-5 h-3z" fill="#ff0000" shape-rendering="geometricPrecision"/>
<path d="M997.0,291.5 l5,6 h-3 v5 h-4 v-5 h-3z" fill="#ff0000" shape-rendering="geometricPrecision"/>
<path d="M1029.0,319.5 l5,6 h-3 v5 h-4 v-5 h-3z" fill="#ff0000" shape-rendering="geometricPrecision"/>
<path d="M1081.0,280.5 l5,6 h-3 v5 h-4 v-5 h-3z" fill="#ff0000" shape-rendering="geometricPrecision"/>
<path d="M1146.0,281.5 l5,6 h-3 v5 h-4 v-5 h-3z" fill="#ff0000" shape-rendering="geometricPrecision"/>
<path d="M1198.0,240.5 l5,6 h-3 v5 h-4 v-5 h-3z" fill="#ff0000" shape-rendering="geometricPrecision"/>
<path d="M1257.0,149.5 l5,6 h-3 v5 h-4 v-5 h-3z" fill="#ff0000" shape-rendering="geometricPrecision"/>
<path d="M1276.0,139.5 l5,6 h-3 v5 h-4 v-5 h-3z" fill="#ff0000" shape-rendering="geometricPrecision"/>
<path d="M1361.0,182.5 l5,6 h-3 v5 h-4 v-5 h-3z" fill="#ff0000" shape-rendering="geometricPrecision"/>
<path d="M1458.0,186.5 l5,6 h-3 v5 h-4 v-5 h-3z" fill="#ff0000" shape-rendering="geometricPrecision"/>
<path d="M1497.0,210.5 l5,6 h-3 v5 h-4 v-5 h-3z" fill="#ff0000" shape-rendering="geometricPrecision"/>
<rect x="1512" y="223" width="28" height="10.5" fill="#808080"/>
<path d="M1535.3,263.5 L1540,259.5 L1540,267.5z" fill="#808080"/>
<path d="M9.5,547.5 h12 M9.5,547.5 l3,-3 M9.5,547.5 l3,3" stroke="#c0c0c0" fill="none" shape-rendering="geometricPrecision"/>
<path d="M1313.5,83.5 H1309.5 V87.5 M1309.5,83.5 L1314,85.5 H1317 L1321,87.5" stroke="#c0c0c0" fill="none" shape-rendering="geometricPrecision"/>
<path d="M0.0,689.2 L12.1,701.3 L24.2,715.4 L40.4,729.6 L52.5,735.6 L68.6,742.5 L88.8,747.7 L113.0,753.0 L137.3,755.0 L161.5,755.0 L181.7,757.8 L201.9,760.6 L226.1,768.7 L250.3,778.0 L274.5,784.9 L298.7,788.9 L323.0,792.9 L347.2,795.4 L363.3,788.9 L379.5,780.8 L395.6,770.7 L411.8,763.1 L423.9,760.6 L440.0,761.9 L456.2,765.1 L472.3,767.1 L484.5,765.9 L496.6,760.6 L500.0,757.8 L524.2,737.6 L548.4,719.5 L572.7,703.3 L596.9,685.2 L621.1,665.0 L645.3,650.8 L665.5,640.7 L681.7,635.5 L697.8,635.9 L718.0,638.7 L734.2,637.5 L750.3,634.7 L770.5,628.6 L790.7,621.4 L806.8,616.5 L823.0,613.7 L839.1,614.5 L855.3,619.7 L875.5,626.6 L895.6,630.6 L911.8,631.9 L927.9,636.7 L944.1,642.0 L960.2,646.8 L976.4,654.9 L992.5,662.9 L1000.0,666.9 L1016.1,685.1 L1032.3,701.2 L1048.4,715.4 L1068.6,728.3 L1088.8,737.6 L1109.0,744.8 L1129.1,755.7 L1149.3,767.8 L1169.5,773.9 L1185.6,776.7 L1197.7,776.7 L1209.8,769.8 L1226.0,755.7 L1242.1,739.6 L1258.3,721.4 L1274.4,705.3 L1290.6,689.1 L1306.7,677.0 L1322.8,666.9 L1337.0,663.7 L1351.1,664.1 L1367.2,666.9 L1383.4,669.0 L1403.6,670.2 L1419.7,669.0 L1435.8,675.0 L1452.0,683.1 L1468.1,689.1 L1484.3,699.2 L1500.4,707.3 L1510.5,713.3 L1517.4,719.4" fill="none" stroke="#ffff00" stroke-width="1" shape-rendering="geometricPrecision"/>
<path d="M0.0,707.4 L6.1,715.4 L12.1,725.5 L20.2,739.7 L28.3,744.9 L40.4,746.9 L52.5,748.9 L68.6,751.8 L88.8,753.8 L113.0,757.8 L133.2,755.8 L153.4,755.8 L169.6,759.8 L189.7,763.9 L209.9,771.9 L230.1,781.2 L254.3,789.3 L274.5,788.9 L290.7,792.1 L314.9,798.2 L335.1,797.0 L345.2,793.3 L355.3,784.1 L367.4,771.9 L383.5,759.8 L403.7,753.0 L411.8,753.0 L423.9,760.6 L440.0,765.9 L452.2,769.1 L468.3,769.1 L482.4,765.9 L492.5,757.8 L500.0,743.7 L516.1,721.5 L540.4,709.4 L556.5,695.2 L572.7,687.2 L588.8,673.0 L609.0,658.9 L629.2,644.8 L645.3,640.7 L661.5,630.6 L673.6,626.6 L685.7,632.7 L697.8,638.7 L711.9,644.0 L720.0,642.8 L730.1,638.7 L742.2,632.7 L758.4,626.6 L778.6,616.5 L794.7,610.5 L808.8,607.6 L823.0,609.3 L835.1,616.5 L851.2,626.6 L873.4,635.9 L887.6,634.7 L903.7,633.9 L919.9,638.7 L936.0,646.8 L952.2,652.9 L968.3,660.9 L984.5,671.0 L1000.0,685.1 L1012.1,701.2 L1024.2,717.4 L1036.3,727.5 L1052.5,735.5 L1068.6,744.8 L1080.7,747.7 L1092.8,747.7 L1106.9,752.9 L1121.1,765.8 L1137.2,777.9 L1153.3,781.1 L1169.5,780.7 L1185.6,779.1 L1194.9,777.9 L1205.8,757.7 L1217.9,737.6 L1230.0,723.4 L1242.1,713.3 L1254.2,699.2 L1270.4,681.1 L1286.5,669.0 L1302.7,658.9 L1316.8,653.6 L1330.9,656.0 L1347.1,662.9 L1357.1,666.9 L1375.3,672.2 L1393.5,672.2 L1407.6,671.0 L1419.7,669.8 L1429.8,679.0 L1443.9,689.1 L1464.1,701.2 L1484.3,715.4 L1500.4,723.4 L1510.5,731.5 L1517.4,743.6" fill="none" stroke="#ffffff" stroke-width="1" shape-rendering="geometricPrecision"/>
<path d="M0.0,729.6 L4.0,749.7 L12.1,778.0 L22.2,794.2 L29.1,799.0 L40.4,786.1 L60.6,774.0 L86.8,763.9 L107.0,770.7 L121.1,767.9 L133.2,753.8 L139.3,750.6 L147.4,753.8 L161.5,757.0 L177.6,765.9 L193.8,774.0 L214.0,790.1 L230.1,803.4 L242.2,807.1 L254.3,809.1 L266.5,802.2 L276.5,796.2 L290.7,799.0 L302.8,805.5 L314.9,810.3 L331.0,802.2 L343.2,794.2 L351.2,778.0 L359.3,763.9 L369.4,749.7 L379.5,730.4 L393.6,726.3 L405.7,726.3 L423.9,760.6 L440.0,774.0 L452.2,780.0 L468.3,771.9 L482.4,763.9 L490.5,745.7 L498.6,717.4 L500.0,713.4 L506.1,689.2 L514.1,677.1 L524.2,675.1 L532.3,679.1 L544.4,669.0 L554.5,656.9 L560.6,658.9 L570.6,648.8 L582.8,635.5 L586.8,637.5 L596.9,626.6 L609.0,620.6 L615.1,614.5 L627.2,609.3 L643.3,611.3 L655.4,604.4 L667.5,600.4 L677.6,607.6 L687.7,628.6 L697.8,642.8 L711.9,656.1 L720.0,649.6 L730.1,636.7 L742.2,618.5 L752.3,616.5 L766.5,606.4 L782.6,597.1 L790.7,595.5 L804.8,589.1 L808.8,590.3 L818.9,600.4 L827.0,612.5 L835.1,620.6 L843.2,632.7 L855.3,646.8 L873.4,656.1 L887.6,644.8 L899.7,638.7 L907.8,640.7 L919.9,652.9 L932.0,665.0 L944.1,667.0 L956.2,671.0 L970.3,681.1 L984.5,697.3 L996.6,709.4 L1000.0,717.4 L1008.1,741.6 L1020.2,763.8 L1032.3,773.9 L1042.4,777.9 L1048.4,773.9 L1060.5,777.9 L1074.7,777.9 L1084.7,770.7 L1094.8,767.8 L1104.9,771.9 L1113.0,784.0 L1121.1,796.1 L1129.1,800.9 L1141.2,813.0 L1153.3,807.0 L1165.5,796.1 L1173.5,792.0 L1185.6,785.2 L1194.9,777.9 L1201.8,749.7 L1209.8,721.4 L1219.9,689.1 L1230.0,669.0 L1238.1,664.9 L1250.2,650.8 L1262.3,636.7 L1270.4,632.6 L1278.5,624.6 L1288.5,621.7 L1296.6,624.6 L1308.7,616.5 L1322.8,622.6 L1332.9,638.7 L1347.1,660.9 L1357.1,675.0 L1375.3,681.9 L1393.5,677.8 L1403.6,673.0 L1413.6,666.9 L1421.7,671.0 L1429.8,695.2 L1439.9,705.3 L1452.0,717.4 L1462.1,720.2 L1474.2,731.5 L1484.3,743.6 L1496.4,751.7 L1504.4,761.8 L1512.5,777.9 L1517.4,790.8" fill="none" stroke="#ff00ff" stroke-width="1" shape-rendering="geometricPrecision"/>
<path d="M0.0,705.1 L4.0,705.1 L6.0,776.3 L16.0,776.3 L22.0,705.1 L484.5,705.1 L490.5,658.2 L497.4,635.0 L503.7,635.0 L510.3,705.1 L523.4,705.1 L529.1,635.0 L536.3,705.1 L574.7,705.1 L580.7,658.2 L588.0,658.2 L594.1,705.1 L621.1,705.1 L627.2,635.0 L633.2,635.0 L640.1,705.1 L679.7,705.1 L685.7,635.0 L692.6,705.1 L769.7,705.1 L775.7,658.2 L782.6,658.2 L789.5,705.1 L808.8,705.1 L814.9,635.0 L821.8,705.1 L1004.3,705.1 L1009.5,776.3 L1016.3,776.3 L1023.0,705.1 L1153.3,705.1 L1159.4,658.2 L1166.3,705.1 L1185.6,705.1 L1191.7,635.0 L1197.7,657.0 L1204.6,635.0 L1211.1,635.0 L1217.9,705.1 L1250.2,705.1 L1257.1,658.2 L1263.1,658.2 L1269.6,705.1 L1289.8,705.1 L1295.8,635.0 L1302.7,705.1 L1308.7,705.1 L1314.8,635.0 L1321.6,705.1 L1510.5,705.1 L1517.4,776.3" fill="none" stroke="#ffffff" stroke-width="2" stroke-linejoin="miter"/>
<path d="M133.2,752.9 l3,4 h-6z" fill="#e03030"/><circle shape-rendering="geometricPrecision" cx="133.2" cy="761.9" r="6.3" fill="#f03a3a"/>
<text x="133.2" y="765.5" font-size="10" font-weight="bold" fill="#fff" text-anchor="middle" font-family="Liberation Sans, sans-serif">R</text>
<path d="M146.5,769.6 l3,-4 h-6z" fill="#00a040"/><circle shape-rendering="geometricPrecision" cx="146.5" cy="760.6" r="6.3" fill="#10b050"/>
<text x="146.5" y="764.2" font-size="10" font-weight="bold" fill="#fff" text-anchor="middle" font-family="Liberation Sans, sans-serif">G</text>
<path d="M347.2,794 l3,4 h-6z" fill="#e03030"/><circle shape-rendering="geometricPrecision" cx="347.2" cy="803" r="6.3" fill="#f03a3a"/>
<text x="347.2" y="806.6" font-size="10" font-weight="bold" fill="#fff" text-anchor="middle" font-family="Liberation Sans, sans-serif">R</text>
<path d="M425.1,777.7 l3,-4 h-6z" fill="#00a040"/><circle shape-rendering="geometricPrecision" cx="425.1" cy="768.7" r="6.3" fill="#10b050"/>
<text x="425.1" y="772.3000000000001" font-size="10" font-weight="bold" fill="#fff" text-anchor="middle" font-family="Liberation Sans, sans-serif">G</text>
<path d="M484.5,766.2 l3,4 h-6z" fill="#e03030"/><circle shape-rendering="geometricPrecision" cx="484.5" cy="775.2" r="6.3" fill="#f03a3a"/>
<text x="484.5" y="778.8000000000001" font-size="10" font-weight="bold" fill="#fff" text-anchor="middle" font-family="Liberation Sans, sans-serif">R</text>
<path d="M697.8,655.8 l3,-4 h-6z" fill="#00a040"/><circle shape-rendering="geometricPrecision" cx="697.8" cy="646.8" r="6.3" fill="#10b050"/>
<text x="697.8" y="650.4" font-size="10" font-weight="bold" fill="#fff" text-anchor="middle" font-family="Liberation Sans, sans-serif">G</text>
<path d="M730.1,639 l3,4 h-6z" fill="#e03030"/><circle shape-rendering="geometricPrecision" cx="730.1" cy="648" r="6.3" fill="#f03a3a"/>
<text x="730.1" y="651.6" font-size="10" font-weight="bold" fill="#fff" text-anchor="middle" font-family="Liberation Sans, sans-serif">R</text>
<path d="M834.3,634.8 l3,-4 h-6z" fill="#00a040"/><circle shape-rendering="geometricPrecision" cx="834.3" cy="625.8" r="6.3" fill="#10b050"/>
<text x="834.3" y="629.4" font-size="10" font-weight="bold" fill="#fff" text-anchor="middle" font-family="Liberation Sans, sans-serif">G</text>
<path d="M1197.7,775 l3,4 h-6z" fill="#e03030"/><circle shape-rendering="geometricPrecision" cx="1197.7" cy="784" r="6.3" fill="#f03a3a"/>
<text x="1197.7" y="787.6" font-size="10" font-weight="bold" fill="#fff" text-anchor="middle" font-family="Liberation Sans, sans-serif">R</text>
<path d="M1348.3,678.8 l3,-4 h-6z" fill="#00a040"/><circle shape-rendering="geometricPrecision" cx="1348.3" cy="669.8" r="6.3" fill="#10b050"/>
<text x="1348.3" y="673.4" font-size="10" font-weight="bold" fill="#fff" text-anchor="middle" font-family="Liberation Sans, sans-serif">G</text>
<path d="M1412.8,670 l3,4 h-6z" fill="#e03030"/><circle shape-rendering="geometricPrecision" cx="1412.8" cy="679" r="6.3" fill="#f03a3a"/>
<text x="1412.8" y="682.6" font-size="10" font-weight="bold" fill="#fff" text-anchor="middle" font-family="Liberation Sans, sans-serif">R</text>
<path d="M1426.6,701 l3,-4 h-6z" fill="#00a040"/><circle shape-rendering="geometricPrecision" cx="1426.6" cy="692" r="6.3" fill="#10b050"/>
<text x="1426.6" y="695.6" font-size="10" font-weight="bold" fill="#fff" text-anchor="middle" font-family="Liberation Sans, sans-serif">G</text>
<rect x="1542" y="747" width="48" height="17" fill="#c00000"/><rect x="1542" y="748" width="48" height="15" fill="#000080"/>
<rect x="474" y="924" width="79" height="15" fill="#000080"/><rect x="474" y="924" width="1" height="15" fill="#c00000"/><rect x="552" y="924" width="1" height="15" fill="#c00000"/>
<path d="M1512.5,39 l5.5,5.5 l-5.5,5.5 l-5.5,-5.5z" fill="none" stroke="#606060" stroke-width="1" shape-rendering="geometricPrecision"/>
<rect x="1525.5" y="39.5" width="11" height="10" rx="2" fill="none" stroke="#707070" stroke-width="1" shape-rendering="geometricPrecision"/><rect x="1532" y="41.5" width="2.5" height="6" fill="#707070"/>
<path d="M31,37.5 l5,5.5 h-3 v5.5 h-4 v-5.5 h-3z" fill="#ff0000" shape-rendering="geometricPrecision"/>
<circle shape-rendering="geometricPrecision" cx="46.9" cy="43.9" r="6" fill="#808080"/><path d="M43.9,42.7 l3,3 l3,-3" fill="none" stroke="#303030" stroke-width="1" shape-rendering="geometricPrecision"/></svg>
<div id="txt"><span class="t m14" style="left:-11.5px;top:-9px;">终端</span><span class="t m14" style="left:44.5px;top:-9px;">行情</span><span class="t m14" style="left:100.5px;top:-9px;">市场</span><span class="t m14" style="left:153.5px;top:-9px;">资讯</span><span class="t m14" style="left:207.5px;top:-9px;">数据</span><span class="t m14" style="left:261px;top:-9px;">发现</span><span class="t m14" style="left:315px;top:-9px;">问小达</span><span class="t m14" style="left:382px;top:-9px;">财富圈</span><span class="t m14" style="left:449px;top:-9px;">交易</span><span class="t m12r" style="left:826px;top:-6px;">证券交易已锁定</span><span class="t m12r" style="left:917px;top:-6px;">半导体</span><span class="t m12" style="left:1286px;top:-5.5px;">功能</span><span class="t m12" style="left:1325px;top:-5.5px;">版面</span><span class="t m12" style="left:1363px;top:-5.5px;">公式</span><span class="t m12" style="left:1401px;top:-5.5px;">选项</span><span class="t m12" style="left:1544.5px;top:-4.5px;font-size:12.5px;color:#606060">181****9948</span><span class="t m12" style="left:1646px;top:-5px;color:#606060">16:19:06 周一</span><span class="t p12" style="left:9.5px;top:17px;">5分钟</span><span class="t p12" style="left:48.5px;top:17px;">15分钟</span><span class="t p12" style="left:94.5px;top:17px;">30分钟</span><span class="t p12" style="left:140.5px;top:17px;">60分钟</span><span class="t p12" style="left:186px;top:17px;">分钟*120</span><span class="t p12" style="left:245.5px;top:17px;color:#54ffff">日线</span><span class="t p12" style="left:279px;top:17px;">周线</span><span class="t p12" style="left:312.5px;top:17px;">月线</span><span class="t p12" style="left:346.5px;top:17px;">45日线</span><span class="t p12" style="left:392.5px;top:17px;">10分钟</span><span class="t p12" style="left:439px;top:17px;">季线</span><span class="t p12" style="left:472.5px;top:17px;">年线</span><span class="t p12" style="left:509px;top:17px;">5秒</span><span class="t p12" style="left:539.5px;top:17px;">多周期</span><span class="t p12" style="left:583.5px;top:17px;">更多&gt;</span><span class="t p12" style="left:1276px;top:17px;width:34px;text-align:center">复权</span><span class="t p12" style="left:1311px;top:17px;width:34px;text-align:center">叠加</span><span class="t p12" style="left:1345px;top:17px;width:34px;text-align:center">多股</span><span class="t p12" style="left:1380px;top:17px;width:34px;text-align:center">统计</span><span class="t p12" style="left:1415px;top:17px;width:34px;text-align:center">画线</span><span class="t p12" style="left:1450px;top:17px;width:34px;text-align:center">F10</span><span class="t p12" style="left:1485px;top:17px;width:34px;text-align:center">标记</span><span class="t p12" style="left:1520px;top:17px;width:34px;text-align:center">-自选</span><span class="t p12" style="left:1555px;top:17px;width:36px;text-align:center">返回</span><span class="t p12" style="left:-7px;top:36.3px;">复权)</span><span class="t p12" style="left:56.5px;top:36.3px;">缠绕</span><span class="t p12" style="left:86px;top:36.3px;">卖出: 4681.90</span><span class="t p12" style="left:166px;top:36.3px;">买入: 3954.00</span><span class="t p12" style="left:246px;top:36.3px;color:#0000ff">: 4870.35</span><span class="t p12" style="left:301.5px;top:36.3px;color:#0000ff">AY: 0.00</span><span class="t p12" style="left:350.5px;top:36.3px;color:#ff00ff">反转红: -</span><span class="t p12" style="left:402px;top:36.3px;color:#00ff00">反转绿: 4432.20</span><span class="t p12" style="left:-1px;top:571px;color:#0000ff">0.00</span><span class="t p12" style="left:27px;top:571px;">预警系统: 50.00</span><span class="t p12" style="left:117px;top:571px;">KK60K: 56.81</span><span class="t p12" style="left:197px;top:571px;color:#ffff00">DD60K: 61.86</span><span class="t p12" style="left:278.5px;top:571px;color:#ff00ff">JJ60K: 46.71</span><span class="t ax" style="left:1541px;width:45px;top:72px">5000</span><span class="t ax" style="left:1541px;width:45px;top:109px">4800</span><span class="t ax" style="left:1541px;width:45px;top:146px">4600</span><span class="t ax" style="left:1541px;width:45px;top:183px">4400</span><span class="t ax" style="left:1541px;width:45px;top:219px">4200</span><span class="t ax" style="left:1541px;width:45px;top:256px">4000</span><span class="t ax" style="left:1541px;width:45px;top:293px">3800</span><span class="t ax" style="left:1541px;width:45px;top:330px">3600</span><span class="t ax" style="left:1541px;width:45px;top:367px">3400</span><span class="t ax" style="left:1541px;width:45px;top:404px">3200</span><span class="t ax" style="left:1541px;width:45px;top:441px">3000</span><span class="t ax" style="left:1541px;width:45px;top:478px">2800</span><span class="t ax" style="left:1541px;width:45px;top:515px">2600</span><span class="t ax" style="left:1541px;width:46px;top:581px">90.00</span><span class="t ax" style="left:1541px;width:46px;top:628px">80.00</span><span class="t ax" style="left:1541px;width:46px;top:675px">70.00</span><span class="t ax" style="left:1541px;width:46px;top:722px">60.00</span><span class="t ax" style="left:1541px;width:46px;top:769px">50.00</span><span class="t ax" style="left:1541px;width:46px;top:815px">40.00</span><span class="t ax" style="left:1541px;width:46px;top:862px">30.00</span><span class="t ax2" style="left:127.3px;top:925px;">5</span><span class="t ax2" style="left:252.3px;top:925px;">6</span><span class="t ax2" style="left:382.3px;top:925px;">7</span><span class="t ax2" style="left:667.3px;top:925px;">9</span><span class="t ax2" style="left:809.3px;top:925px;">10</span><span class="t ax2" style="left:920.3px;top:925px;">11</span><span class="t ax2" style="left:1050.3px;top:925px;">12</span><span class="t ax2" style="left:1199.3px;top:925px;">1</span><span class="t ax2" style="left:1329.3px;top:925px;">2</span><span class="t ax2" style="left:1420.3px;top:925px;">3</span><span class="t p12" style="left:476px;top:924.5px;color:#fff">2025/07/22/二</span><span class="t p12" style="left:1552.5px;top:924px;">日线</span><span class="t p12" style="left:1543px;top:748px;color:#d0d0d0">52.7</span><div style="position:absolute;left:0;top:55px;width:1540px;height:514px;overflow:hidden"><span class="t num" style="left:313.6px;top:419.8px;width:20px;">1</span><span class="t num" style="left:321.5px;top:414.8px;width:20px;">2</span><span class="t num" style="left:327.8px;top:418.4px;width:20px;">3</span><span class="t num" style="left:334.3px;top:416.6px;width:20px;">4</span><span class="t num" style="left:340.6px;top:408.7px;width:20px;">5</span><span class="t num" style="left:347.5px;top:399.1px;width:20px;">6</span><span class="t num" style="left:353.7px;top:395.9px;width:20px;">7</span><span class="t num" style="left:360.6px;top:397.3px;width:20px;">8</span><span class="t num" style="left:366.9px;top:393.1px;width:20px;color:#ffff00">9</span><span class="t num" style="left:437.8px;top:403.7px;width:20px;">1</span><span class="t num" style="left:444.7px;top:397.2px;width:20px;">2</span><span class="t num" style="left:451.7px;top:402.3px;width:20px;">3</span><span class="t num" style="left:457.9px;top:395.4px;width:20px;">4</span><span class="t num" style="left:464.1px;top:398.8px;width:20px;">5</span><span class="t num" style="left:470.3px;top:394.0px;width:20px;">6</span><span class="t num" style="left:476.9px;top:389.4px;width:20px;">7</span><span class="t num" style="left:483.5px;top:386.1px;width:20px;">8</span><span class="t num" style="left:490.4px;top:372.1px;width:20px;color:#ffff00">9</span><span class="t num" style="left:542.0px;top:368.0px;width:20px;">1</span><span class="t num" style="left:548.5px;top:356.2px;width:20px;">2</span><span class="t num" style="left:555.5px;top:367.0px;width:20px;">3</span><span class="t num" style="left:561.3px;top:367.0px;width:20px;">4</span><span class="t num" style="left:568.2px;top:349.0px;width:20px;">5</span><span class="t num" style="left:574.1px;top:346.8px;width:20px;">6</span><span class="t num" style="left:581.4px;top:323.6px;width:20px;">7</span><span class="t num" style="left:587.1px;top:330.1px;width:20px;">8</span><span class="t num" style="left:594.4px;top:312.9px;width:20px;color:#ffff00">9</span><span class="t num" style="left:703.9px;top:265.9px;width:20px;">1</span><span class="t num" style="left:711.7px;top:230.6px;width:20px;">2</span><span class="t num" style="left:717.5px;top:207.1px;width:20px;">3</span><span class="t num" style="left:723.4px;top:194.2px;width:20px;">4</span><span class="t num" style="left:730.1px;top:198.1px;width:20px;">5</span><span class="t num" style="left:736.6px;top:191.3px;width:20px;">6</span><span class="t num" style="left:743.4px;top:156.2px;width:20px;">7</span><span class="t num" style="left:749.7px;top:178.0px;width:20px;">8</span><span class="t num" style="left:756.6px;top:163.1px;width:20px;color:#ffff00">9</span><span class="t num" style="left:1237.5px;top:67.5px;width:20px;">1</span><span class="t num" style="left:1242.9px;top:67.5px;width:20px;">2</span><span class="t num" style="left:1250.7px;top:31.7px;width:20px;">3</span><span class="t num" style="left:1256.3px;top:33.4px;width:20px;">4</span><span class="t num" style="left:1263.4px;top:27.1px;width:20px;">5</span><span class="t num" style="left:1269.4px;top:11.2px;width:20px;">6</span><span class="t num" style="left:1276.2px;top:-4.7px;width:20px;">7</span><span class="t num" style="left:1282.5px;top:17.2px;width:20px;">8</span><span class="t num" style="left:1289.3px;top:10.0px;width:20px;color:#ffff00">9</span><span class="t num" style="left:1359.7px;top:62.0px;width:20px;">1</span><span class="t num" style="left:1367.7px;top:77.2px;width:20px;">2</span><span class="t num" style="left:1373.7px;top:65.2px;width:20px;">3</span><span class="t num" style="left:1380.2px;top:53.8px;width:20px;">4</span><span class="t num" style="left:1386.0px;top:53.8px;width:20px;">5</span><span class="t num" style="left:1392.6px;top:53.8px;width:20px;">6</span><span class="t num" style="left:1399.1px;top:35.1px;width:20px;">7</span><span class="t num" style="left:1406.2px;top:43.5px;width:20px;">8</span><span class="t num" style="left:1412.0px;top:48.0px;width:20px;color:#ffff00">9</span></div><span class="t p12" style="left:22.5px;top:541px;color:#c0c0c0;font-size:12.5px">2460.87</span><span class="t p12" style="left:1323px;top:80.5px;color:#c0c0c0;font-size:12.5px">4980.28</span><span class="t p12" style="left:1515px;top:188.5px;color:#fff;width:25px;overflow:hidden">10.83</span><span class="t p12" style="left:1515px;top:208px;color:#c0c0c0;width:25px;overflow:hidden">4221</span><span class="t p12" style="left:627px;top:745px;color:#00e000">庄家出货!</span><span class="t hd" style="left:1627.5px;top:20.5px;">880491</span><span class="t lab" style="left:1679px;top:18px;color:#00ffff">半导体</span><span class="t lab" style="left:1592.5px;top:45px;">Ａ股成交</span><span class="t val y" style="left:1749.9px;top:46.5px;">24299.37亿</span><span class="t lab" style="left:1592.5px;top:64.1px;">Ｂ股成交</span><span class="t val y" style="left:1781.9px;top:65.6px;">3.88亿</span><span class="t lab" style="left:1592.5px;top:83.19999999999999px;">国债成交</span><span class="t val y" style="left:1749.9px;top:84.69999999999999px;">26168.44亿</span><span class="t lab" style="left:1592.5px;top:102.29999999999998px;">基金成交</span><span class="t val y" style="left:1758.2px;top:103.79999999999998px;">6027.10亿</span><span class="t lab" style="left:1594px;top:122.6px;">最新指数</span><span class="t val g" style="left:1774.5px;top:124.6px;">3999.22</span><span class="t lab" style="left:1594px;top:141.7px;">今日开盘</span><span class="t val g" style="left:1774.5px;top:143.7px;">4116.04</span><span class="t lab" style="left:1594px;top:160.79999999999998px;">昨日收盘</span><span class="t val w" style="left:1774.5px;top:162.79999999999998px;">4221.58</span><span class="t lab" style="left:1594px;top:179.89999999999998px;">指数涨跌</span><span class="t val g" style="left:1777.1px;top:181.89999999999998px;">-222.36</span><span class="t lab" style="left:1594px;top:198.99999999999997px;">指数涨幅</span><span class="t val g" style="left:1782.2px;top:200.99999999999997px;">-5.27%</span><span class="t lab" style="left:1594px;top:218.09999999999997px;">平均涨幅</span><span class="t val g" style="left:1782.2px;top:220.09999999999997px;">-5.79%</span><span class="t lab" style="left:1594px;top:237.19999999999996px;">指数换手</span><span class="t val s" style="left:1787.1px;top:239.19999999999996px;">3.44%</span><span class="t lab" style="left:1594px;top:256.29999999999995px;">指数振幅</span><span class="t val s" style="left:1740.0px;top:258.29999999999995px;">181.02/4.29%</span><span class="t lab" style="left:1594px;top:275.4px;">总成交额</span><span class="t val y" style="left:1758.6px;top:277.4px;">1776.50亿</span><span class="t lab" style="left:1594px;top:294.5px;">总成交量</span><span class="t val y" style="left:1766.2px;top:296.5px;">3349.7万</span><span class="t lab" style="left:1594px;top:313.6px;">最高指数</span><span class="t val g" style="left:1774.5px;top:315.6px;">4157.58</span><span class="t lab" style="left:1594px;top:332.70000000000005px;">最低指数</span><span class="t val g" style="left:1774.5px;top:334.70000000000005px;">3976.56</span><span class="t lab" style="left:1594px;top:351.80000000000007px;">指数量比</span><span class="t val r" style="left:1799.5px;top:353.80000000000007px;">1.13</span><span class="t lab" style="left:1594px;top:371px;">板指类型</span><span class="t t13" style="left:1711px;top:374px;">行业 加权 成份股</span><span class="t lab" style="left:1594px;top:393px;">涨家.涨停</span><span class="t val r" style="left:1688.5px;top:395px;">6/0</span><span class="t lab" style="left:1712.5px;top:393px;">跌家.跌停</span><span class="t val g" style="left:1791px;top:395px;">186/4</span><span class="t val s" style="left:1593.5px;top:415.3px;">14:55</span><span class="t val g" style="left:1674.5px;top:415.3px;">3994.70</span><span class="t val y" style="left:1777px;top:415.3px;">5233万</span><span class="t val s" style="left:1593.5px;top:433.3px;">14:55</span><span class="t val g" style="left:1674.5px;top:433.3px;">3994.26</span><span class="t val y" style="left:1777px;top:433.3px;">4378万</span><span class="t val s" style="left:1593.5px;top:451.3px;">14:55</span><span class="t val g" style="left:1674.5px;top:451.3px;">3994.81</span><span class="t val y" style="left:1777px;top:451.3px;">4592万</span><span class="t val s" style="left:1593.5px;top:469.3px;">14:55</span><span class="t val g" style="left:1674.5px;top:469.3px;">3995.08</span><span class="t val y" style="left:1777px;top:469.3px;">4049万</span><span class="t val s" style="left:1593.5px;top:487.3px;">14:55</span><span class="t val g" style="left:1674.5px;top:487.3px;">3995.48</span><span class="t val y" style="left:1777px;top:487.3px;">4063万</span><span class="t val s" style="left:1593.5px;top:505.3px;">14:55</span><span class="t val g" style="left:1674.5px;top:505.3px;">3996.19</span><span class="t val y" style="left:1777px;top:505.3px;">4141万</span><span class="t val s" style="left:1593.5px;top:523.3px;">14:55</span><span class="t val g" style="left:1674.5px;top:523.3px;">3995.81</span><span class="t val y" style="left:1777px;top:523.3px;">4526万</span><span class="t val s" style="left:1593.5px;top:541.3px;">14:55</span><span class="t val g" style="left:1674.5px;top:541.3px;">3996.35</span><span class="t val y" style="left:1777px;top:541.3px;">6062万</span><span class="t val s" style="left:1593.5px;top:559.3px;">14:56</span><span class="t val g" style="left:1674.5px;top:559.3px;">3996.20</span><span class="t val y" style="left:1777px;top:559.3px;">5450万</span><span class="t val s" style="left:1593.5px;top:577.3px;">14:56</span><span class="t val g" style="left:1674.5px;top:577.3px;">3996.70</span><span class="t val y" style="left:1777px;top:577.3px;">6752万</span><span class="t val s" style="left:1593.5px;top:595.3px;">14:56</span><span class="t val g" style="left:1674.5px;top:595.3px;">3997.15</span><span class="t val y" style="left:1777px;top:595.3px;">6123万</span><span class="t val s" style="left:1593.5px;top:613.3px;">14:56</span><span class="t val g" style="left:1674.5px;top:613.3px;">3997.58</span><span class="t val y" style="left:1777px;top:613.3px;">4666万</span><span class="t val s" style="left:1593.5px;top:631.3px;">14:56</span><span class="t val g" style="left:1674.5px;top:631.3px;">3996.08</span><span class="t val y" style="left:1777px;top:631.3px;">5583万</span><span class="t val s" style="left:1593.5px;top:649.3px;">14:56</span><span class="t val g" style="left:1674.5px;top:649.3px;">3996.80</span><span class="t val y" style="left:1777px;top:649.3px;">4704万</span><span class="t val s" style="left:1593.5px;top:667.3px;">14:56</span><span class="t val g" style="left:1674.5px;top:667.3px;">3997.15</span><span class="t val y" style="left:1777px;top:667.3px;">4728万</span><span class="t val s" style="left:1593.5px;top:685.3px;">14:56</span><span class="t val g" style="left:1674.5px;top:685.3px;">3998.62</span><span class="t val y" style="left:1777px;top:685.3px;">5351万</span><span class="t val s" style="left:1593.5px;top:703.3px;">14:56</span><span class="t val g" style="left:1674.5px;top:703.3px;">3999.22</span><span class="t val y" style="left:1777px;top:703.3px;">4285万</span><span class="t val s" style="left:1593.5px;top:721.3px;">14:56</span><span class="t val g" style="left:1674.5px;top:721.3px;">3999.51</span><span class="t val y" style="left:1777px;top:721.3px;">3957万</span><span class="t val s" style="left:1593.5px;top:739.3px;">14:56</span><span class="t val g" style="left:1674.5px;top:739.3px;">3998.37</span><span class="t val y" style="left:1777px;top:739.3px;">4389万</span><span class="t val s" style="left:1593.5px;top:757.3px;">14:56</span><span class="t val g" style="left:1674.5px;top:757.3px;">3998.50</span><span class="t val y" style="left:1777px;top:757.3px;">4763万</span><span class="t val s" style="left:1593.5px;top:775.3px;">14:56</span><span class="t val g" style="left:1674.5px;top:775.3px;">3998.65</span><span class="t val y" style="left:1777px;top:775.3px;">5541万</span><span class="t val s" style="left:1593.5px;top:793.3px;">14:56</span><span class="t val g" style="left:1674.5px;top:793.3px;">3999.60</span><span class="t val y" style="left:1777px;top:793.3px;">4385万</span><span class="t val s" style="left:1593.5px;top:811.3px;">14:56</span><span class="t val g" style="left:1674.5px;top:811.3px;">3999.89</span><span class="t val y" style="left:1777px;top:811.3px;">5026万</span><span class="t val s" style="left:1593.5px;top:829.3px;">14:56</span><span class="t val g" style="left:1674.5px;top:829.3px;">4000.79</span><span class="t val y" style="left:1777px;top:829.3px;">4276万</span><span class="t val s" style="left:1593.5px;top:847.3px;">14:56</span><span class="t val g" style="left:1674.5px;top:847.3px;">4001.17</span><span class="t val y" style="left:1777px;top:847.3px;">4226万</span><span class="t val s" style="left:1593.5px;top:865.3px;">14:56</span><span class="t val g" style="left:1674.5px;top:865.3px;">4001.43</span><span class="t val y" style="left:1777px;top:865.3px;">4624万</span><span class="t val s" style="left:1593.5px;top:883.3px;">14:56</span><span class="t val g" style="left:1674.5px;top:883.3px;">4001.67</span><span class="t val y" style="left:1777px;top:883.3px;">5184万</span><span class="t val s" style="left:1593.5px;top:901.3px;">14:56</span><span class="t val g" style="left:1674.5px;top:901.3px;">4000.91</span><span class="t val y" style="left:1777px;top:901.3px;">5844万</span><span class="t val s" style="left:1593.5px;top:919.3px;">14:57</span><span class="t val g" style="left:1674.5px;top:919.3px;">4000.65</span><span class="t val y" style="left:1777px;top:919.3px;">2225万</span></div>
<svg width="1811" height="939" viewBox="0 0 1811 939" style="position:absolute;left:0;top:0;pointer-events:none"><ellipse cx="36.75" cy="537.7" rx="35.25" ry="25.900000000000006" fill="none" stroke="#fff" stroke-width="3"/><ellipse cx="1518.15" cy="265.04999999999995" rx="33.05000000000007" ry="54.349999999999994" fill="none" stroke="#fff" stroke-width="3"/><ellipse cx="28.5" cy="730.25" rx="26.0" ry="62.75" fill="none" stroke="#fff" stroke-width="3"/><ellipse cx="1529.5" cy="732.25" rx="28.0" ry="70.75" fill="none" stroke="#fff" stroke-width="3"/></svg>
</div></body></html>
